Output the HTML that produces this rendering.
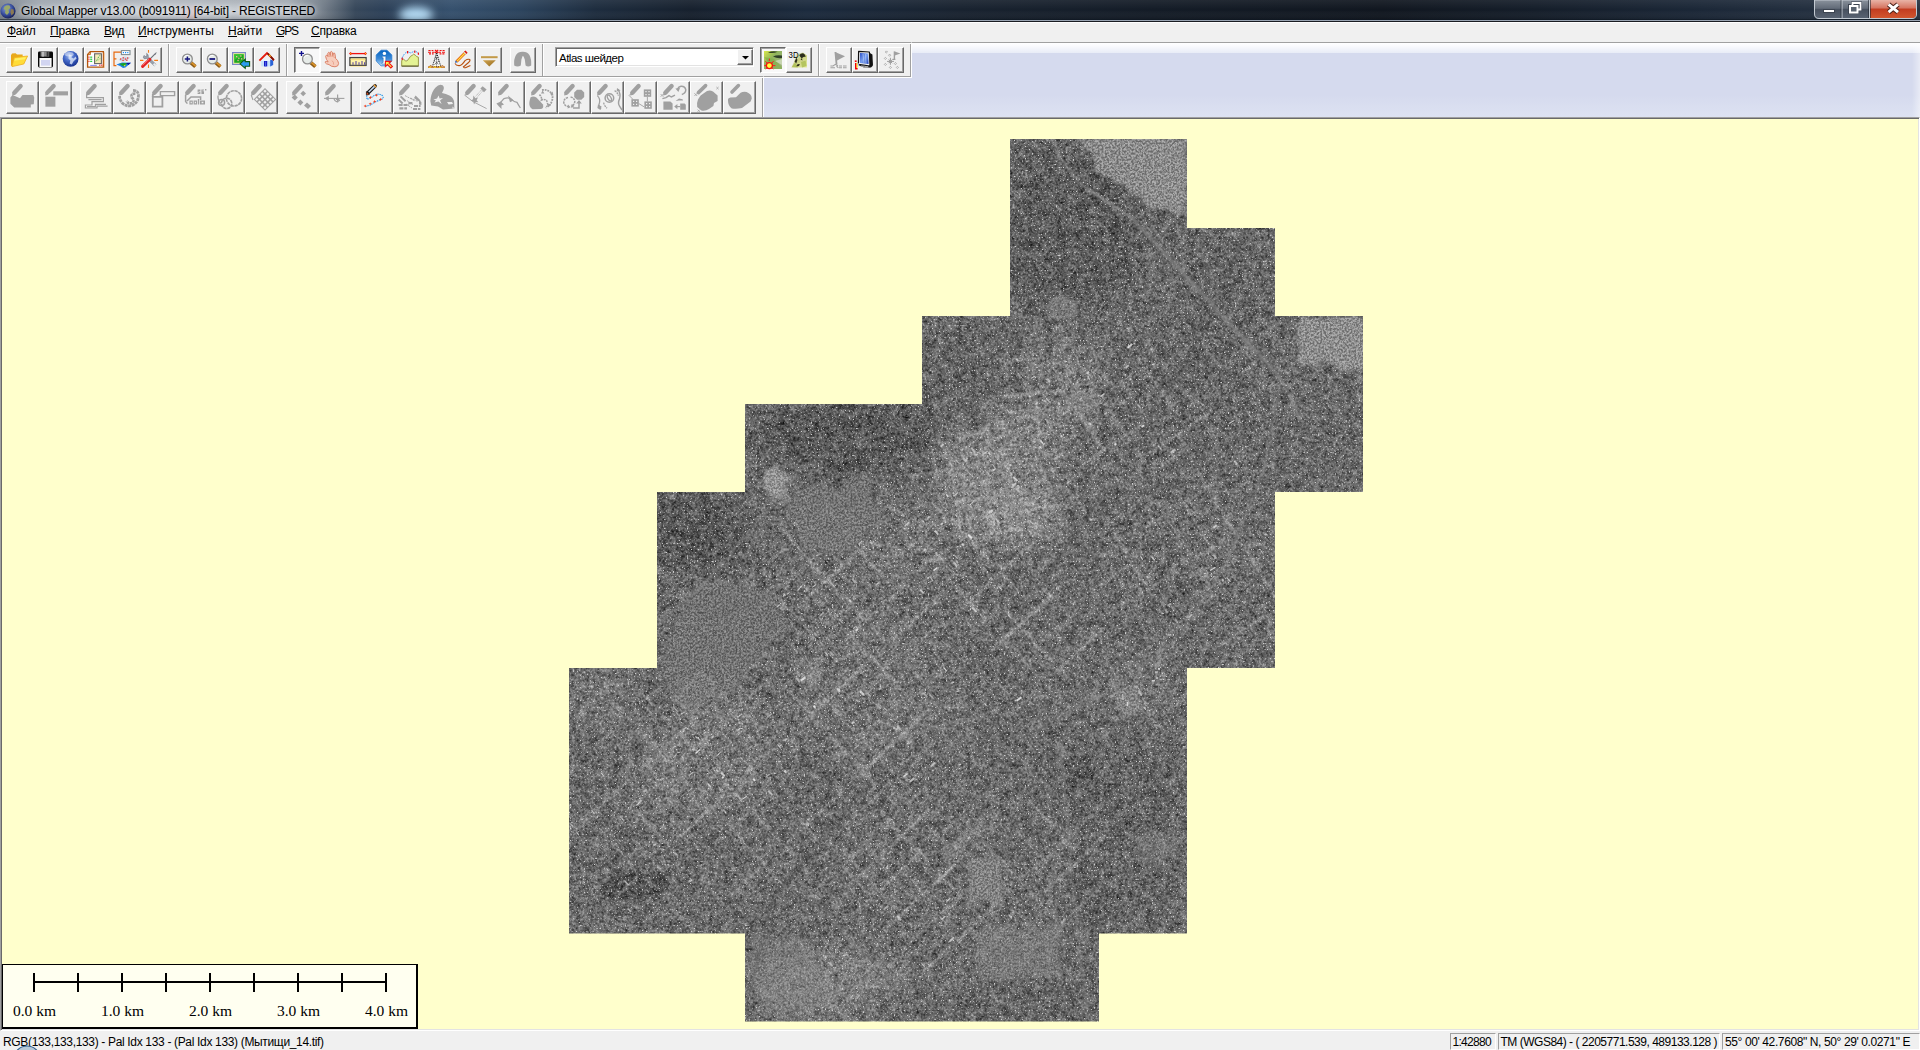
<!DOCTYPE html>
<html lang="ru">
<head>
<meta charset="utf-8">
<title>Global Mapper v13.00 (b091911) [64-bit] - REGISTERED</title>
<style>
html,body{margin:0;padding:0;}
body{width:1920px;height:1050px;overflow:hidden;position:relative;background:#ffffcc;font-family:"Liberation Sans",sans-serif;font-size:12px;color:#000;}
.abs{position:absolute;}
/* ---------- title bar ---------- */
#title{left:0;top:0;width:1920px;height:22px;background:#141c28;overflow:hidden;}
#title .txt{left:21px;top:4px;font-size:12px;line-height:14px;color:#000;white-space:nowrap;letter-spacing:-.19px;text-shadow:0 0 4px rgba(255,255,255,.7);}
/* ---------- menu ---------- */
#menu{left:0;top:22px;width:1920px;height:20px;background:#f0f0f0;border-top:1px solid #fff;box-sizing:border-box;}
#menu span{position:absolute;top:1px;font-size:12px;line-height:14px;white-space:nowrap;}
#menu i{position:absolute;left:0;top:12px;height:1px;background:#000;}
/* ---------- toolbars ---------- */
#tbzone{left:0;top:42px;width:1920px;height:75px;box-sizing:border-box;border-top:1px solid #a0a0a0;background:linear-gradient(#ffffff 0,#fcfcfe 2px,#e8ecf7 10px,#d5daee 10px,#d5daee 52px,#dde2f2 74px);}
#tb1{left:0;top:42px;width:912px;height:36px;background:#f0f0f0;box-sizing:border-box;border-top:1px solid #a0a0a0;border-right:1px solid #fff;border-bottom:1px solid #fff;box-shadow:inset 0 1px 0 #fff,inset -1px -1px 0 #a0a0a0;}
#tb2{left:0;top:76px;width:764px;height:41px;background:#f0f0f0;box-sizing:border-box;border-top:1px solid #a0a0a0;border-right:1px solid #fff;box-shadow:inset 0 1px 0 #fff,inset -1px 0 0 #a0a0a0;}
.b1{position:absolute;top:47px;width:26px;height:26px;box-sizing:border-box;background:#f0f0f0;border:1px solid;border-color:#fff #696969 #696969 #fff;box-shadow:inset -1px -1px 0 #a0a0a0;}
.b1.down{border-color:#696969 #fff #fff #696969;box-shadow:inset 1px 1px 0 #a0a0a0;background:#f8f8f8;}
.b2{position:absolute;top:81px;width:33px;height:33px;box-sizing:border-box;background:#f0f0f0;border:1px solid;border-color:#fff #696969 #696969 #fff;box-shadow:inset -1px -1px 0 #a0a0a0;}
.b1 svg,.b2 svg{position:absolute;left:0;top:0;}
.sep{position:absolute;top:44px;width:1px;height:32px;background:#a0a0a0;border-right:1px solid #fff;}
#combo{left:555px;top:47px;width:199px;height:20px;box-sizing:border-box;background:#fff;border:1px solid;border-color:#a0a0a0 #fff #fff #a0a0a0;box-shadow:inset 1px 1px 0 #696969,inset -1px -1px 0 #e3e3e3;}
#combo .ctext{left:3px;top:4px;font-size:11.5px;line-height:13px;white-space:nowrap;letter-spacing:-.5px;}
#combo .cbtn{left:181px;top:1px;width:16px;height:16px;box-sizing:border-box;background:#f0f0f0;border:1px solid;border-color:#fff #696969 #696969 #fff;box-shadow:inset -1px -1px 0 #a0a0a0;}
#combo .cbtn svg{position:absolute;left:-1px;top:-1px;}
/* ---------- map ---------- */
#map{left:0;top:117px;width:1920px;height:914px;background:#ffffcc;box-sizing:border-box;border:1px solid;border-color:#a0a0a0 #fff #fff #a0a0a0;box-shadow:inset 1px 1px 0 #696969,inset -1px -1px 0 #e3e3e3;}
/* ---------- status ---------- */
#status{left:0;top:1031px;width:1920px;height:19px;background:#f0f0f0;}
#status span{position:absolute;top:4px;font-size:12px;line-height:14px;white-space:nowrap;}
.pane{position:absolute;top:1033px;height:17px;box-sizing:border-box;border:1px solid;border-color:#a0a0a0 #fff #fff #a0a0a0;}
</style>
</head>
<body>
<!-- TITLE -->
<div id="title" class="abs">
  <svg class="abs" style="left:0;top:0" width="1920" height="22" viewBox="0 0 1920 22">
    <defs>
      <linearGradient id="tbg" x1="0" y1="0" x2="1920" y2="0" gradientUnits="userSpaceOnUse">
        <stop offset="0" stop-color="#7d858f"/><stop offset=".02" stop-color="#9aa2ab"/><stop offset=".09" stop-color="#a9afb6"/>
        <stop offset=".15" stop-color="#9fa6ae"/><stop offset=".17" stop-color="#6d7884"/><stop offset=".185" stop-color="#36475a"/>
        <stop offset=".2" stop-color="#2c4058"/><stop offset=".235" stop-color="#35506d"/><stop offset=".27" stop-color="#2c445e"/>
        <stop offset=".31" stop-color="#1d2c3e"/><stop offset=".36" stop-color="#16202d"/><stop offset=".42" stop-color="#1b2a3d"/>
        <stop offset=".5" stop-color="#18222f"/><stop offset=".6" stop-color="#131b26"/><stop offset=".72" stop-color="#10161f"/>
        <stop offset=".8" stop-color="#141d29"/><stop offset=".88" stop-color="#1a2636"/><stop offset=".94" stop-color="#222e3e"/><stop offset="1" stop-color="#2a3442"/>
      </linearGradient>
      <linearGradient id="tsh" x1="0" y1="0" x2="0" y2="1"><stop offset="0" stop-color="#fff" stop-opacity=".07"/><stop offset=".5" stop-color="#fff" stop-opacity="0"/><stop offset="1" stop-color="#000" stop-opacity=".12"/></linearGradient>
      <linearGradient id="cbg" x1="0" y1="0" x2="0" y2="1"><stop offset="0" stop-color="#8a929c"/><stop offset=".45" stop-color="#626b78"/><stop offset=".5" stop-color="#47505e"/><stop offset="1" stop-color="#5a6473"/></linearGradient>
      <linearGradient id="crd" x1="0" y1="0" x2="0" y2="1"><stop offset="0" stop-color="#e9b3a6"/><stop offset=".45" stop-color="#d5735f"/><stop offset=".5" stop-color="#c23c20"/><stop offset="1" stop-color="#d2562f"/></linearGradient>
      <radialGradient id="earth" cx=".4" cy=".35" r=".7"><stop offset="0" stop-color="#8aa0d8"/><stop offset=".6" stop-color="#344a9a"/><stop offset="1" stop-color="#141a4a"/></radialGradient>
      <filter id="tglow" x="-10%" y="-100%" width="120%" height="300%"><feGaussianBlur stdDeviation="5"/></filter>
      <filter id="tglow2" x="-50%" y="-50%" width="200%" height="200%"><feGaussianBlur stdDeviation="4"/></filter>
    </defs>
    <rect x="0" y="0" width="1920" height="20" fill="url(#tbg)"/>
    <ellipse cx="416" cy="15" rx="17" ry="8" fill="#b4dcf6" filter="url(#tglow2)"/>
    <ellipse cx="170" cy="11" rx="150" ry="6" fill="#e4e8ec" opacity=".75" filter="url(#tglow)"/>
    <ellipse cx="190" cy="14" rx="8" ry="5" fill="#e9a0a8" opacity=".45" filter="url(#tglow2)"/>
    <rect x="0" y="0" width="1920" height="20" fill="url(#tsh)"/>
    <rect x="0" y="19" width="1920" height="1" fill="#0e1722" opacity=".55"/>
    <rect x="0" y="20" width="1920" height="1" fill="#9aa4b2"/>
    <rect x="0" y="21" width="1920" height="1" fill="#1a1c22"/>
    <!-- app icon -->
    <circle cx="8" cy="11" r="7.6" fill="url(#earth)"/>
    <path d="M4.6 6.4 Q7 4.6 9.6 5.4 L10.4 8 L8.4 9.6 L9 12.4 L7 15 L5 13 L5.6 10 L3.6 9Z" fill="#9aa86a"/>
    <path d="M11 9 L13.6 9.6 L14 13 L11.6 15.4 L10.4 12.4Z" fill="#8c7a52"/>
    <!-- caption buttons -->
    <path d="M1814.5 0 V14 Q1814.5 18.5 1819 18.5 H1912 Q1916.5 18.5 1916.5 14 V0Z" fill="url(#cbg)" stroke="#c3cad2" stroke-width="1"/>
    <path d="M1869.5 0 H1916 V14 Q1916 18 1912 18 H1869.5Z" fill="url(#crd)"/>
    <path d="M1842 0 V18 M1869.5 0 V18" stroke="#c3cad2" stroke-width="1"/>
    <path d="M1841 0 V18 M1868.5 0 V18 M1870.5 0 V18" stroke="#1c222c" stroke-width="1" opacity=".55"/>
    <rect x="1823.5" y="9.5" width="11" height="3" fill="#fff" stroke="#3c4450" stroke-width="1"/>
    <path d="M1852.5 3 H1860.5 V9.5 H1852.5Z M1849.5 5.5 H1857.5 V12.5 H1849.5Z" fill="none" stroke="#3c4450" stroke-width="3"/>
    <path d="M1852.5 3 H1860.5 V9.5 H1852.5Z" fill="none" stroke="#fff" stroke-width="1.8"/>
    <path d="M1850 6 H1857.5 V12.5 H1850Z" fill="#59636f" stroke="#fff" stroke-width="2"/>
    <path d="M1888.6 4.4 L1898 12.2 M1898 4.4 L1888.6 12.2" stroke="#4a2018" stroke-width="5"/>
    <path d="M1888.6 4.4 L1898 12.2 M1898 4.4 L1888.6 12.2" stroke="#fff" stroke-width="3"/>
  </svg>
  <div class="abs txt">Global Mapper v13.00 (b091911) [64-bit] - REGISTERED</div>
</div>
<!-- MENU -->
<div id="menu" class="abs">
  <span style="left:7px;letter-spacing:-0.25px">Файл<i style="width:9px"></i></span>
  <span style="left:50px;letter-spacing:-0.17px">Правка<i style="width:8.5px"></i></span>
  <span style="left:104px;letter-spacing:-0.57px">Вид<i style="width:7.5px"></i></span>
  <span style="left:138px;letter-spacing:0.1px">Инструменты<i style="width:8.7px"></i></span>
  <span style="left:228px;letter-spacing:0px">Найти<i style="width:8.7px"></i></span>
  <span style="left:276px;letter-spacing:-1.2px">GPS<i style="width:8.2px"></i></span>
  <span style="left:311px;letter-spacing:-0.22px">Справка<i style="width:8.5px"></i></span>
</div>
<!-- TOOLBARS -->
<div id="tbzone" class="abs"></div>
<div id="tb1" class="abs"></div>
<div id="tb2" class="abs"></div>
<div class="b1" style="left:6px"><svg width="26" height="26" viewBox="0 0 26 26" style="left:-1px;top:-1px"><path d="M5 8.2 L6 6.6 L9.6 6.2 L11 7.6 L16.6 7.6 L16.8 10.2 L8.4 11 L6.2 19.4 L5 18.6Z" fill="#e9a91a"/>
<path d="M8.2 10.6 L21.6 9 L17.8 17 L6 19.6Z" fill="#ffdc38" stroke="#efaf1a" stroke-width=".8"/>
<path d="M9 11.6 L20 10.2 L19 12.2 L8.4 13.8Z" fill="#fff36a" opacity=".9"/></svg></div>
<div class="b1" style="left:32px"><svg width="26" height="26" viewBox="0 0 26 26" style="left:-1px;top:-1px"><path d="M6 6 Q6 4.6 7.4 4.6 L19.6 4.6 Q21 4.6 21 6 L21 19 Q21 20.4 19.6 20.4 L7.4 20.4 Q6 20.4 6 19Z" fill="#0a0a0a"/>
<rect x="8.6" y="4.8" width="8.6" height="4.8" fill="#8c8c8c"/>
<rect x="10.2" y="4.8" width="1.6" height="4.8" fill="#c8c8c8"/>
<rect x="14.6" y="4.8" width="2" height="4.8" fill="#3a3a3a"/>
<rect x="7.4" y="11" width="12.2" height="9.2" fill="#fafafa"/>
<rect x="9" y="13" width="9" height="5.6" fill="#d2d5f1"/></svg></div>
<div class="b1" style="left:58px"><svg width="26" height="26" viewBox="0 0 26 26" style="left:-1px;top:-1px"><defs><radialGradient id="gl" cx=".42" cy=".32" r=".75"><stop offset="0" stop-color="#9fb9ee"/><stop offset=".45" stop-color="#4469c8"/><stop offset="1" stop-color="#112a86"/></radialGradient></defs>
<circle cx="12.6" cy="11.8" r="7.9" fill="url(#gl)"/>
<path d="M11 7.5 L14 8.6 L13.4 10.6 L15.6 11.6 L17.6 9.4 L18.6 11.6 L15.4 14.4 L13.8 17.4 L11.6 16.6 L12.4 13.4 L10.4 11.4Z" fill="#dfe7f7" opacity=".8"/>
<ellipse cx="11.2" cy="7.2" rx="4.4" ry="2.2" fill="#fff" opacity=".45"/></svg></div>
<div class="b1" style="left:84px"><svg width="26" height="26" viewBox="0 0 26 26" style="left:-1px;top:-1px"><path d="M6.2 4.6 L19.4 4.6 L19.4 20.2 L3.6 20.2 L3.6 7.4Z" fill="#fefefe" stroke="#b4560c" stroke-width="1.3"/>
<path d="M6.4 4.8 L6.4 7.6 L3.8 7.6Z" fill="#f7c58d" stroke="#b4560c" stroke-width=".8"/>
<rect x="19.8" y="5.4" width="1" height="15.6" fill="#f6b476" opacity=".7"/>
<rect x="10.6" y="6.8" width="6.8" height="9.8" fill="#f6ebb8" stroke="#666" stroke-width="1.1"/>
<path d="M12 14.4 L13.4 12.2 L14.6 10 L15.8 8.4 M14 13.4 L15.8 11.6" stroke="#2fae3b" stroke-width=".9" stroke-dasharray="1.2 .8" fill="none"/>
<g fill="#13c82c"><rect x="6.2" y="9.6" width="2" height="1.1"/><rect x="6.2" y="11.7" width="2" height="1.1"/><rect x="6.2" y="13.8" width="2" height="1.1"/></g>
<g fill="#f01414"><rect x="4.4" y="9.6" width="1.1" height="1.1"/><rect x="4.4" y="11.7" width="1.1" height="1.1"/><rect x="4.4" y="13.8" width="1.1" height="1.1"/><rect x="15.2" y="17.6" width="1.2" height="1.2"/><rect x="17.2" y="17.6" width="1.2" height="1.2"/></g>
<rect x="6.2" y="17.9" width="6.6" height=".9" fill="#7b7bf0"/></svg></div>
<div class="b1" style="left:110px"><svg width="26" height="26" viewBox="0 0 26 26" style="left:-1px;top:-1px"><path d="M11 5.2 H4 V18.6 H6.4 M4 11.8 H6.4" stroke="#e8690f" stroke-width="1.2" fill="none"/>
<rect x="11.4" y="3.6" width="8.6" height="4" fill="#fff" stroke="#7f8a8f" stroke-width="1.1"/>
<g fill="#1890ff"><rect x="12.8" y="5" width="1.2" height="1.2"/><rect x="15" y="5" width="1.2" height="1.2"/><rect x="17.2" y="5" width="1.2" height="1.2"/></g>
<path d="M8.6 12.6 L14 9.4 L20.4 10.4 L16 14.2 L10.6 14.2Z" fill="#bfd5e6" opacity=".85"/>
<g fill="#f03030"><rect x="10" y="11.4" width="1.3" height="1.3"/><rect x="12.6" y="10.2" width="1.3" height="1.3"/><rect x="14.8" y="11.4" width="1.3" height="1.3"/><rect x="17" y="10.4" width="1.3" height="1.3"/><rect x="12.4" y="12.8" width="1.3" height="1.3"/><rect x="16.2" y="12.6" width="1.3" height="1.3"/></g>
<path d="M6.4 17.4 L12 15.6 L21 15.8 L15.4 20.6 L13 21 L10 19Z" fill="#1d7ee8"/>
<path d="M9.4 16.8 L13.4 16 L17.6 16.2 L14.2 19.4 L11.6 18.6Z" fill="#18a22a"/>
<path d="M16 16 L21 15.8 L18.4 18Z" fill="#0b1a9a"/>
<path d="M13.6 18.4 L15.6 17.6 L15 19.8Z" fill="#f3e82c"/></svg></div>
<div class="b1" style="left:136px"><svg width="26" height="26" viewBox="0 0 26 26" style="left:-1px;top:-1px"><path d="M4 13.4 H7.4 M18.2 13.4 H22 M12.5 3 V5.8 M12.5 17.6 V21" stroke="#f57d14" stroke-width="1.1"/>
<path d="M8.2 8.4 Q6.4 10.4 8.4 11.8 L10.6 11.4 L18.4 19 L20 17.4 L12.2 9.8 Q12.8 7.4 10.6 6.4 L11 8.6 L9.4 9.6Z" fill="#9da3ad" stroke="#6c7380" stroke-width=".6"/>
<path d="M17 17.6 L19 19.4 L20.4 18 L18.4 16Z" fill="#e9edf0"/>
<path d="M13.6 12.4 L19.6 6.4" stroke="#6a6f78" stroke-width="1.2"/>
<path d="M19.2 7.6 L20.2 5.4" stroke="#6a6f78" stroke-width=".9"/>
<path d="M6.6 19.4 L13.8 12.4" stroke="#e32424" stroke-width="3" stroke-linecap="round"/>
<path d="M7 18 L12.8 12.4" stroke="#f88" stroke-width=".8" stroke-linecap="round"/></svg></div>
<div class="b1" style="left:176px"><svg width="26" height="26" viewBox="0 0 26 26" style="left:-1px;top:-1px"><path d="M14.8 15.6 L19.4 19.6" stroke="#8a5a17" stroke-width="3.6" stroke-linecap="butt"/>
<path d="M15.0 15.2 L19.8 19.4" stroke="#dc942b" stroke-width="1.6"/>
<circle cx="11.4" cy="12" r="4.9" fill="#e6ebe8" stroke="#8e8e8e" stroke-width="1.3"/>
<path d="M8.0 10.8 A3.8 3.8 0 0 1 12.4 8.4" stroke="#fff" stroke-width="1" fill="none"/><path d="M8.8 12 H14.0 M11.4 9.4 V14.6" stroke="#16167e" stroke-width="1.5"/></svg></div>
<div class="b1" style="left:202px"><svg width="26" height="26" viewBox="0 0 26 26" style="left:-1px;top:-1px"><path d="M13.700000000000001 15.6 L18.3 19.6" stroke="#8a5a17" stroke-width="3.6" stroke-linecap="butt"/>
<path d="M13.9 15.2 L18.700000000000003 19.4" stroke="#dc942b" stroke-width="1.6"/>
<circle cx="10.3" cy="12" r="4.9" fill="#e6ebe8" stroke="#8e8e8e" stroke-width="1.3"/>
<path d="M6.9 10.8 A3.8 3.8 0 0 1 11.3 8.4" stroke="#fff" stroke-width="1" fill="none"/><path d="M7.500000000000001 12 H13.100000000000001" stroke="#16167e" stroke-width="1.8"/></svg></div>
<div class="b1" style="left:228px"><svg width="26" height="26" viewBox="0 0 26 26" style="left:-1px;top:-1px"><rect x="4.6" y="5.6" width="12.8" height="11.8" fill="#f2f29a" stroke="#7a88c8" stroke-width="1.2"/>
<rect x="6.2" y="7.2" width="9.6" height="8.6" fill="#1ea820"/>
<path d="M6.2 7.2 H15.8 L6.2 13Z" fill="#3fd238" opacity=".7"/>
<g fill="#f9b0a0"><rect x="8" y="9" width="1.3" height="1.3"/><rect x="10.2" y="10.6" width="1.3" height="1.3"/><rect x="12.2" y="8.4" width="1.3" height="1.3"/><rect x="9.4" y="12.8" width="1.3" height="1.3"/><rect x="13" y="11.2" width="1.3" height="1.3"/></g>
<path d="M12 16.8 L17.2 12.2 L17.2 14.6 L21.6 14.6 L21.6 19.2 L17.2 19.2 L17.2 21.4Z" fill="#2a9cf0" stroke="#0d5a12" stroke-width="1.1" stroke-linejoin="miter"/></svg></div>
<div class="b1" style="left:254px"><svg width="26" height="26" viewBox="0 0 26 26" style="left:-1px;top:-1px"><path d="M7.2 12.6 H17.4 V19.4 H7.2Z" fill="#e9f4ff"/>
<path d="M7.2 14 H17.4 V19.4 H7.2Z" fill="#b7d9f7" opacity=".7"/>
<path d="M16.2 12.4 L19.2 13.4 V18 L16.2 19.4Z" fill="#2a63d8"/>
<rect x="10" y="14" width="3.2" height="5.4" fill="#1818c4"/>
<rect x="11.3" y="14.6" width=".8" height="4.8" fill="#5a7df0"/>
<path d="M5.4 13.6 L13 6 L20 13.2" stroke="#e51a0c" stroke-width="1.9" fill="none" stroke-linejoin="miter"/>
<path d="M12.6 6.2 L14.8 6.2 L20.2 12.2 L19.4 14Z" fill="#7a1408"/>
<path d="M15 7.8 L16.6 9.6" stroke="#f5b018" stroke-width="1.4"/></svg></div>
<div class="b1 down" style="left:294px"><svg width="26" height="26" viewBox="0 0 26 26" style="left:-1px;top:-1px"><path d="M5 6.4 H10 M7.5 3.9 V8.9" stroke="#10108c" stroke-width="1.4"/>
<path d="M16.8 15.6 L21.4 19.6" stroke="#8a5a17" stroke-width="3.6" stroke-linecap="butt"/>
<path d="M17.0 15.2 L21.8 19.4" stroke="#dc942b" stroke-width="1.6"/>
<circle cx="13.4" cy="12" r="4.9" fill="#e6ebe8" stroke="#8e8e8e" stroke-width="1.3"/>
<path d="M10.0 10.8 A3.8 3.8 0 0 1 14.4 8.4" stroke="#fff" stroke-width="1" fill="none"/></svg></div>
<div class="b1" style="left:320px"><svg width="26" height="26" viewBox="0 0 26 26" style="left:-1px;top:-1px"><path d="M5.6 9.4 Q6.4 7.4 7.4 8.2 L8 9.6 L7.8 6.2 Q8.6 4.4 9.8 6 L10.2 8.6 L10.4 5 Q11.6 3.6 12.4 5.4 L12.8 8.8 L13.4 6.2 Q14.8 5.4 15 7.2 L15.6 11.4 Q18.4 13.6 18.6 16.4 Q18.6 19.6 15 19.8 Q11 19.8 9 17.6 L6.4 16.8 Q4.6 15.8 5.4 14.6 Q6.6 14.2 8.2 15 Q6 12.4 5.6 9.4Z" fill="#f7cdbd" stroke="#d8795f" stroke-width=".9" stroke-linejoin="round"/>
<path d="M9 9.4 Q12 8 15 10.6 M12 13.6 Q14 15 13.6 17.6" stroke="#e59a84" stroke-width=".8" fill="none"/></svg></div>
<div class="b1" style="left:346px"><svg width="26" height="26" viewBox="0 0 26 26" style="left:-1px;top:-1px"><path d="M4 6.6 H20" stroke="#f01010" stroke-width="1.3"/>
<path d="M3 6.6 L4.6 5 L6.2 6.6 L4.6 8.2Z M17.8 6.6 L19.4 5 L21 6.6 L19.4 8.2Z" fill="#f01010"/>
<rect x="19" y="6" width="1" height="1.2" fill="#fc0"/><rect x="4.2" y="6" width="1" height="1.2" fill="#fc0"/>
<rect x="3.9" y="10.6" width="16.2" height="7.8" fill="#fff3a8" stroke="#414141" stroke-width="1.3"/>
<rect x="4.4" y="18.9" width="15.4" height=".9" fill="#ffe9a0"/>
<path d="M7 15.2 V17.8 M10 14 V17.8 M13 15.2 V17.8 M16 14 V17.8 M18.6 15.2 V17.8" stroke="#5c4aa0" stroke-width="1.1"/>
<path d="M4.6 12.4 H19.4" stroke="#f7dd80" stroke-width="1"/></svg></div>
<div class="b1" style="left:372px"><svg width="26" height="26" viewBox="0 0 26 26" style="left:-1px;top:-1px"><defs><linearGradient id="ig" x1="0" y1="0" x2="0" y2="1"><stop offset="0" stop-color="#0462bf"/><stop offset=".55" stop-color="#3b8ad8"/><stop offset="1" stop-color="#b9dcf6"/></linearGradient></defs>
<path d="M9 3.2 H15 L19.8 8 V14 L15 18.8 H9 L4.2 14 V8Z" fill="url(#ig)" stroke="#2a7bd0" stroke-width=".8"/>
<circle cx="12.4" cy="6.4" r="1.7" fill="#fff"/>
<path d="M10.2 9.2 H13.8 V15.4 H15 V17 H10 V15.4 H11.2 V10.8 H10.2Z" fill="#fff" stroke="#1363b4" stroke-width=".5"/>
<path d="M13.4 14.4 H18.8 L17 16 L20.4 19.4 L18.8 21 L15.4 17.6 L13.4 19.4Z" fill="#ffee4a" stroke="#f01414" stroke-width="1.1" stroke-linejoin="miter"/></svg></div>
<div class="b1" style="left:398px"><svg width="26" height="26" viewBox="0 0 26 26" style="left:-1px;top:-1px"><path d="M3.7 19 V13.4 L5.6 12.2 L7.4 13.8 L8.8 14 L10.6 12 L12.6 9.2 L14.2 8.4 L15.6 7.2 L17.4 8.2 L18.6 9.6 L20.4 10.2 V19Z" fill="#e4f394" stroke="#9a9a48" stroke-width="1"/>
<path d="M3.6 19.2 H20.6" stroke="#6a6a40" stroke-width="1.2"/>
<path d="M4 11.6 Q6 6 9.6 4.6 Q11.6 5.6 13 6 Q15 4.6 17 4.2 Q19.6 4.8 20.4 7" stroke="#1e90ff" stroke-width="1" stroke-dasharray="1.2 .8" fill="none"/>
<g fill="#f01010"><rect x="3.6" y="10.6" width="1.2" height="2.4"/><rect x="9" y="4" width="1.2" height="2.4"/><rect x="16.2" y="3.6" width="1.2" height="2.2"/><rect x="19.8" y="5.6" width="1.2" height="2.2"/></g></svg></div>
<div class="b1" style="left:424px"><svg width="26" height="26" viewBox="0 0 26 26" style="left:-1px;top:-1px"><path d="M12.6 5.6 L8.4 19.6 H16.8Z" fill="#fcfcfc" stroke="#222" stroke-width="1" stroke-dasharray="1.2 .8"/>
<path d="M12.6 6 V19.6 M11 10 L14.4 13 M14.2 10 L10.6 13.4 M10.4 14 L15 17.6 M15 14 L9.8 18" stroke="#222" stroke-width=".8" stroke-dasharray="1 .9"/>
<path d="M4.4 3.5 H6.6 M7.6 3.5 H9.4 M4 5.2 H7 M8 5.2 H10.6 M5 6.9 H7 M8 6.9 H9.6 M15.6 3.5 H17.6 M18.6 3.5 H20.6 M14.6 5.2 H17 M18 5.2 H21 M15.6 6.9 H17.4 M18.4 6.9 H20.4 M11 3 L14.2 6 M14.2 3 L11 6" stroke="#f01010" stroke-width="1.1"/>
<path d="M4 20.2 H21" stroke="#c7781a" stroke-width="1.3"/>
<path d="M5 20.2 H7 M10 20.2 H12 M15 20.2 H17" stroke="#f7d321" stroke-width="1.3"/>
<path d="M4.6 20 L6 18.6 L9 19.6 M20.4 20 L19 18.6 L16.2 19.6" stroke="#b5651d" stroke-width=".9" fill="none"/></svg></div>
<div class="b1" style="left:450px"><svg width="26" height="26" viewBox="0 0 26 26" style="left:-1px;top:-1px"><path d="M6.6 14.6 L16.2 4.8" stroke="#e8650a" stroke-width="2.8"/>
<path d="M6.9 14.3 L16 5" stroke="#ffe24a" stroke-width="1.1"/>
<path d="M15.4 3.6 L17.6 5.8 L16.6 7 L14.2 4.8Z" fill="#d81414"/>
<path d="M14.2 4.8 L16.6 7 L16 7.6 L13.6 5.4Z" fill="#cfd6e4"/>
<path d="M5 15.8 L5.6 13.4 L7.6 15.2Z" fill="#1f4fa8"/>
<path d="M5 16.4 Q6 18.8 9.4 18.6 Q12 18.4 15 13.6 Q18 11.6 19.8 12.6 Q20.6 14 18 16 Q14 19.4 13.4 19.8 Q14 21.4 16 20.4 L20.4 18.4" stroke="#b8500f" stroke-width="1.1" fill="none"/></svg></div>
<div class="b1" style="left:476px"><svg width="26" height="26" viewBox="0 0 26 26" style="left:-1px;top:-1px"><defs><linearGradient id="tg" x1="0" y1="0" x2="1" y2="1"><stop offset="0" stop-color="#d3a650"/><stop offset="1" stop-color="#946a1f"/></linearGradient></defs>
<rect x="5" y="9.2" width="16.6" height="2" fill="#c39a48"/>
<path d="M6.8 13.2 H19.8 L13.3 19.4Z" fill="url(#tg)"/></svg></div>
<div class="b1" style="left:510px"><svg width="26" height="26" viewBox="0 0 26 26" style="left:-1px;top:-1px"><path d="M4.2 18.6 Q3.6 12 6 8 Q8.4 4.6 12.6 4.8 Q17 4.6 19.4 8 Q21.6 12 21.2 18.6 Q18 20.4 15.6 18.6 L14.8 12.6 L13.6 9.4 L12.6 9 L11.4 12.6 L10.8 18.6 Q7.6 20.4 4.2 18.6Z" fill="#a0a0a0"/></svg></div>
<div class="b1 down" style="left:760px"><svg width="26" height="26" viewBox="0 0 26 26" style="left:-1px;top:-1px"><defs><linearGradient id="sg" x1="0" y1="0" x2="1" y2="1"><stop offset="0" stop-color="#dbe84a"/><stop offset=".4" stop-color="#8fb45c"/><stop offset="1" stop-color="#a9b78f"/></linearGradient></defs>
<rect x="4" y="4" width="18" height="18" fill="url(#sg)"/>
<path d="M8 5.4 Q13 3.6 17.6 4.8 Q13 6.8 8 5.4Z M13 9.6 Q17 7.6 22 8.6 V11 Q17 11.6 13 9.6Z" fill="#1c2a1c" opacity=".85"/>
<path d="M4 10 L14 12 L22 20 V22 H14Z" fill="#7fae45" opacity=".6"/>
<path d="M15 14 L22 12 V18Z" fill="#d9e3c8" opacity=".7"/>
<path d="M9.4 11.6 V14 M4.2 18.6 H6 M12.8 18.6 H15.4 M5.4 14.2 L7 16 M13.6 14 L12 16 M5.6 22 L7 20.8 M12 20.8 L13.4 22" stroke="#f62020" stroke-width="1"/>
<circle cx="9.4" cy="18.6" r="3" fill="#ffff3a" stroke="#f41010" stroke-width="1.3"/></svg></div>
<div class="b1" style="left:786px"><svg width="26" height="26" viewBox="0 0 26 26" style="left:-1px;top:-1px"><defs><linearGradient id="dg" x1="0" y1="0" x2="1" y2="1"><stop offset="0" stop-color="#e9f3ee"/><stop offset=".5" stop-color="#c9cf82"/><stop offset="1" stop-color="#e6ec9c"/></linearGradient></defs>
<path d="M10 7.2 L17 5.4 L21 8.6 V20.6 H5.4 L8 15Z" fill="url(#dg)"/>
<path d="M13.2 8 Q15 6 17.6 6.4 Q19.6 7.6 19.6 10 Q17 9 16 11.4 Q14.4 10.6 13.2 8Z M8.6 14.4 L10.6 10.4 L11.4 13 L10.2 16.6Z M9.6 19.4 Q12 16 14 17.4 Q13 20 9.6 19.4Z M14.6 12.4 L16 11 L16.4 13.6Z" fill="#1a1a10" opacity=".9"/>
<path d="M6 20 L9 15.6 L12 20.6Z M15 15 L19.6 13.6 L20.6 19 L16 20.6Z" fill="#a8bb4d" opacity=".75"/>
<text x="2.6" y="10.6" font-family="Liberation Sans, sans-serif" font-size="9.5" fill="#000" textLength="10" lengthAdjust="spacingAndGlyphs">3D</text></svg></div>
<div class="b1" style="left:826px"><svg width="26" height="26" viewBox="0 0 26 26" style="left:-1px;top:-1px"><path d="M9.4 5 L10.6 17.6" stroke="#a0a0a0" stroke-width="1.8"/>
<path d="M9 5 L19 9.2 L10.2 14Z" fill="#a0a0a0"/>
<path d="M4.4 19 H7 L9.4 17.4 L12 19 M4.4 20.8 H9 M10.4 19.4 L12.4 20.8 M13 19 H16 M13 20.8 H16 M17 19 H20.6 M17 20.8 H20.6" stroke="#a0a0a0" stroke-width="1.1" fill="none"/></svg></div>
<div class="b1" style="left:852px"><svg width="26" height="26" viewBox="0 0 26 26" style="left:-1px;top:-1px"><defs><linearGradient id="mg" x1="0" y1="0" x2="1" y2="1"><stop offset="0" stop-color="#2a4fc6"/><stop offset=".5" stop-color="#7aa1ef"/><stop offset="1" stop-color="#1b3fb6"/></linearGradient></defs>
<path d="M17 5.4 L20.4 7.4 L21 18.4 L17.4 20.4Z" fill="#111"/>
<path d="M6.6 4.4 L17.4 5 L18 19 L6.4 17.4Z" fill="#f4f4f4" stroke="#111" stroke-width="1.2" stroke-linejoin="round"/>
<path d="M8 6 L16.2 6.6 L16.6 17 L7.8 16Z" fill="url(#mg)"/>
<path d="M11 7 L12 16.4 M13.4 7 L14 16.6" stroke="#a8c2f6" stroke-width="1" opacity=".8"/>
<path d="M7 18.4 L12 20.6 L19 20.4 L20.6 19 L13 19.4 L8 17.6Z" fill="#111"/>
<path d="M8.8 18.8 L12.4 20 L16 19.8" stroke="#d9d9d9" stroke-width=".8" fill="none"/>
<rect x="2.8" y="13.4" width="1.8" height="1.6" fill="#f60000"/>
<path d="M3 16 H4.6 V21 H5.6 V22.4 H3Z" fill="#f60000"/>
<rect x="4.6" y="15.6" width="1.2" height="5" fill="#ffef2a"/>
<path d="M5.6 15.4 L7.4 17 L6 19.4Z" fill="#a8a6f2"/></svg></div>
<div class="b1" style="left:878px"><svg width="26" height="26" viewBox="0 0 26 26" style="left:-1px;top:-1px"><path d="M16.4 4.4 V12" stroke="#a0a0a0" stroke-width="1.4"/>
<path d="M16.8 4.4 L22.4 6.6 L16.8 8.6Z" fill="#a0a0a0"/>
<path d="M14.4 12.4 H17.4" stroke="#a0a0a0" stroke-width="1.2"/>
<path d="M12.4 10.8 V17.8 M9 14.4 H16 M10.6 12.6 L14.2 16.2 M14.2 12.6 L10.6 16.2" stroke="#a0a0a0" stroke-width="1"/>
<path d="M12.4 12 L14.4 14.4 L12.4 16.8 L10.4 14.4Z" fill="#a0a0a0"/>
<path d="M8.4 3.9 L9.5 5 L8.4 6.1 L7.300000000000001 5Z M11.6 7.1 L12.7 8.2 L11.6 9.299999999999999 L10.5 8.2Z M7.4 10.3 L8.5 11.4 L7.4 12.5 L6.300000000000001 11.4Z M7.4 16.299999999999997 L8.5 17.4 L7.4 18.5 L6.300000000000001 17.4Z M12.4 19.299999999999997 L13.5 20.4 L12.4 21.5 L11.3 20.4Z M17.4 15.500000000000002 L18.5 16.6 L17.4 17.700000000000003 L16.299999999999997 16.6Z M19.4 19.299999999999997 L20.5 20.4 L19.4 21.5 L18.299999999999997 20.4Z" fill="#f0f0f0" stroke="#a0a0a0" stroke-width=".8"/></svg></div>
<div class="sep" style="left:168px"></div>
<div class="sep" style="left:286px"></div>
<div class="sep" style="left:542px"></div>
<div class="sep" style="left:818px"></div>
<div id="combo" class="abs"><div class="abs ctext">Atlas шейдер</div><div class="abs cbtn"><svg width="16" height="16" viewBox="0 0 16 16"><path d="M5 7 H12 L8.5 10.6Z" fill="#000"/></svg></div></div>
<div class="b2" style="left:6px"><svg width="33" height="33" viewBox="0 0 33 33" style="left:-1px;top:-1px"><path d="M14.6 5 L8.6 11.4" stroke="#a0a0a0" stroke-width="4.4" stroke-linecap="round"/><path d="M6.4 10.6 L9.6 13.8 L6.2 14.6Z" fill="#a0a0a0"/><path d="M4.4 16.5 L6.5 14 L14 17.3 L16.5 14 L27.3 14 L28.2 16.5 L27.8 23.2 L24.8 23.6 L24.8 26.5 L8.2 26.5 L4.4 22.8Z" fill="#a0a0a0"/></svg></div>
<div class="b2" style="left:39px"><svg width="33" height="33" viewBox="0 0 33 33" style="left:-1px;top:-1px"><path d="M14.6 5 L8.6 11.4" stroke="#a0a0a0" stroke-width="4.4" stroke-linecap="round"/><path d="M6.4 10.6 L9.6 13.8 L6.2 14.6Z" fill="#a0a0a0"/><path d="M14.3 10.3 H29 V14.4 H14.3Z" fill="#a0a0a0"/><path d="M6.4 15.7 H16.4 V25.7 H6.4Z" fill="#a0a0a0"/><path d="M9 13.6 L13 10.4 L13 14.6Z" fill="#f0f0f0"/></svg></div>
<div class="b2" style="left:80px"><svg width="33" height="33" viewBox="0 0 33 33" style="left:-1px;top:-1px"><path d="M14.6 5 L8.6 11.4" stroke="#a0a0a0" stroke-width="4.4" stroke-linecap="round"/><path d="M6.4 10.6 L9.6 13.8 L6.2 14.6Z" fill="#a0a0a0"/><path d="M6.6 12.4 V16.6 H23.4 V20.6 H12 V24 H5.4 V27 H17 V25.2 H27.6" fill="none" stroke="#a0a0a0" stroke-width="1.2"/><path d="M8.4 18.6 H21.6 M7 25.6 H15.4 V23.4 H26" fill="none" stroke="#a0a0a0" stroke-width="1.1"/></svg></div>
<div class="b2" style="left:113px"><svg width="33" height="33" viewBox="0 0 33 33" style="left:-1px;top:-1px"><path d="M14.6 5 L8.6 11.4" stroke="#a0a0a0" stroke-width="4.4" stroke-linecap="round"/><path d="M6.4 10.6 L9.6 13.8 L6.2 14.6Z" fill="#a0a0a0"/><path d="M20 9.4 Q26 9.6 25.4 15.6 Q25 21 20 24 Q15 26.4 10 22.6 Q6.4 19.4 6.6 15" fill="none" stroke="#a0a0a0" stroke-width="2.8" stroke-dasharray="3 .6"/><path d="M22.4 12.6 Q17.4 12.4 18.6 16.4 Q22 19 19.4 22 Q15.6 23.4 13.6 20" fill="none" stroke="#a0a0a0" stroke-width="2.6" stroke-dasharray="2.6 .6"/></svg></div>
<div class="b2" style="left:146px"><svg width="33" height="33" viewBox="0 0 33 33" style="left:-1px;top:-1px"><path d="M14.6 5 L8.6 11.4" stroke="#a0a0a0" stroke-width="4.4" stroke-linecap="round"/><path d="M6.4 10.6 L9.6 13.8 L6.2 14.6Z" fill="#a0a0a0"/><path d="M14.4 10.6 H28.6 V14.6 H14.4Z" fill="none" stroke="#a0a0a0" stroke-width="1.4"/><path d="M6.8 15.8 H16.4 V25.6 H6.8Z" fill="none" stroke="#a0a0a0" stroke-width="1.8"/><path d="M6.8 13 V16" fill="none" stroke="#a0a0a0" stroke-width="1.8"/></svg></div>
<div class="b2" style="left:179px"><svg width="33" height="33" viewBox="0 0 33 33" style="left:-1px;top:-1px"><path d="M14.6 5 L8.6 11.4" stroke="#a0a0a0" stroke-width="4.4" stroke-linecap="round"/><path d="M6.4 10.6 L9.6 13.8 L6.2 14.6Z" fill="#a0a0a0"/><path d="M6.6 14 V20.4 L8.4 22.6 M8 20 L12 16 H21.6 V19" fill="none" stroke="#a0a0a0" stroke-width="1.5"/><path d="M18.6 8.4 H21.4 V10.2 H19.6 V10.8 H21.4 V13 H18.6 V11.8 H20.2 V11.2 H18.6Z M22.4 8.4 H25 V9.4 H23.6 V10.2 H25 V13 H22.4Z M26 8 H27.4 V9.4 H26Z" fill="#a0a0a0"/><path d="M10.4 19.6 H13.8 V23.4 H10.4Z M14.6 19.6 H18 V23.4 H14.6Z M18.8 18 H20.2 V23.4 H18.8Z M21 19.6 H26 V23.4 H21Z" fill="#a0a0a0"/><path d="M11.6 20.8 H12.8 V22.2 H11.6Z M15.8 20.8 H17 V22.2 H15.8Z M22.6 20.8 H24.4 V22.2 H22.6Z" fill="#f0f0f0"/></svg></div>
<div class="b2" style="left:212px"><svg width="33" height="33" viewBox="0 0 33 33" style="left:-1px;top:-1px"><path d="M14.6 5 L8.6 11.4" stroke="#a0a0a0" stroke-width="4.4" stroke-linecap="round"/><path d="M6.4 10.6 L9.6 13.8 L6.2 14.6Z" fill="#a0a0a0"/><path d="M6 14.6 Q5.6 19.6 9 22.6" fill="none" stroke="#a0a0a0" stroke-width="1.3"/><circle cx="22" cy="17.4" r="7.6" fill="none" stroke="#a0a0a0" stroke-width="1.6" stroke-dasharray="3.4 .6"/><circle cx="14.6" cy="22.4" r="5.2" fill="none" stroke="#a0a0a0" stroke-width="1.6" stroke-dasharray="3.4 .6"/><circle cx="9.6" cy="21.6" r="3" fill="none" stroke="#a0a0a0" stroke-width="1.5"/></svg></div>
<div class="b2" style="left:245px"><svg width="33" height="33" viewBox="0 0 33 33" style="left:-1px;top:-1px"><g transform="translate(20 18.4) rotate(45)"><rect x="-8" y="-8" width="16" height="16" fill="#a0a0a0"/><rect x="-7.0" y="-7.0" width="2.3" height="2.3" fill="#f0f0f0"/><rect x="-7.0" y="-3.1" width="2.3" height="2.3" fill="#f0f0f0"/><rect x="-7.0" y="0.8" width="2.3" height="2.3" fill="#f0f0f0"/><rect x="-7.0" y="4.7" width="2.3" height="2.3" fill="#f0f0f0"/><rect x="-3.1" y="-7.0" width="2.3" height="2.3" fill="#f0f0f0"/><rect x="-3.1" y="-3.1" width="2.3" height="2.3" fill="#f0f0f0"/><rect x="-3.1" y="0.8" width="2.3" height="2.3" fill="#f0f0f0"/><rect x="-3.1" y="4.7" width="2.3" height="2.3" fill="#f0f0f0"/><rect x="0.8" y="-7.0" width="2.3" height="2.3" fill="#f0f0f0"/><rect x="0.8" y="-3.1" width="2.3" height="2.3" fill="#f0f0f0"/><rect x="0.8" y="0.8" width="2.3" height="2.3" fill="#f0f0f0"/><rect x="0.8" y="4.7" width="2.3" height="2.3" fill="#f0f0f0"/><rect x="4.7" y="-7.0" width="2.3" height="2.3" fill="#f0f0f0"/><rect x="4.7" y="-3.1" width="2.3" height="2.3" fill="#f0f0f0"/><rect x="4.7" y="0.8" width="2.3" height="2.3" fill="#f0f0f0"/><rect x="4.7" y="4.7" width="2.3" height="2.3" fill="#f0f0f0"/></g><path d="M14.6 5 L8.6 11.4" stroke="#a0a0a0" stroke-width="4.4" stroke-linecap="round"/><path d="M6.4 10.6 L9.6 13.8 L6.2 14.6Z" fill="#a0a0a0"/><path d="M6.2 14 L8 19" fill="none" stroke="#a0a0a0" stroke-width="1.1"/></svg></div>
<div class="b2" style="left:286px"><svg width="33" height="33" viewBox="0 0 33 33" style="left:-1px;top:-1px"><path d="M14.6 5 L8.6 11.4" stroke="#a0a0a0" stroke-width="4.4" stroke-linecap="round"/><path d="M6.4 10.6 L9.6 13.8 L6.2 14.6Z" fill="#a0a0a0"/><path d="M5.6 16.6 L8.8 13.6 L11.8 16.6 L8.8 19.6Z" fill="#a0a0a0"/><path d="M14.4 12.4 L17.2 9.8 L20 12.6 L17.2 15.2Z" fill="#a0a0a0"/><path d="M11.4 21.4 L14.4 18.6 L17.4 21.4 L14.4 24.4Z" fill="#a0a0a0"/><path d="M18 24.4 L21 21.4 L25 25 L22 28Z" fill="#a0a0a0"/></svg></div>
<div class="b2" style="left:319px"><svg width="33" height="33" viewBox="0 0 33 33" style="left:-1px;top:-1px"><path d="M14.6 5 L8.6 11.4" stroke="#a0a0a0" stroke-width="4.4" stroke-linecap="round"/><path d="M6.4 10.6 L9.6 13.8 L6.2 14.6Z" fill="#a0a0a0"/><path d="M5 17.4 H25.4" fill="none" stroke="#a0a0a0" stroke-width="1.1"/><path d="M5.6 17.4 L9.8 14.8 V20Z" fill="#a0a0a0"/><path d="M18.6 13.4 V21.6 M15 18 Q17 22.6 21 19" fill="none" stroke="#a0a0a0" stroke-width="1.2"/><path d="M16.6 19 L18.6 16 L20.6 19Z" fill="#a0a0a0"/></svg></div>
<div class="b2" style="left:360px"><svg width="33" height="33" viewBox="0 0 33 33" style="left:-1px;top:-1px"><path d="M15 5 L8.2 11.6" stroke="#1a1a1a" stroke-width="3.8" stroke-linecap="round"/><path d="M14.6 5.4 L8.8 11" stroke="#c7dcf6" stroke-width="1.5"/><path d="M13.8 3.8 L16.2 6.2" stroke="#f0a23a" stroke-width="1.4"/><path d="M6.4 10.6 L9.4 13.4 L6.4 14.2Z" fill="#e8501e" stroke="#1a1a1a" stroke-width=".7"/><path d="M6.6 14.4 L7 18.4 Q11 17 14 14.6 Q19 11.8 22.4 14.6 Q24.6 17.4 20.6 18.6 Q14 21.4 10.4 24 L5 25.6" fill="none" stroke="#2f9ae8" stroke-width="1.2" stroke-dasharray="1.4 .8"/><path d="M10.4 14.799999999999999 L10.9 15.899999999999999 L12.0 16.4 L10.9 16.9 L10.4 18.0 L9.9 16.9 L8.8 16.4 L9.9 15.899999999999999Z" fill="#ff3c14"/><path d="M16.4 12.6 L16.9 13.7 L18.0 14.2 L16.9 14.7 L16.4 15.799999999999999 L15.899999999999999 14.7 L14.799999999999999 14.2 L15.899999999999999 13.7Z" fill="#ff3c14"/><path d="M20.6 16.799999999999997 L21.1 17.9 L22.200000000000003 18.4 L21.1 18.9 L20.6 20.0 L20.1 18.9 L19.0 18.4 L20.1 17.9Z" fill="#ff3c14"/><path d="M14.6 19.0 L15.1 20.1 L16.2 20.6 L15.1 21.1 L14.6 22.200000000000003 L14.1 21.1 L13.0 20.6 L14.1 20.1Z" fill="#ff3c14"/><path d="M10.2 21.2 L10.7 22.3 L11.799999999999999 22.8 L10.7 23.3 L10.2 24.400000000000002 L9.7 23.3 L8.6 22.8 L9.7 22.3Z" fill="#ff3c14"/><path d="M5.2 23.4 L5.7 24.5 L6.800000000000001 25 L5.7 25.5 L5.2 26.6 L4.7 25.5 L3.6 25 L4.7 24.5Z" fill="#ff3c14"/></svg></div>
<div class="b2" style="left:393px"><svg width="33" height="33" viewBox="0 0 33 33" style="left:-1px;top:-1px"><path d="M14.6 5 L8.6 11.4" stroke="#a0a0a0" stroke-width="4.4" stroke-linecap="round"/><path d="M6.4 10.6 L9.6 13.8 L6.2 14.6Z" fill="#a0a0a0"/><path d="M7.6 15.4 L12.6 20.2 M5.6 18.6 L9.6 22.4" fill="none" stroke="#a0a0a0" stroke-width="2"/><path d="M5.6 24 H16 M6.4 27.4 H14 M21 25 H27.6 M20 28 H27.4 M15.4 22.2 H20" fill="none" stroke="#a0a0a0" stroke-width="2.2" stroke-dasharray="4 .9"/><path d="M12 14.6 L22 20 M14 19.6 L20 23.6 M17.6 17 L25 20.6 M13 23 L19 27" fill="none" stroke="#a0a0a0" stroke-width="0.9" stroke-dasharray="2 .8"/><path d="M22.6 14.6 L27.6 19.4 L25.2 20.2 L21 17Z" fill="#a0a0a0"/><path d="M26 19 L28.4 21 V24 L26 23.4Z" fill="#a0a0a0"/></svg></div>
<div class="b2" style="left:426px"><svg width="33" height="33" viewBox="0 0 33 33" style="left:-1px;top:-1px"><path d="M9.6 6.4 Q13 2.6 16.6 4.2 Q18.6 6 17.4 9 L16 12 Q20 12.6 23.4 14.6 Q28 17 28.2 22 L28.4 27.6 L17 28.4 L12 25.6 L5.2 24.4 Q3.6 20.6 4.8 16.6 Q6 10 9.6 6.4Z" fill="#a0a0a0"/><path d="M7.4 18.6 L11 17.6 L12.6 14.6 L13.6 17.4 L17 17 L14 19.6 L15.6 23 L12.4 20.6 L8.4 21.6 L10 19.4Z M21 21 H26 L27 23 L22.6 23.4Z M26.6 25.4 L28.4 27.6 H26.4Z" fill="#f0f0f0"/></svg></div>
<div class="b2" style="left:459px"><svg width="33" height="33" viewBox="0 0 33 33" style="left:-1px;top:-1px"><path d="M14.6 5 L8.6 11.4" stroke="#a0a0a0" stroke-width="4.4" stroke-linecap="round"/><path d="M6.4 10.6 L9.6 13.8 L6.2 14.6Z" fill="#a0a0a0"/><path d="M5.4 14 L14 20.6 L27.6 27.6" fill="none" stroke="#a0a0a0" stroke-width="0.9"/><path d="M23.6 5.2 L27.6 8.6 L25 11.2 L21.4 7.6Z" fill="#a0a0a0"/><path d="M22.2 9.2 L16.4 15.6 M23.4 10.4 L17.6 16.8" fill="none" stroke="#a0a0a0" stroke-width="0.8" stroke-dasharray="1 .8"/><path d="M14.4 14.6 L16.4 17.2 L19 16.6 L17.6 19.2 L19.4 21.2 L16.6 21 L15 23.4 L14.4 20.6 L11.6 19.8 L14 18.2Z" fill="#a0a0a0"/></svg></div>
<div class="b2" style="left:492px"><svg width="33" height="33" viewBox="0 0 33 33" style="left:-1px;top:-1px"><path d="M14.6 5 L8.6 11.4" stroke="#a0a0a0" stroke-width="4.4" stroke-linecap="round"/><path d="M6.4 10.6 L9.6 13.8 L6.2 14.6Z" fill="#a0a0a0"/><path d="M8.6 21.4 L12 17.6 Q17 16 19.6 18.4 Q22 21 25 21.4 Q27 25 28.4 27" fill="none" stroke="#a0a0a0" stroke-width="1.2"/><path d="M16 14.4 L21.6 19.6 L18 21.2Z" fill="#a0a0a0"/><path d="M4.4 22.4 L8.8 20.6 L12 23.4 L9.4 24.6 L9.6 28 L7 25.4Z" fill="#a0a0a0"/></svg></div>
<div class="b2" style="left:525px"><svg width="33" height="33" viewBox="0 0 33 33" style="left:-1px;top:-1px"><path d="M14.6 5 L8.6 11.4" stroke="#a0a0a0" stroke-width="4.4" stroke-linecap="round"/><path d="M6.4 10.6 L9.6 13.8 L6.2 14.6Z" fill="#a0a0a0"/><path d="M5.4 16.4 Q8 14.6 11.4 16.4 L18 23.6 Q19 27.4 16 28 L7.6 28.2 Q3.6 26 4.4 21Z" fill="#a0a0a0"/><path d="M17 9 Q22 8 25.6 11.4 Q28.6 15 27 19.6 Q26 23 24 24.8" fill="none" stroke="#a0a0a0" stroke-width="1.8" stroke-dasharray="1.8 .9"/><path d="M14.4 13.6 Q17 16 16.4 19 Q19 17.6 21.6 19.4 L23 24 L20.6 27" fill="none" stroke="#a0a0a0" stroke-width="1.5" stroke-dasharray="2 .8"/><path d="M27.6 10.4 L28.4 14.4 L25 13Z M16 12.6 L17.6 9.6 L19.4 12.6Z M22 22.4 L26 23.4 L23.4 26.4Z" fill="#a0a0a0"/></svg></div>
<div class="b2" style="left:558px"><svg width="33" height="33" viewBox="0 0 33 33" style="left:-1px;top:-1px"><path d="M14.6 5 L8.6 11.4" stroke="#a0a0a0" stroke-width="4.4" stroke-linecap="round"/><path d="M6.4 10.6 L9.6 13.8 L6.2 14.6Z" fill="#a0a0a0"/><path d="M19 8.75 H23.4 L26.2 11.6 V15.9 L23.4 18.75 H19 L16.2 15.9 V11.6Z" fill="#a0a0a0"/><path d="M10 16.6 Q5.6 17.6 5.8 21.6 Q6.4 25 10.6 25.6 M12.6 16 Q16.6 17 16.8 20.6 Q16.4 24 13 25.4" fill="none" stroke="#a0a0a0" stroke-width="1.5" stroke-dasharray="2.2 .8"/><path d="M21 20.6 V27 H15" fill="none" stroke="#a0a0a0" stroke-width="1.5"/><path d="M18.2 22.4 L21 19 L23.8 22.4Z M10 23.6 L12.6 26.2 L9.6 27.6Z M13.6 23 L16.4 25 L13.4 27.2Z" fill="#a0a0a0"/></svg></div>
<div class="b2" style="left:591px"><svg width="33" height="33" viewBox="0 0 33 33" style="left:-1px;top:-1px"><path d="M14.6 5 L8.6 11.4" stroke="#a0a0a0" stroke-width="4.4" stroke-linecap="round"/><path d="M6.4 10.6 L9.6 13.8 L6.2 14.6Z" fill="#a0a0a0"/><circle cx="18.4" cy="17" r="4.3" fill="none" stroke="#a0a0a0" stroke-width="1.5"/><ellipse cx="18.4" cy="17" rx="1.6" ry="3.2" fill="none" stroke="#a0a0a0" stroke-width="1.3" transform="rotate(-30 18.4 17)"/><path d="M6.4 14.6 Q9.6 18 8.4 22 Q7 25 10 28" fill="none" stroke="#a0a0a0" stroke-width="1.3"/><path d="M27 8.4 Q30 13 28.6 17.6 Q26.6 22 28.4 25 L31 29" fill="none" stroke="#a0a0a0" stroke-width="1.4"/><path d="M23.6 9.6 Q26.6 11.6 27.4 14.6 M12.6 21.6 Q13.4 25 16 27.2" fill="none" stroke="#a0a0a0" stroke-width="1.3" stroke-dasharray="2 .8"/><path d="M26 7 L29.6 9.6 L25.6 10.6Z M7 23.6 L10.6 25.6 L9.4 29 L6.4 27Z" fill="#a0a0a0"/></svg></div>
<div class="b2" style="left:624px"><svg width="33" height="33" viewBox="0 0 33 33" style="left:-1px;top:-1px"><path d="M14.6 5 L8.6 11.4" stroke="#a0a0a0" stroke-width="4.4" stroke-linecap="round"/><path d="M6.4 10.6 L9.6 13.8 L6.2 14.6Z" fill="#a0a0a0"/><path d="M5.2 14.4 L7.2 12.4 M5 14.4 L9 18.4 M23.4 15.8 V20.4 M14.8 22.6 L20.4 26" fill="none" stroke="#a0a0a0" stroke-width="0.9"/><rect x="19.8" y="8.4" width="7.4" height="7.4" fill="#a0a0a0"/><rect x="21.4" y="10.0" width="1.2" height="1.2" fill="#f0f0f0"/><rect x="21.4" y="13.0" width="1.2" height="1.2" fill="#f0f0f0"/><rect x="24.4" y="10.0" width="1.2" height="1.2" fill="#f0f0f0"/><rect x="24.4" y="13.0" width="1.2" height="1.2" fill="#f0f0f0"/><rect x="7.4" y="18.2" width="7.4" height="7.4" fill="#a0a0a0"/><rect x="9.0" y="19.8" width="1.2" height="1.2" fill="#f0f0f0"/><rect x="9.0" y="22.8" width="1.2" height="1.2" fill="#f0f0f0"/><rect x="12.0" y="19.8" width="1.2" height="1.2" fill="#f0f0f0"/><rect x="12.0" y="22.8" width="1.2" height="1.2" fill="#f0f0f0"/><rect x="20.4" y="20.4" width="7.4" height="7.4" fill="#a0a0a0"/><rect x="22.0" y="22.0" width="1.2" height="1.2" fill="#f0f0f0"/><rect x="22.0" y="25.0" width="1.2" height="1.2" fill="#f0f0f0"/><rect x="25.0" y="22.0" width="1.2" height="1.2" fill="#f0f0f0"/><rect x="25.0" y="25.0" width="1.2" height="1.2" fill="#f0f0f0"/></svg></div>
<div class="b2" style="left:657px"><svg width="33" height="33" viewBox="0 0 33 33" style="left:-1px;top:-1px"><path d="M14.6 5 L8.6 11.4" stroke="#a0a0a0" stroke-width="4.4" stroke-linecap="round"/><path d="M6.4 10.6 L9.6 13.8 L6.2 14.6Z" fill="#a0a0a0"/><path d="M3.6 13 L6.4 15.8 M6.4 13 L3.6 15.8" fill="none" stroke="#a0a0a0" stroke-width="0.8"/><path d="M5.4 17.6 L9 16.6 L12 14.6 L14.4 16 L18 14.2" fill="none" stroke="#a0a0a0" stroke-width="1.4"/><path d="M6.4 20.4 H13.4 L15.6 22.4 V28.8 H6.4Z" fill="#a0a0a0"/><path d="M24.8 13.4 Q28.6 12.6 28.8 8.8 Q28 5 24 5.2 Q21.6 5.6 20.6 8" fill="none" stroke="#a0a0a0" stroke-width="1.5"/><path d="M18.4 7.6 L23 7 L21.4 11Z M17.2 25.6 L20.4 23 V28.2Z M18.6 20 L22 17.6 L25.6 18.2 L26 19.4 L22 19.4Z" fill="#a0a0a0"/><path d="M20 25.6 H23" fill="none" stroke="#a0a0a0" stroke-width="1.2"/><path d="M23.2 22.6 H27.6 L28.8 23.8 V28.8 H23.2Z" fill="#a0a0a0"/></svg></div>
<div class="b2" style="left:690px"><svg width="33" height="33" viewBox="0 0 33 33" style="left:-1px;top:-1px"><path d="M10.6 14.6 L17 10 Q20 8.6 23 10.6 L27.6 14.6 V20 L24 22 L23.4 25 L19 28 Q15.6 30.4 11.4 29.6 L7.2 26 Q6.8 21 8 18.6Z" fill="#a0a0a0"/><path d="M15.6 4.6 L8.4 11.6" stroke="#a0a0a0" stroke-width="3.6" stroke-linecap="round"/><path d="M4.4 12.2 L7.2 15 M7.2 12.2 L4.4 15 M26.4 6 L28.6 8.2 M28.6 6 L26.4 8.2 M7.6 28.6 L9.8 30.8 M9.8 28.6 L7.6 30.8" fill="none" stroke="#a0a0a0" stroke-width="0.8"/></svg></div>
<div class="b2" style="left:723px"><svg width="33" height="33" viewBox="0 0 33 33" style="left:-1px;top:-1px"><path d="M15.4 4.6 L9 11" stroke="#a0a0a0" stroke-width="3.6" stroke-linecap="round"/><path d="M5 19.6 Q4.6 17 7.4 16.4 L13 16.2 L17.6 11.8 Q20 10.4 23.6 11 Q28.6 13 28.8 17.4 L27.6 20.6 L19 27 Q13 28.4 8.8 27.4 Q5 25 5 19.6Z" fill="#a0a0a0"/></svg></div>
<!-- MAP -->
<div id="map" class="abs"></div>
<svg class="abs" style="left:0;top:0" width="1920" height="1050" viewBox="0 0 1920 1050">
<defs>
<clipPath id="mc"><path d="M1010 139 L1187 139 L1187 228 L1275 228 L1275 316 L1363 316 L1363 492 L1275 492 L1275 668 L1187 668 L1187 933.5 L1099 933.5 L1099 1021.5 L745 1021.5 L745 933.5 L569 933.5 L569 668 L657 668 L657 492 L745 492 L745 404 L922 404 L922 316 L1010 316Z"/></clipPath>
<filter id="bl" x="-30%" y="-30%" width="160%" height="160%"><feGaussianBlur stdDeviation="12"/></filter>
<filter id="bl2" x="-10%" y="-10%" width="120%" height="120%"><feGaussianBlur stdDeviation="0.9"/></filter>
<filter id="bl3" x="-10%" y="-10%" width="120%" height="120%"><feGaussianBlur stdDeviation="2"/></filter>
<filter id="grain" x="560" y="130" width="812" height="900" filterUnits="userSpaceOnUse" color-interpolation-filters="sRGB"><feTurbulence type="fractalNoise" baseFrequency="0.09 0.1" numOctaves="3" seed="4" result="lf"/><feColorMatrix in="lf" type="matrix" values="1 0 0 0 0  1 0 0 0 0  1 0 0 0 0  0 0 0 0 1" result="lg"/><feComposite in="SourceGraphic" in2="lg" operator="arithmetic" k1="0" k2="1" k3="0.24" k4="-0.12" result="a0"/><feTurbulence type="fractalNoise" baseFrequency="0.21 0.19" numOctaves="2" seed="17" result="mf"/><feColorMatrix in="mf" type="matrix" values="1 0 0 0 0  1 0 0 0 0  1 0 0 0 0  0 0 0 0 1" result="mg"/><feComposite in="a0" in2="mg" operator="arithmetic" k1="0" k2="1" k3="0.32" k4="-0.16" result="a1"/><feTurbulence type="fractalNoise" baseFrequency="0.47 0.43" numOctaves="2" seed="7" result="t"/><feColorMatrix in="t" type="matrix" values="1 0 0 0 0  1 0 0 0 0  1 0 0 0 0  0 0 0 0 1" result="g"/><feComposite in="a1" in2="g" operator="arithmetic" k1="0" k2="1" k3="0.5" k4="-0.20" result="a"/><feTurbulence type="fractalNoise" baseFrequency="0.71 0.67" numOctaves="1" seed="23" result="t2"/><feColorMatrix in="t2" type="matrix" values="0 0 0 0 .82  0 0 0 0 .82  0 0 0 0 .82  0 8 0 0 -5.15" result="sp"/><feComposite in="sp" in2="a" operator="over"/></filter>
<filter id="grain2" x="560" y="130" width="812" height="900" filterUnits="userSpaceOnUse" color-interpolation-filters="sRGB"><feTurbulence type="fractalNoise" baseFrequency="0.06 0.07" numOctaves="3" seed="9" result="d"/><feDisplacementMap in="SourceGraphic" in2="d" scale="16" xChannelSelector="R" yChannelSelector="G" result="ds"/><feGaussianBlur in="ds" stdDeviation="1.2" result="b"/><feTurbulence type="fractalNoise" baseFrequency="0.53 0.49" numOctaves="2" seed="11" result="t"/><feColorMatrix in="t" type="matrix" values="3 0 0 0 -1  3 0 0 0 -1  3 0 0 0 -1  0 0 0 0 .28" result="g"/><feComposite in="g" in2="b" operator="atop"/></filter>
</defs>
<g clip-path="url(#mc)">
<g filter="url(#grain)">
<rect x="560" y="130" width="812" height="900" fill="#5c5c5c"/>
<g filter="url(#bl)">
<ellipse cx="1075" cy="235" rx="70" ry="85" transform="rotate(25 1075 235)" fill="rgb(74,74,74)" opacity="0.8"/>
<ellipse cx="1030" cy="175" rx="25" ry="45" transform="rotate(0 1030 175)" fill="rgb(78,78,78)" opacity="0.6"/>
<ellipse cx="1225" cy="290" rx="45" ry="60" transform="rotate(20 1225 290)" fill="rgb(84,84,84)" opacity="0.55"/>
<ellipse cx="1180" cy="400" rx="70" ry="60" transform="rotate(-30 1180 400)" fill="rgb(84,84,84)" opacity="0.5"/>
<ellipse cx="1300" cy="440" rx="60" ry="40" transform="rotate(0 1300 440)" fill="rgb(86,86,86)" opacity="0.45"/>
<ellipse cx="850" cy="435" rx="100" ry="36" transform="rotate(0 850 435)" fill="rgb(70,70,70)" opacity="0.85"/>
<ellipse cx="960" cy="370" rx="40" ry="40" transform="rotate(0 960 370)" fill="rgb(80,80,80)" opacity="0.5"/>
<ellipse cx="700" cy="530" rx="48" ry="42" transform="rotate(0 700 530)" fill="rgb(72,72,72)" opacity="0.85"/>
<ellipse cx="1000" cy="470" rx="62" ry="62" transform="rotate(0 1000 470)" fill="rgb(128,128,128)" opacity="0.6"/>
<ellipse cx="1010" cy="520" rx="50" ry="28" transform="rotate(0 1010 520)" fill="rgb(140,140,140)" opacity="0.45"/>
<ellipse cx="1060" cy="380" rx="40" ry="50" transform="rotate(0 1060 380)" fill="rgb(118,118,118)" opacity="0.45"/>
<ellipse cx="905" cy="540" rx="50" ry="40" transform="rotate(0 905 540)" fill="rgb(112,112,112)" opacity="0.4"/>
<ellipse cx="1135" cy="830" rx="52" ry="90" transform="rotate(0 1135 830)" fill="rgb(82,82,82)" opacity="0.6"/>
<ellipse cx="1050" cy="990" rx="50" ry="30" transform="rotate(0 1050 990)" fill="rgb(86,86,86)" opacity="0.5"/>
<ellipse cx="960" cy="800" rx="60" ry="50" transform="rotate(0 960 800)" fill="rgb(94,94,94)" opacity="0.35"/>
<ellipse cx="700" cy="760" rx="75" ry="55" transform="rotate(-30 700 760)" fill="rgb(118,118,118)" opacity="0.45"/>
<ellipse cx="640" cy="890" rx="70" ry="40" transform="rotate(0 640 890)" fill="rgb(90,90,90)" opacity="0.45"/>
<ellipse cx="600" cy="700" rx="30" ry="30" transform="rotate(0 600 700)" fill="rgb(120,120,120)" opacity="0.4"/>
<ellipse cx="1230" cy="570" rx="45" ry="90" transform="rotate(0 1230 570)" fill="rgb(100,100,100)" opacity="0.35"/>
<ellipse cx="880" cy="690" rx="90" ry="70" transform="rotate(0 880 690)" fill="rgb(112,112,112)" opacity="0.3"/>
<ellipse cx="830" cy="985" rx="80" ry="36" transform="rotate(0 830 985)" fill="rgb(132,132,132)" opacity="0.55"/>
<ellipse cx="1140" cy="690" rx="36" ry="36" transform="rotate(0 1140 690)" fill="rgb(116,116,116)" opacity="0.4"/>
</g>
<g filter="url(#bl3)">
<path d="M828 462 L863 458 L868 478 L836 488Z" fill="rgb(72,72,72)" opacity="0.8"/>
<path d="M602 884 L630 872 L668 874 L664 890 L625 900 L604 898Z" fill="rgb(62,62,62)" opacity="0.85"/>
<path d="M965 412 L978 410 L980 428 L967 430Z" fill="rgb(66,66,66)" opacity="0.7"/>
<path d="M1064 760 L1090 755 L1096 800 L1075 815 L1060 790Z" fill="rgb(78,78,78)" opacity="0.6"/>
<path d="M1120 720 L1138 718 L1138 745 L1122 748Z" fill="rgb(84,84,84)" opacity="0.6"/>
<path d="M1071 759 L1093 757 L1095 783 L1073 786Z" fill="rgb(70,70,70)" opacity="0.75"/>
<path d="M1066 858 L1082 852 L1096 880 L1110 920 L1092 930 L1076 900Z" fill="rgb(76,76,76)" opacity="0.7"/>
<path d="M860 990 L1099 985 L1099 1022 L860 1022Z" fill="rgb(86,86,86)" opacity="0.5"/>
<path d="M1100 770 L1150 750 L1180 790 L1170 840 L1120 850Z" fill="rgb(84,84,84)" opacity="0.45"/>
<path d="M640 520 L700 500 L740 540 L700 570 L660 565Z" fill="rgb(70,70,70)" opacity="0.5"/>
<path d="M1015 150 L1060 150 L1120 260 L1080 310 L1015 300Z" fill="rgb(78,78,78)" opacity="0.45"/>
</g>
<g filter="url(#bl2)"><path d="M971 455L1057 443" stroke="rgb(160,160,160)" stroke-width="1.4" opacity="0.38"/><path d="M911 475L1013 461" stroke="rgb(160,160,160)" stroke-width="1.8" opacity="0.41"/><path d="M913 492L957 486" stroke="rgb(58,58,58)" stroke-width="1.4" opacity="0.29"/><path d="M959 486L1006 479" stroke="rgb(160,160,160)" stroke-width="1.8" opacity="0.45"/><path d="M1015 478L1084 468" stroke="rgb(58,58,58)" stroke-width="1.8" opacity="0.33"/><path d="M915 508L1004 495" stroke="rgb(184,184,184)" stroke-width="2.4" opacity="0.37"/><path d="M918 525L976 517" stroke="rgb(184,184,184)" stroke-width="2.4" opacity="0.29"/><path d="M984 516L1082 502" stroke="rgb(184,184,184)" stroke-width="1.4" opacity="0.37"/><path d="M958 538L1069 523" stroke="rgb(196,196,196)" stroke-width="2.4" opacity="0.37"/><path d="M923 561L1022 547" stroke="rgb(160,160,160)" stroke-width="1.4" opacity="0.35"/><path d="M1053 474L1068 580" stroke="rgb(160,160,160)" stroke-width="1.4" opacity="0.29"/><path d="M1042 490L1050 549" stroke="rgb(160,160,160)" stroke-width="1.4" opacity="0.30"/><path d="M1015 416L1023 479" stroke="rgb(58,58,58)" stroke-width="2.4" opacity="0.39"/><path d="M1025 494L1031 536" stroke="rgb(172,172,172)" stroke-width="1.4" opacity="0.35"/><path d="M1002 418L1015 514" stroke="rgb(172,172,172)" stroke-width="1.8" opacity="0.43"/><path d="M987 420L992 459" stroke="rgb(184,184,184)" stroke-width="2.4" opacity="0.33"/><path d="M993 462L1002 527" stroke="rgb(58,58,58)" stroke-width="2.4" opacity="0.39"/><path d="M975 422L982 472" stroke="rgb(58,58,58)" stroke-width="1.8" opacity="0.42"/><path d="M985 490L991 538" stroke="rgb(160,160,160)" stroke-width="1.8" opacity="0.30"/><path d="M962 424L971 486" stroke="rgb(172,172,172)" stroke-width="1.4" opacity="0.30"/><path d="M974 504L989 613" stroke="rgb(58,58,58)" stroke-width="1.4" opacity="0.41"/><path d="M946 426L962 538" stroke="rgb(184,184,184)" stroke-width="1.4" opacity="0.43"/><path d="M930 428L944 523" stroke="rgb(160,160,160)" stroke-width="2.4" opacity="0.30"/><path d="M614 767L672 713" stroke="rgb(58,58,58)" stroke-width="2.4" opacity="0.29"/><path d="M684 702L712 676" stroke="rgb(160,160,160)" stroke-width="2.4" opacity="0.39"/><path d="M565 840L627 782" stroke="rgb(184,184,184)" stroke-width="1.8" opacity="0.43"/><path d="M639 771L694 720" stroke="rgb(196,196,196)" stroke-width="1.4" opacity="0.43"/><path d="M701 714L764 655" stroke="rgb(172,172,172)" stroke-width="1.8" opacity="0.47"/><path d="M619 819L700 743" stroke="rgb(160,160,160)" stroke-width="1.8" opacity="0.49"/><path d="M702 741L778 670" stroke="rgb(196,196,196)" stroke-width="1.4" opacity="0.34"/><path d="M597 874L663 813" stroke="rgb(58,58,58)" stroke-width="1.4" opacity="0.38"/><path d="M679 797L756 726" stroke="rgb(58,58,58)" stroke-width="2.4" opacity="0.29"/><path d="M763 719L803 682" stroke="rgb(58,58,58)" stroke-width="1.4" opacity="0.28"/><path d="M617 896L656 859" stroke="rgb(160,160,160)" stroke-width="1.4" opacity="0.50"/><path d="M674 842L725 795" stroke="rgb(184,184,184)" stroke-width="2.4" opacity="0.49"/><path d="M739 781L774 749" stroke="rgb(184,184,184)" stroke-width="1.4" opacity="0.32"/><path d="M793 731L864 665" stroke="rgb(160,160,160)" stroke-width="1.8" opacity="0.32"/><path d="M637 917L694 863" stroke="rgb(58,58,58)" stroke-width="1.4" opacity="0.42"/><path d="M715 844L763 799" stroke="rgb(172,172,172)" stroke-width="2.4" opacity="0.30"/><path d="M780 783L828 738" stroke="rgb(172,172,172)" stroke-width="1.4" opacity="0.42"/><path d="M839 729L885 685" stroke="rgb(58,58,58)" stroke-width="1.8" opacity="0.46"/><path d="M653 935L718 874" stroke="rgb(160,160,160)" stroke-width="1.8" opacity="0.33"/><path d="M724 869L810 789" stroke="rgb(58,58,58)" stroke-width="1.8" opacity="0.49"/><path d="M832 769L871 732" stroke="rgb(160,160,160)" stroke-width="1.4" opacity="0.36"/><path d="M730 896L766 862" stroke="rgb(196,196,196)" stroke-width="1.4" opacity="0.46"/><path d="M786 844L843 791" stroke="rgb(172,172,172)" stroke-width="2.4" opacity="0.38"/><path d="M858 777L939 701" stroke="rgb(196,196,196)" stroke-width="1.8" opacity="0.49"/><path d="M772 893L823 846" stroke="rgb(58,58,58)" stroke-width="2.4" opacity="0.42"/><path d="M836 834L892 782" stroke="rgb(184,184,184)" stroke-width="1.8" opacity="0.35"/><path d="M817 888L872 837" stroke="rgb(160,160,160)" stroke-width="2.4" opacity="0.39"/><path d="M882 827L929 784" stroke="rgb(160,160,160)" stroke-width="1.8" opacity="0.39"/><path d="M847 887L929 810" stroke="rgb(196,196,196)" stroke-width="1.8" opacity="0.34"/><path d="M800 673L854 730" stroke="rgb(172,172,172)" stroke-width="2.4" opacity="0.47"/><path d="M859 736L916 797" stroke="rgb(184,184,184)" stroke-width="1.8" opacity="0.48"/><path d="M787 689L814 718" stroke="rgb(172,172,172)" stroke-width="1.8" opacity="0.44"/><path d="M832 737L876 785" stroke="rgb(196,196,196)" stroke-width="2.4" opacity="0.40"/><path d="M886 795L914 825" stroke="rgb(160,160,160)" stroke-width="2.4" opacity="0.30"/><path d="M729 674L796 746" stroke="rgb(172,172,172)" stroke-width="1.8" opacity="0.46"/><path d="M807 757L834 786" stroke="rgb(58,58,58)" stroke-width="2.4" opacity="0.41"/><path d="M836 789L886 842" stroke="rgb(160,160,160)" stroke-width="1.4" opacity="0.32"/><path d="M720 693L769 745" stroke="rgb(184,184,184)" stroke-width="1.8" opacity="0.37"/><path d="M785 762L837 818" stroke="rgb(58,58,58)" stroke-width="2.4" opacity="0.36"/><path d="M847 828L910 896" stroke="rgb(172,172,172)" stroke-width="1.8" opacity="0.37"/><path d="M706 719L736 752" stroke="rgb(160,160,160)" stroke-width="1.4" opacity="0.35"/><path d="M747 764L817 839" stroke="rgb(196,196,196)" stroke-width="1.4" opacity="0.41"/><path d="M832 855L883 910" stroke="rgb(184,184,184)" stroke-width="1.4" opacity="0.34"/><path d="M634 685L703 758" stroke="rgb(196,196,196)" stroke-width="1.8" opacity="0.31"/><path d="M719 776L794 856" stroke="rgb(196,196,196)" stroke-width="1.8" opacity="0.45"/><path d="M809 872L842 907" stroke="rgb(184,184,184)" stroke-width="1.4" opacity="0.35"/><path d="M614 703L673 766" stroke="rgb(184,184,184)" stroke-width="2.4" opacity="0.35"/><path d="M679 773L724 821" stroke="rgb(160,160,160)" stroke-width="1.8" opacity="0.37"/><path d="M729 826L789 891" stroke="rgb(196,196,196)" stroke-width="1.4" opacity="0.50"/><path d="M596 721L663 793" stroke="rgb(160,160,160)" stroke-width="1.8" opacity="0.30"/><path d="M677 807L714 847" stroke="rgb(58,58,58)" stroke-width="2.4" opacity="0.39"/><path d="M722 856L777 915" stroke="rgb(196,196,196)" stroke-width="1.4" opacity="0.46"/><path d="M636 810L680 858" stroke="rgb(196,196,196)" stroke-width="2.4" opacity="0.40"/><path d="M700 879L724 905" stroke="rgb(196,196,196)" stroke-width="1.8" opacity="0.34"/><path d="M629 835L667 876" stroke="rgb(184,184,184)" stroke-width="1.4" opacity="0.29"/><path d="M592 822L648 883" stroke="rgb(184,184,184)" stroke-width="1.4" opacity="0.30"/><path d="M804 601L861 548" stroke="rgb(184,184,184)" stroke-width="1.4" opacity="0.44"/><path d="M814 637L883 572" stroke="rgb(172,172,172)" stroke-width="1.4" opacity="0.42"/><path d="M899 557L934 525" stroke="rgb(172,172,172)" stroke-width="1.4" opacity="0.47"/><path d="M802 680L838 646" stroke="rgb(160,160,160)" stroke-width="1.4" opacity="0.48"/><path d="M846 640L904 585" stroke="rgb(184,184,184)" stroke-width="1.8" opacity="0.39"/><path d="M918 572L954 539" stroke="rgb(172,172,172)" stroke-width="1.4" opacity="0.46"/><path d="M798 728L875 656" stroke="rgb(196,196,196)" stroke-width="1.8" opacity="0.37"/><path d="M892 640L940 596" stroke="rgb(172,172,172)" stroke-width="2.4" opacity="0.42"/><path d="M944 592L988 551" stroke="rgb(172,172,172)" stroke-width="1.8" opacity="0.37"/><path d="M815 746L872 692" stroke="rgb(58,58,58)" stroke-width="2.4" opacity="0.39"/><path d="M883 683L935 634" stroke="rgb(160,160,160)" stroke-width="1.4" opacity="0.30"/><path d="M953 617L1035 540" stroke="rgb(184,184,184)" stroke-width="2.4" opacity="0.39"/><path d="M831 764L911 690" stroke="rgb(184,184,184)" stroke-width="1.4" opacity="0.36"/><path d="M917 684L961 644" stroke="rgb(58,58,58)" stroke-width="2.4" opacity="0.48"/><path d="M971 634L1053 558" stroke="rgb(184,184,184)" stroke-width="1.4" opacity="0.38"/><path d="M849 783L932 705" stroke="rgb(172,172,172)" stroke-width="1.8" opacity="0.30"/><path d="M952 687L976 665" stroke="rgb(58,58,58)" stroke-width="1.4" opacity="0.37"/><path d="M991 651L1062 585" stroke="rgb(196,196,196)" stroke-width="2.4" opacity="0.40"/><path d="M919 757L999 682" stroke="rgb(160,160,160)" stroke-width="1.4" opacity="0.33"/><path d="M1006 675L1064 621" stroke="rgb(160,160,160)" stroke-width="1.8" opacity="0.42"/><path d="M1011 714L1038 689" stroke="rgb(172,172,172)" stroke-width="2.4" opacity="0.30"/><path d="M1053 675L1103 629" stroke="rgb(196,196,196)" stroke-width="2.4" opacity="0.45"/><path d="M1040 584L1075 623" stroke="rgb(196,196,196)" stroke-width="1.8" opacity="0.43"/><path d="M947 515L1007 580" stroke="rgb(172,172,172)" stroke-width="1.8" opacity="0.48"/><path d="M1023 597L1045 620" stroke="rgb(160,160,160)" stroke-width="1.4" opacity="0.35"/><path d="M1056 631L1087 666" stroke="rgb(172,172,172)" stroke-width="1.8" opacity="0.41"/><path d="M930 530L997 602" stroke="rgb(58,58,58)" stroke-width="2.4" opacity="0.49"/><path d="M1004 609L1054 663" stroke="rgb(196,196,196)" stroke-width="1.8" opacity="0.48"/><path d="M955 587L989 623" stroke="rgb(196,196,196)" stroke-width="2.4" opacity="0.49"/><path d="M993 627L1060 700" stroke="rgb(160,160,160)" stroke-width="1.4" opacity="0.42"/><path d="M902 580L948 629" stroke="rgb(196,196,196)" stroke-width="1.8" opacity="0.31"/><path d="M966 649L996 680" stroke="rgb(58,58,58)" stroke-width="2.4" opacity="0.31"/><path d="M873 590L894 612" stroke="rgb(172,172,172)" stroke-width="1.4" opacity="0.46"/><path d="M911 630L953 675" stroke="rgb(58,58,58)" stroke-width="1.8" opacity="0.30"/><path d="M966 689L1029 757" stroke="rgb(58,58,58)" stroke-width="2.4" opacity="0.40"/><path d="M808 558L885 641" stroke="rgb(196,196,196)" stroke-width="2.4" opacity="0.33"/><path d="M888 644L934 693" stroke="rgb(184,184,184)" stroke-width="1.8" opacity="0.35"/><path d="M945 705L970 732" stroke="rgb(196,196,196)" stroke-width="1.4" opacity="0.43"/><path d="M793 573L838 621" stroke="rgb(160,160,160)" stroke-width="1.4" opacity="0.42"/><path d="M848 632L921 710" stroke="rgb(196,196,196)" stroke-width="2.4" opacity="0.33"/><path d="M936 726L964 756" stroke="rgb(172,172,172)" stroke-width="1.4" opacity="0.48"/><path d="M773 592L811 633" stroke="rgb(196,196,196)" stroke-width="1.4" opacity="0.40"/><path d="M819 642L855 681" stroke="rgb(160,160,160)" stroke-width="1.8" opacity="0.35"/><path d="M860 686L915 745" stroke="rgb(184,184,184)" stroke-width="1.8" opacity="0.38"/><path d="M791 656L863 733" stroke="rgb(160,160,160)" stroke-width="1.4" opacity="0.30"/><path d="M1142 529L1217 482" stroke="rgb(196,196,196)" stroke-width="1.8" opacity="0.33"/><path d="M1095 588L1132 565" stroke="rgb(184,184,184)" stroke-width="1.8" opacity="0.40"/><path d="M1152 552L1224 507" stroke="rgb(58,58,58)" stroke-width="2.4" opacity="0.44"/><path d="M1110 612L1179 570" stroke="rgb(172,172,172)" stroke-width="1.4" opacity="0.45"/><path d="M1181 568L1225 540" stroke="rgb(184,184,184)" stroke-width="1.8" opacity="0.35"/><path d="M1122 632L1203 581" stroke="rgb(58,58,58)" stroke-width="2.4" opacity="0.40"/><path d="M1210 576L1241 557" stroke="rgb(172,172,172)" stroke-width="1.8" opacity="0.48"/><path d="M1136 655L1184 625" stroke="rgb(172,172,172)" stroke-width="1.8" opacity="0.45"/><path d="M1207 611L1296 555" stroke="rgb(58,58,58)" stroke-width="1.8" opacity="0.46"/><path d="M1145 669L1185 645" stroke="rgb(172,172,172)" stroke-width="2.4" opacity="0.35"/><path d="M1210 629L1300 573" stroke="rgb(58,58,58)" stroke-width="1.4" opacity="0.41"/><path d="M1215 648L1280 607" stroke="rgb(196,196,196)" stroke-width="2.4" opacity="0.32"/><path d="M1199 474L1238 538" stroke="rgb(184,184,184)" stroke-width="2.4" opacity="0.37"/><path d="M1241 542L1300 637" stroke="rgb(196,196,196)" stroke-width="1.8" opacity="0.45"/><path d="M1175 489L1213 550" stroke="rgb(196,196,196)" stroke-width="1.4" opacity="0.46"/><path d="M1227 573L1270 642" stroke="rgb(58,58,58)" stroke-width="2.4" opacity="0.35"/><path d="M1156 501L1215 596" stroke="rgb(160,160,160)" stroke-width="2.4" opacity="0.35"/><path d="M1135 514L1187 597" stroke="rgb(58,58,58)" stroke-width="1.4" opacity="0.47"/><path d="M1192 606L1214 641" stroke="rgb(58,58,58)" stroke-width="1.4" opacity="0.47"/><path d="M1111 529L1153 596" stroke="rgb(172,172,172)" stroke-width="2.4" opacity="0.47"/><path d="M1164 614L1226 713" stroke="rgb(58,58,58)" stroke-width="1.4" opacity="0.37"/><path d="M1094 539L1146 622" stroke="rgb(160,160,160)" stroke-width="1.4" opacity="0.30"/><path d="M1155 637L1177 672" stroke="rgb(196,196,196)" stroke-width="1.4" opacity="0.28"/><path d="M1000 362L1042 358" stroke="rgb(196,196,196)" stroke-width="1.4" opacity="0.47"/><path d="M1066 356L1122 351" stroke="rgb(160,160,160)" stroke-width="1.8" opacity="0.32"/><path d="M1001 380L1033 377" stroke="rgb(58,58,58)" stroke-width="2.4" opacity="0.32"/><path d="M1052 375L1103 371" stroke="rgb(160,160,160)" stroke-width="1.8" opacity="0.42"/><path d="M1003 396L1061 391" stroke="rgb(196,196,196)" stroke-width="1.4" opacity="0.44"/><path d="M1004 413L1071 407" stroke="rgb(184,184,184)" stroke-width="2.4" opacity="0.31"/><path d="M1078 407L1126 403" stroke="rgb(172,172,172)" stroke-width="1.8" opacity="0.39"/><path d="M1006 430L1069 425" stroke="rgb(160,160,160)" stroke-width="1.4" opacity="0.41"/><path d="M1099 373L1106 451" stroke="rgb(58,58,58)" stroke-width="1.8" opacity="0.30"/><path d="M1076 325L1080 372" stroke="rgb(58,58,58)" stroke-width="1.4" opacity="0.29"/><path d="M1062 327L1070 424" stroke="rgb(196,196,196)" stroke-width="1.4" opacity="0.29"/><path d="M1048 328L1056 417" stroke="rgb(58,58,58)" stroke-width="2.4" opacity="0.34"/><path d="M1030 329L1034 375" stroke="rgb(172,172,172)" stroke-width="1.8" opacity="0.30"/><path d="M1036 399L1040 450" stroke="rgb(184,184,184)" stroke-width="2.4" opacity="0.45"/><path d="M1017 331L1024 404" stroke="rgb(58,58,58)" stroke-width="1.8" opacity="0.41"/><path d="M893 844L952 789" stroke="rgb(172,172,172)" stroke-width="1.4" opacity="0.42"/><path d="M863 906L926 847" stroke="rgb(184,184,184)" stroke-width="1.8" opacity="0.45"/><path d="M938 836L966 810" stroke="rgb(172,172,172)" stroke-width="1.4" opacity="0.36"/><path d="M885 930L959 861" stroke="rgb(196,196,196)" stroke-width="2.4" opacity="0.38"/><path d="M962 858L998 825" stroke="rgb(160,160,160)" stroke-width="2.4" opacity="0.31"/><path d="M903 949L974 883" stroke="rgb(172,172,172)" stroke-width="2.4" opacity="0.37"/><path d="M976 881L1008 852" stroke="rgb(184,184,184)" stroke-width="1.4" opacity="0.38"/><path d="M924 971L1010 891" stroke="rgb(184,184,184)" stroke-width="2.4" opacity="0.34"/><path d="M1024 878L1103 805" stroke="rgb(160,160,160)" stroke-width="1.8" opacity="0.49"/><path d="M941 989L1025 911" stroke="rgb(172,172,172)" stroke-width="1.8" opacity="0.29"/><path d="M1045 892L1106 835" stroke="rgb(184,184,184)" stroke-width="2.4" opacity="0.40"/><path d="M1017 965L1100 887" stroke="rgb(196,196,196)" stroke-width="1.4" opacity="0.45"/><path d="M1029 801L1080 855" stroke="rgb(196,196,196)" stroke-width="2.4" opacity="0.30"/><path d="M1012 826L1064 881" stroke="rgb(172,172,172)" stroke-width="1.8" opacity="0.34"/><path d="M956 812L1028 889" stroke="rgb(184,184,184)" stroke-width="1.8" opacity="0.46"/><path d="M1032 893L1057 920" stroke="rgb(184,184,184)" stroke-width="2.4" opacity="0.34"/><path d="M899 795L938 837" stroke="rgb(196,196,196)" stroke-width="1.4" opacity="0.29"/><path d="M951 851L1003 906" stroke="rgb(172,172,172)" stroke-width="1.8" opacity="0.35"/><path d="M1007 911L1057 964" stroke="rgb(58,58,58)" stroke-width="1.8" opacity="0.44"/><path d="M881 812L930 863" stroke="rgb(172,172,172)" stroke-width="2.4" opacity="0.46"/><path d="M938 872L1002 941" stroke="rgb(196,196,196)" stroke-width="1.8" opacity="0.39"/><path d="M863 829L897 865" stroke="rgb(160,160,160)" stroke-width="1.8" opacity="0.44"/><path d="M899 867L954 926" stroke="rgb(184,184,184)" stroke-width="1.4" opacity="0.43"/><path d="M841 849L902 915" stroke="rgb(184,184,184)" stroke-width="2.4" opacity="0.33"/><path d="M1062 445L1101 417" stroke="rgb(184,184,184)" stroke-width="1.4" opacity="0.43"/><path d="M1078 468L1162 410" stroke="rgb(184,184,184)" stroke-width="2.4" opacity="0.43"/><path d="M1095 492L1128 468" stroke="rgb(196,196,196)" stroke-width="1.8" opacity="0.34"/><path d="M1151 453L1212 410" stroke="rgb(196,196,196)" stroke-width="1.8" opacity="0.44"/><path d="M1141 481L1193 444" stroke="rgb(172,172,172)" stroke-width="1.8" opacity="0.42"/><path d="M1151 348L1219 444" stroke="rgb(172,172,172)" stroke-width="1.8" opacity="0.34"/><path d="M1137 357L1183 422" stroke="rgb(172,172,172)" stroke-width="2.4" opacity="0.40"/><path d="M1115 373L1178 463" stroke="rgb(184,184,184)" stroke-width="1.4" opacity="0.34"/><path d="M1094 388L1147 464" stroke="rgb(172,172,172)" stroke-width="1.4" opacity="0.46"/><path d="M1072 403L1104 450" stroke="rgb(184,184,184)" stroke-width="2.4" opacity="0.44"/><path d="M1112 461L1155 522" stroke="rgb(184,184,184)" stroke-width="1.4" opacity="0.35"/><path d="M768 563L834 508" stroke="rgb(196,196,196)" stroke-width="1.8" opacity="0.29"/><path d="M785 583L825 549" stroke="rgb(184,184,184)" stroke-width="1.8" opacity="0.44"/><path d="M840 536L876 506" stroke="rgb(172,172,172)" stroke-width="1.4" opacity="0.47"/><path d="M801 603L867 547" stroke="rgb(172,172,172)" stroke-width="1.8" opacity="0.31"/><path d="M817 622L908 546" stroke="rgb(172,172,172)" stroke-width="1.8" opacity="0.34"/><path d="M831 639L919 565" stroke="rgb(160,160,160)" stroke-width="1.4" opacity="0.31"/><path d="M924 589L975 546" stroke="rgb(58,58,58)" stroke-width="1.4" opacity="0.47"/><path d="M927 543L955 576" stroke="rgb(160,160,160)" stroke-width="1.8" opacity="0.40"/><path d="M846 476L916 560" stroke="rgb(58,58,58)" stroke-width="2.4" opacity="0.31"/><path d="M833 487L863 524" stroke="rgb(58,58,58)" stroke-width="1.4" opacity="0.29"/><path d="M875 537L894 561" stroke="rgb(160,160,160)" stroke-width="1.8" opacity="0.28"/><path d="M818 499L887 582" stroke="rgb(196,196,196)" stroke-width="2.4" opacity="0.36"/><path d="M800 515L857 583" stroke="rgb(184,184,184)" stroke-width="1.8" opacity="0.32"/><path d="M783 529L850 609" stroke="rgb(172,172,172)" stroke-width="1.4" opacity="0.47"/><path d="M799 580L822 607" stroke="rgb(172,172,172)" stroke-width="1.8" opacity="0.29"/></g>
</g>
<g filter="url(#grain2)">
<path d="M1080 139 L1187 139 L1187 214 L1150 206 L1143 199 L1096 172 L1086 151Z" fill="rgb(150,150,150)" opacity="0.9"/>
<path d="M1300 316 L1363 316 L1363 374 L1296 360Z" fill="rgb(152,152,152)" opacity="0.9"/>
<path d="M793 490 L830 488 L867 474 L881 518 L846 554 L810 547 L782 511Z" fill="rgb(116,116,116)" opacity="0.75"/>
<path d="M701 578 L773 593 L789 624 L728 692 L674 704 L659 666 L690 593Z" fill="rgb(114,114,114)" opacity="0.75"/>
<path d="M765 470 L778 464 L789 478 L786 498 L772 502 L764 488Z" fill="rgb(168,168,168)" opacity="0.8"/>
<path d="M1116 690 L1134 684 L1140 712 L1122 718Z" fill="rgb(142,142,142)" opacity="0.7"/>
<path d="M968 860 L1000 858 L1002 900 L970 902Z" fill="rgb(138,138,138)" opacity="0.8"/>
<path d="M975 930 L1058 926 L1060 975 L978 980Z" fill="rgb(134,134,134)" opacity="0.6"/>
<path d="M1070 395 L1090 392 L1094 412 L1074 416Z" fill="rgb(146,146,146)" opacity="0.6"/>
<path d="M1046 300 L1075 296 L1078 318 L1050 322Z" fill="rgb(150,150,150)" opacity="0.55"/>
<path d="M676 700 L700 672 L716 686 L692 714Z" fill="rgb(122,122,122)" opacity="0.5"/>
<path d="M800 672 L812 664 L822 676 L810 686Z" fill="rgb(150,150,150)" opacity="0.6"/>
<path d="M941 850 L985 816 L993 824 L950 860Z" fill="rgb(138,138,138)" opacity="0.6"/>
<path d="M1135 836 L1177 832 L1178 858 L1138 860Z" fill="rgb(136,136,136)" opacity="0.5"/>
<path d="M748 940 L800 936 L840 1000 L760 1018Z" fill="rgb(130,130,130)" opacity="0.5"/>
</g>
<g filter="url(#bl2)" fill="none" stroke-linejoin="round">
<path d="M1051 139 L1062 160 L1080 184 L1131 217 L1215 308 L1281 378 L1300 420" stroke="rgb(168,168,168)" stroke-width="1.6" opacity="0.75"/>
<path d="M1131 217 L1215 308 L1281 378" stroke="rgb(120,120,120)" stroke-width="5" opacity="0.5"/>
<path d="M1281 378 L1264 470 L1228 560 L1180 636 L1112 690 L1010 742" stroke="rgb(140,140,140)" stroke-width="2.4" opacity="0.5"/>
<path d="M1245 230 L1205 330 L1120 470 L1030 600 L900 745 L772 900 L748 1000" stroke="rgb(78,78,78)" stroke-width="2.6" opacity="0.4"/>
<path d="M1281 378 L1332 480" stroke="rgb(128,128,128)" stroke-width="1.6" opacity="0.5"/>
<path d="M657 625 L700 588 L760 520 L800 470 L840 445 L921 425" stroke="rgb(140,140,140)" stroke-width="2" opacity="0.55"/>
<path d="M905 470 L960 560 L1040 660 L1100 700" stroke="rgb(128,128,128)" stroke-width="2" opacity="0.4"/>
<path d="M760 520 L830 600 L960 700 L1060 800" stroke="rgb(132,132,132)" stroke-width="1.6" opacity="0.35"/>
<path d="M1060 740 L1072 880 L1088 1020" stroke="rgb(140,140,140)" stroke-width="2.4" opacity="0.5"/>
<path d="M590 690 L690 790 L800 880 L850 940 L870 1020" stroke="rgb(136,136,136)" stroke-width="2" opacity="0.45"/>
<path d="M850 940 L900 985 L960 1020" stroke="rgb(140,140,140)" stroke-width="2" opacity="0.4"/>
<path d="M1063 552 L1275 552" stroke="rgb(136,136,136)" stroke-width="1.4" opacity="0.35"/>
<path d="M860 748 L960 720 L1040 712 L1107 695" stroke="rgb(146,146,146)" stroke-width="2" opacity="0.45"/>
<path d="M1052 741 L1054 843" stroke="rgb(70,70,70)" stroke-width="1.2" opacity="0.5"/>
<path d="M1054 843 L1061 1020" stroke="rgb(146,146,146)" stroke-width="1.8" opacity="0.4"/>
<path d="M676 700 L700 672 L716 686 L692 714 L676 700" stroke="rgb(200,200,200)" stroke-width="1" opacity="0.8"/>
</g>
<g><rect x="955" y="445" width="6" height="1" transform="rotate(-34 955 445)" fill="rgb(170,170,170)" opacity="0.74"/><rect x="1033" y="502" width="3" height="2" transform="rotate(53 1033 502)" fill="rgb(235,235,235)" opacity="0.56"/><rect x="1006" y="504" width="4" height="2" transform="rotate(-35 1006 504)" fill="rgb(150,150,150)" opacity="0.51"/><rect x="981" y="485" width="2" height="1.4" transform="rotate(-35 981 485)" fill="rgb(170,170,170)" opacity="0.84"/><rect x="990" y="499" width="6" height="1.4" transform="rotate(-42 990 499)" fill="rgb(170,170,170)" opacity="0.88"/><rect x="989" y="507" width="3" height="2" transform="rotate(-41 989 507)" fill="rgb(190,190,190)" opacity="0.59"/><rect x="956" y="459" width="6" height="1.4" transform="rotate(47 956 459)" fill="rgb(190,190,190)" opacity="0.82"/><rect x="992" y="462" width="4" height="1.4" transform="rotate(-43 992 462)" fill="rgb(150,150,150)" opacity="0.88"/><rect x="1004" y="475" width="4" height="2" transform="rotate(51 1004 475)" fill="rgb(150,150,150)" opacity="0.65"/><rect x="1040" y="548" width="3" height="1.4" transform="rotate(-35 1040 548)" fill="rgb(215,215,215)" opacity="0.60"/><rect x="1023" y="466" width="4" height="1" transform="rotate(-37 1023 466)" fill="rgb(190,190,190)" opacity="0.84"/><rect x="903" y="514" width="3" height="1.4" transform="rotate(52 903 514)" fill="rgb(190,190,190)" opacity="0.86"/><rect x="990" y="526" width="2" height="1" transform="rotate(54 990 526)" fill="rgb(190,190,190)" opacity="0.53"/><rect x="957" y="445" width="3" height="2" transform="rotate(48 957 445)" fill="rgb(150,150,150)" opacity="0.49"/><rect x="962" y="474" width="3" height="1" transform="rotate(56 962 474)" fill="rgb(215,215,215)" opacity="0.74"/><rect x="1081" y="503" width="2" height="2" transform="rotate(50 1081 503)" fill="rgb(170,170,170)" opacity="0.51"/><rect x="981" y="474" width="4" height="1.4" transform="rotate(-42 981 474)" fill="rgb(190,190,190)" opacity="0.52"/><rect x="988" y="512" width="5" height="2" transform="rotate(-32 988 512)" fill="rgb(215,215,215)" opacity="0.88"/><rect x="994" y="446" width="3" height="2" transform="rotate(51 994 446)" fill="rgb(170,170,170)" opacity="0.50"/><rect x="1052" y="469" width="4" height="2" transform="rotate(48 1052 469)" fill="rgb(215,215,215)" opacity="0.57"/><rect x="1025" y="459" width="3" height="2" transform="rotate(-35 1025 459)" fill="rgb(190,190,190)" opacity="0.70"/><rect x="991" y="514" width="6" height="2" transform="rotate(57 991 514)" fill="rgb(190,190,190)" opacity="0.74"/><rect x="1026" y="452" width="3" height="2" transform="rotate(54 1026 452)" fill="rgb(215,215,215)" opacity="0.58"/><rect x="959" y="437" width="3" height="1" transform="rotate(54 959 437)" fill="rgb(215,215,215)" opacity="0.61"/><rect x="1040" y="446" width="3" height="1" transform="rotate(52 1040 446)" fill="rgb(235,235,235)" opacity="0.89"/><rect x="1047" y="419" width="4" height="2" transform="rotate(54 1047 419)" fill="rgb(215,215,215)" opacity="0.53"/><rect x="910" y="473" width="3" height="2" transform="rotate(55 910 473)" fill="rgb(150,150,150)" opacity="0.54"/><rect x="948" y="496" width="3" height="1" transform="rotate(-36 948 496)" fill="rgb(150,150,150)" opacity="0.89"/><rect x="1041" y="535" width="2" height="1" transform="rotate(58 1041 535)" fill="rgb(215,215,215)" opacity="0.54"/><rect x="969" y="494" width="6" height="1.4" transform="rotate(-37 969 494)" fill="rgb(170,170,170)" opacity="0.77"/><rect x="1039" y="480" width="3" height="1" transform="rotate(56 1039 480)" fill="rgb(235,235,235)" opacity="0.62"/><rect x="969" y="472" width="3" height="1" transform="rotate(57 969 472)" fill="rgb(190,190,190)" opacity="0.88"/><rect x="938" y="507" width="6" height="2" transform="rotate(52 938 507)" fill="rgb(170,170,170)" opacity="0.72"/><rect x="975" y="483" width="3" height="1.4" transform="rotate(-40 975 483)" fill="rgb(150,150,150)" opacity="0.62"/><rect x="951" y="463" width="3" height="1.4" transform="rotate(54 951 463)" fill="rgb(235,235,235)" opacity="0.62"/><rect x="1044" y="475" width="4" height="1.4" transform="rotate(51 1044 475)" fill="rgb(170,170,170)" opacity="0.72"/><rect x="998" y="454" width="3" height="1.4" transform="rotate(46 998 454)" fill="rgb(190,190,190)" opacity="0.67"/><rect x="1005" y="485" width="6" height="1.4" transform="rotate(49 1005 485)" fill="rgb(150,150,150)" opacity="0.80"/><rect x="1047" y="483" width="3" height="1.4" transform="rotate(-33 1047 483)" fill="rgb(150,150,150)" opacity="0.56"/><rect x="1034" y="440" width="3" height="2" transform="rotate(52 1034 440)" fill="rgb(215,215,215)" opacity="0.68"/><rect x="1060" y="436" width="2" height="2" transform="rotate(-40 1060 436)" fill="rgb(235,235,235)" opacity="0.77"/><rect x="986" y="516" width="4" height="1" transform="rotate(50 986 516)" fill="rgb(235,235,235)" opacity="0.51"/><rect x="999" y="513" width="2" height="2" transform="rotate(-44 999 513)" fill="rgb(215,215,215)" opacity="0.72"/><rect x="986" y="439" width="4" height="1.4" transform="rotate(52 986 439)" fill="rgb(170,170,170)" opacity="0.85"/><rect x="1007" y="470" width="2" height="1" transform="rotate(53 1007 470)" fill="rgb(215,215,215)" opacity="0.86"/><rect x="1030" y="520" width="4" height="1" transform="rotate(52 1030 520)" fill="rgb(215,215,215)" opacity="0.71"/><rect x="1025" y="489" width="2" height="1.4" transform="rotate(-36 1025 489)" fill="rgb(150,150,150)" opacity="0.60"/><rect x="1136" y="466" width="6" height="2" transform="rotate(47 1136 466)" fill="rgb(150,150,150)" opacity="0.55"/><rect x="1008" y="467" width="3" height="2" transform="rotate(54 1008 467)" fill="rgb(215,215,215)" opacity="0.52"/><rect x="1027" y="530" width="2" height="2" transform="rotate(-43 1027 530)" fill="rgb(150,150,150)" opacity="0.75"/><rect x="1012" y="485" width="5" height="1.4" transform="rotate(-35 1012 485)" fill="rgb(235,235,235)" opacity="0.51"/><rect x="1049" y="505" width="4" height="1" transform="rotate(50 1049 505)" fill="rgb(190,190,190)" opacity="0.86"/><rect x="993" y="464" width="6" height="1" transform="rotate(57 993 464)" fill="rgb(235,235,235)" opacity="0.70"/><rect x="996" y="518" width="3" height="1.4" transform="rotate(52 996 518)" fill="rgb(170,170,170)" opacity="0.81"/><rect x="963" y="489" width="3" height="1" transform="rotate(-36 963 489)" fill="rgb(150,150,150)" opacity="0.71"/><rect x="1017" y="488" width="5" height="1.4" transform="rotate(49 1017 488)" fill="rgb(215,215,215)" opacity="0.67"/><rect x="1037" y="503" width="5" height="1.4" transform="rotate(47 1037 503)" fill="rgb(170,170,170)" opacity="0.88"/><rect x="989" y="460" width="2" height="1" transform="rotate(-32 989 460)" fill="rgb(215,215,215)" opacity="0.82"/><rect x="989" y="452" width="3" height="1.4" transform="rotate(50 989 452)" fill="rgb(235,235,235)" opacity="0.77"/><rect x="956" y="514" width="3" height="1.4" transform="rotate(56 956 514)" fill="rgb(215,215,215)" opacity="0.88"/><rect x="949" y="476" width="5" height="1" transform="rotate(-35 949 476)" fill="rgb(215,215,215)" opacity="0.48"/><rect x="1025" y="484" width="2" height="1.4" transform="rotate(57 1025 484)" fill="rgb(215,215,215)" opacity="0.75"/><rect x="1043" y="480" width="5" height="1" transform="rotate(50 1043 480)" fill="rgb(215,215,215)" opacity="0.49"/><rect x="992" y="470" width="4" height="1" transform="rotate(48 992 470)" fill="rgb(190,190,190)" opacity="0.50"/><rect x="1000" y="435" width="2" height="1.4" transform="rotate(57 1000 435)" fill="rgb(190,190,190)" opacity="0.87"/><rect x="995" y="490" width="2" height="2" transform="rotate(52 995 490)" fill="rgb(170,170,170)" opacity="0.50"/><rect x="981" y="510" width="3" height="2" transform="rotate(-44 981 510)" fill="rgb(150,150,150)" opacity="0.71"/><rect x="1034" y="494" width="6" height="1.4" transform="rotate(54 1034 494)" fill="rgb(170,170,170)" opacity="0.66"/><rect x="1112" y="519" width="4" height="1" transform="rotate(-35 1112 519)" fill="rgb(170,170,170)" opacity="0.75"/><rect x="975" y="455" width="3" height="1.4" transform="rotate(-38 975 455)" fill="rgb(215,215,215)" opacity="0.80"/><rect x="1005" y="487" width="5" height="1.4" transform="rotate(57 1005 487)" fill="rgb(150,150,150)" opacity="0.56"/><rect x="1036" y="499" width="6" height="1" transform="rotate(-36 1036 499)" fill="rgb(215,215,215)" opacity="0.63"/><rect x="1070" y="497" width="4" height="1" transform="rotate(54 1070 497)" fill="rgb(150,150,150)" opacity="0.88"/><rect x="1020" y="513" width="4" height="1" transform="rotate(-38 1020 513)" fill="rgb(150,150,150)" opacity="0.87"/><rect x="1096" y="526" width="3" height="1.4" transform="rotate(-34 1096 526)" fill="rgb(170,170,170)" opacity="0.73"/><rect x="957" y="471" width="5" height="1.4" transform="rotate(52 957 471)" fill="rgb(170,170,170)" opacity="0.78"/><rect x="969" y="421" width="3" height="1.4" transform="rotate(-42 969 421)" fill="rgb(215,215,215)" opacity="0.49"/><rect x="1014" y="456" width="3" height="2" transform="rotate(-38 1014 456)" fill="rgb(150,150,150)" opacity="0.81"/><rect x="984" y="459" width="4" height="1.4" transform="rotate(-43 984 459)" fill="rgb(170,170,170)" opacity="0.81"/><rect x="1011" y="472" width="3" height="1.4" transform="rotate(55 1011 472)" fill="rgb(235,235,235)" opacity="0.45"/><rect x="963" y="438" width="5" height="2" transform="rotate(-39 963 438)" fill="rgb(150,150,150)" opacity="0.78"/><rect x="984" y="486" width="4" height="1.4" transform="rotate(-40 984 486)" fill="rgb(190,190,190)" opacity="0.53"/><rect x="966" y="480" width="2" height="1" transform="rotate(-37 966 480)" fill="rgb(235,235,235)" opacity="0.46"/><rect x="1019" y="485" width="3" height="2" transform="rotate(56 1019 485)" fill="rgb(235,235,235)" opacity="0.46"/><rect x="967" y="492" width="3" height="1" transform="rotate(46 967 492)" fill="rgb(235,235,235)" opacity="0.73"/><rect x="998" y="467" width="5" height="1.4" transform="rotate(-36 998 467)" fill="rgb(170,170,170)" opacity="0.65"/><rect x="1005" y="465" width="3" height="1" transform="rotate(57 1005 465)" fill="rgb(215,215,215)" opacity="0.72"/><rect x="939" y="499" width="3" height="1" transform="rotate(58 939 499)" fill="rgb(235,235,235)" opacity="0.45"/><rect x="1016" y="451" width="2" height="1" transform="rotate(-32 1016 451)" fill="rgb(150,150,150)" opacity="0.86"/><rect x="921" y="487" width="4" height="1.4" transform="rotate(49 921 487)" fill="rgb(190,190,190)" opacity="0.82"/><rect x="967" y="469" width="3" height="2" transform="rotate(50 967 469)" fill="rgb(170,170,170)" opacity="0.82"/><rect x="1040" y="430" width="5" height="1" transform="rotate(51 1040 430)" fill="rgb(170,170,170)" opacity="0.51"/><rect x="989" y="481" width="3" height="1" transform="rotate(47 989 481)" fill="rgb(190,190,190)" opacity="0.86"/><rect x="1019" y="431" width="4" height="1" transform="rotate(56 1019 431)" fill="rgb(235,235,235)" opacity="0.49"/><rect x="996" y="483" width="5" height="1" transform="rotate(-34 996 483)" fill="rgb(150,150,150)" opacity="0.59"/><rect x="964" y="457" width="5" height="2" transform="rotate(53 964 457)" fill="rgb(215,215,215)" opacity="0.65"/><rect x="1053" y="459" width="6" height="2" transform="rotate(-38 1053 459)" fill="rgb(215,215,215)" opacity="0.61"/><rect x="1065" y="487" width="3" height="1.4" transform="rotate(49 1065 487)" fill="rgb(150,150,150)" opacity="0.49"/><rect x="941" y="441" width="6" height="2" transform="rotate(50 941 441)" fill="rgb(150,150,150)" opacity="0.57"/><rect x="1001" y="488" width="2" height="1" transform="rotate(57 1001 488)" fill="rgb(235,235,235)" opacity="0.72"/><rect x="983" y="481" width="2" height="1" transform="rotate(-40 983 481)" fill="rgb(235,235,235)" opacity="0.64"/><rect x="982" y="454" width="6" height="1.4" transform="rotate(-33 982 454)" fill="rgb(235,235,235)" opacity="0.59"/><rect x="1046" y="509" width="5" height="1.4" transform="rotate(49 1046 509)" fill="rgb(150,150,150)" opacity="0.55"/><rect x="1020" y="428" width="2" height="1" transform="rotate(-43 1020 428)" fill="rgb(215,215,215)" opacity="0.79"/><rect x="972" y="447" width="6" height="2" transform="rotate(51 972 447)" fill="rgb(215,215,215)" opacity="0.67"/><rect x="1027" y="466" width="3" height="1" transform="rotate(-37 1027 466)" fill="rgb(190,190,190)" opacity="0.53"/><rect x="1019" y="500" width="5" height="2" transform="rotate(-39 1019 500)" fill="rgb(190,190,190)" opacity="0.72"/><rect x="1008" y="454" width="2" height="1" transform="rotate(-33 1008 454)" fill="rgb(170,170,170)" opacity="0.83"/><rect x="969" y="534" width="6" height="2" transform="rotate(57 969 534)" fill="rgb(170,170,170)" opacity="0.85"/><rect x="1024" y="451" width="2" height="1.4" transform="rotate(-42 1024 451)" fill="rgb(170,170,170)" opacity="0.50"/><rect x="1031" y="514" width="2" height="2" transform="rotate(55 1031 514)" fill="rgb(170,170,170)" opacity="0.77"/><rect x="1052" y="469" width="2" height="1.4" transform="rotate(47 1052 469)" fill="rgb(150,150,150)" opacity="0.54"/><rect x="970" y="504" width="6" height="1" transform="rotate(-41 970 504)" fill="rgb(235,235,235)" opacity="0.66"/><rect x="1038" y="507" width="3" height="1.4" transform="rotate(-36 1038 507)" fill="rgb(215,215,215)" opacity="0.62"/><rect x="1014" y="476" width="6" height="2" transform="rotate(46 1014 476)" fill="rgb(215,215,215)" opacity="0.90"/><rect x="1012" y="506" width="3" height="1.4" transform="rotate(57 1012 506)" fill="rgb(150,150,150)" opacity="0.71"/><rect x="923" y="520" width="2" height="1.4" transform="rotate(47 923 520)" fill="rgb(215,215,215)" opacity="0.89"/><rect x="992" y="470" width="3" height="2" transform="rotate(-37 992 470)" fill="rgb(215,215,215)" opacity="0.89"/><rect x="1042" y="431" width="3" height="1" transform="rotate(-39 1042 431)" fill="rgb(170,170,170)" opacity="0.81"/><rect x="1009" y="465" width="2" height="2" transform="rotate(-41 1009 465)" fill="rgb(215,215,215)" opacity="0.88"/><rect x="1090" y="518" width="3" height="1.4" transform="rotate(46 1090 518)" fill="rgb(235,235,235)" opacity="0.49"/><rect x="940" y="446" width="4" height="2" transform="rotate(-43 940 446)" fill="rgb(215,215,215)" opacity="0.80"/><rect x="953" y="496" width="6" height="1.4" transform="rotate(-41 953 496)" fill="rgb(215,215,215)" opacity="0.80"/><rect x="1027" y="428" width="4" height="1" transform="rotate(46 1027 428)" fill="rgb(170,170,170)" opacity="0.85"/><rect x="992" y="499" width="2" height="1" transform="rotate(49 992 499)" fill="rgb(215,215,215)" opacity="0.54"/><rect x="969" y="485" width="6" height="2" transform="rotate(-35 969 485)" fill="rgb(215,215,215)" opacity="0.48"/><rect x="940" y="524" width="3" height="2" transform="rotate(-36 940 524)" fill="rgb(215,215,215)" opacity="0.88"/><rect x="958" y="489" width="2" height="1.4" transform="rotate(57 958 489)" fill="rgb(150,150,150)" opacity="0.46"/><rect x="1018" y="488" width="6" height="2" transform="rotate(50 1018 488)" fill="rgb(170,170,170)" opacity="0.52"/><rect x="1065" y="441" width="5" height="1.4" transform="rotate(-41 1065 441)" fill="rgb(150,150,150)" opacity="0.74"/><rect x="972" y="542" width="5" height="1" transform="rotate(58 972 542)" fill="rgb(170,170,170)" opacity="0.88"/><rect x="996" y="518" width="6" height="1" transform="rotate(48 996 518)" fill="rgb(215,215,215)" opacity="0.75"/><rect x="1066" y="483" width="4" height="1.4" transform="rotate(-38 1066 483)" fill="rgb(235,235,235)" opacity="0.56"/><rect x="1043" y="492" width="2" height="1.4" transform="rotate(57 1043 492)" fill="rgb(150,150,150)" opacity="0.70"/><rect x="947" y="494" width="3" height="1.4" transform="rotate(55 947 494)" fill="rgb(235,235,235)" opacity="0.88"/><rect x="993" y="497" width="6" height="2" transform="rotate(-36 993 497)" fill="rgb(150,150,150)" opacity="0.78"/><rect x="987" y="471" width="5" height="1" transform="rotate(56 987 471)" fill="rgb(190,190,190)" opacity="0.82"/><rect x="987" y="483" width="2" height="1" transform="rotate(-37 987 483)" fill="rgb(150,150,150)" opacity="0.48"/><rect x="1059" y="522" width="3" height="1" transform="rotate(49 1059 522)" fill="rgb(190,190,190)" opacity="0.67"/><rect x="998" y="456" width="2" height="2" transform="rotate(51 998 456)" fill="rgb(170,170,170)" opacity="0.77"/><rect x="1030" y="457" width="3" height="1" transform="rotate(-37 1030 457)" fill="rgb(190,190,190)" opacity="0.70"/><rect x="943" y="493" width="5" height="1.4" transform="rotate(54 943 493)" fill="rgb(150,150,150)" opacity="0.46"/><rect x="1046" y="513" width="5" height="2" transform="rotate(53 1046 513)" fill="rgb(170,170,170)" opacity="0.69"/><rect x="1011" y="487" width="6" height="2" transform="rotate(-43 1011 487)" fill="rgb(215,215,215)" opacity="0.59"/><rect x="1048" y="450" width="2" height="1.4" transform="rotate(47 1048 450)" fill="rgb(190,190,190)" opacity="0.57"/><rect x="976" y="539" width="3" height="1.4" transform="rotate(52 976 539)" fill="rgb(170,170,170)" opacity="0.75"/><rect x="979" y="518" width="4" height="1.4" transform="rotate(-42 979 518)" fill="rgb(150,150,150)" opacity="0.74"/><rect x="960" y="450" width="3" height="2" transform="rotate(-42 960 450)" fill="rgb(215,215,215)" opacity="0.53"/><rect x="952" y="493" width="2" height="2" transform="rotate(-39 952 493)" fill="rgb(235,235,235)" opacity="0.67"/><rect x="1026" y="474" width="3" height="1.4" transform="rotate(-39 1026 474)" fill="rgb(190,190,190)" opacity="0.83"/><rect x="1048" y="378" width="4" height="2" transform="rotate(56 1048 378)" fill="rgb(235,235,235)" opacity="0.57"/><rect x="1057" y="379" width="2" height="1.4" transform="rotate(-40 1057 379)" fill="rgb(150,150,150)" opacity="0.84"/><rect x="1078" y="360" width="2" height="1.4" transform="rotate(48 1078 360)" fill="rgb(190,190,190)" opacity="0.78"/><rect x="1100" y="422" width="2" height="1.4" transform="rotate(47 1100 422)" fill="rgb(190,190,190)" opacity="0.63"/><rect x="1079" y="399" width="3" height="1.4" transform="rotate(-33 1079 399)" fill="rgb(235,235,235)" opacity="0.63"/><rect x="1045" y="400" width="2" height="1.4" transform="rotate(54 1045 400)" fill="rgb(235,235,235)" opacity="0.60"/><rect x="1086" y="380" width="2" height="1" transform="rotate(-35 1086 380)" fill="rgb(150,150,150)" opacity="0.73"/><rect x="1123" y="431" width="5" height="1.4" transform="rotate(51 1123 431)" fill="rgb(190,190,190)" opacity="0.59"/><rect x="1086" y="385" width="3" height="1.4" transform="rotate(-39 1086 385)" fill="rgb(170,170,170)" opacity="0.86"/><rect x="1089" y="361" width="2" height="2" transform="rotate(-40 1089 361)" fill="rgb(215,215,215)" opacity="0.59"/><rect x="1088" y="372" width="5" height="1.4" transform="rotate(49 1088 372)" fill="rgb(190,190,190)" opacity="0.66"/><rect x="1062" y="353" width="3" height="1" transform="rotate(-39 1062 353)" fill="rgb(150,150,150)" opacity="0.65"/><rect x="1070" y="402" width="2" height="1" transform="rotate(49 1070 402)" fill="rgb(215,215,215)" opacity="0.84"/><rect x="1069" y="360" width="3" height="2" transform="rotate(54 1069 360)" fill="rgb(150,150,150)" opacity="0.69"/><rect x="1090" y="422" width="3" height="2" transform="rotate(54 1090 422)" fill="rgb(215,215,215)" opacity="0.84"/><rect x="1078" y="379" width="3" height="1.4" transform="rotate(-33 1078 379)" fill="rgb(170,170,170)" opacity="0.69"/><rect x="1002" y="428" width="3" height="1" transform="rotate(54 1002 428)" fill="rgb(150,150,150)" opacity="0.45"/><rect x="1041" y="440" width="6" height="1.4" transform="rotate(51 1041 440)" fill="rgb(235,235,235)" opacity="0.75"/><rect x="1086" y="373" width="3" height="2" transform="rotate(-42 1086 373)" fill="rgb(215,215,215)" opacity="0.74"/><rect x="1071" y="344" width="3" height="1" transform="rotate(-41 1071 344)" fill="rgb(150,150,150)" opacity="0.67"/><rect x="1059" y="373" width="3" height="1.4" transform="rotate(-36 1059 373)" fill="rgb(215,215,215)" opacity="0.74"/><rect x="1017" y="417" width="6" height="2" transform="rotate(57 1017 417)" fill="rgb(170,170,170)" opacity="0.75"/><rect x="1112" y="416" width="3" height="1.4" transform="rotate(53 1112 416)" fill="rgb(170,170,170)" opacity="0.78"/><rect x="1031" y="378" width="4" height="1" transform="rotate(-33 1031 378)" fill="rgb(235,235,235)" opacity="0.83"/><rect x="1035" y="404" width="3" height="1.4" transform="rotate(-43 1035 404)" fill="rgb(215,215,215)" opacity="0.85"/><rect x="1030" y="395" width="2" height="2" transform="rotate(56 1030 395)" fill="rgb(235,235,235)" opacity="0.72"/><rect x="1070" y="428" width="4" height="2" transform="rotate(-32 1070 428)" fill="rgb(190,190,190)" opacity="0.54"/><rect x="1053" y="399" width="3" height="1" transform="rotate(46 1053 399)" fill="rgb(215,215,215)" opacity="0.48"/><rect x="1057" y="363" width="3" height="1.4" transform="rotate(-33 1057 363)" fill="rgb(170,170,170)" opacity="0.55"/><rect x="1071" y="381" width="2" height="2" transform="rotate(51 1071 381)" fill="rgb(170,170,170)" opacity="0.76"/><rect x="1059" y="402" width="3" height="2" transform="rotate(56 1059 402)" fill="rgb(215,215,215)" opacity="0.82"/><rect x="1017" y="371" width="6" height="1.4" transform="rotate(55 1017 371)" fill="rgb(170,170,170)" opacity="0.60"/><rect x="1049" y="336" width="2" height="1" transform="rotate(-34 1049 336)" fill="rgb(170,170,170)" opacity="0.61"/><rect x="1053" y="362" width="3" height="1.4" transform="rotate(48 1053 362)" fill="rgb(235,235,235)" opacity="0.52"/><rect x="1099" y="375" width="6" height="1" transform="rotate(57 1099 375)" fill="rgb(190,190,190)" opacity="0.78"/><rect x="1036" y="392" width="2" height="2" transform="rotate(55 1036 392)" fill="rgb(215,215,215)" opacity="0.57"/><rect x="1007" y="409" width="5" height="1" transform="rotate(48 1007 409)" fill="rgb(215,215,215)" opacity="0.70"/><rect x="1063" y="413" width="5" height="2" transform="rotate(-35 1063 413)" fill="rgb(215,215,215)" opacity="0.55"/><rect x="1048" y="370" width="2" height="1" transform="rotate(51 1048 370)" fill="rgb(190,190,190)" opacity="0.61"/><rect x="1046" y="429" width="2" height="2" transform="rotate(-35 1046 429)" fill="rgb(150,150,150)" opacity="0.47"/><rect x="1073" y="377" width="3" height="1" transform="rotate(-39 1073 377)" fill="rgb(235,235,235)" opacity="0.65"/><rect x="1089" y="384" width="3" height="1.4" transform="rotate(-37 1089 384)" fill="rgb(150,150,150)" opacity="0.87"/><rect x="1047" y="398" width="6" height="1.4" transform="rotate(47 1047 398)" fill="rgb(190,190,190)" opacity="0.84"/><rect x="1049" y="362" width="2" height="1" transform="rotate(50 1049 362)" fill="rgb(215,215,215)" opacity="0.77"/><rect x="1017" y="358" width="3" height="2" transform="rotate(52 1017 358)" fill="rgb(235,235,235)" opacity="0.69"/><rect x="1012" y="388" width="5" height="1.4" transform="rotate(51 1012 388)" fill="rgb(170,170,170)" opacity="0.73"/><rect x="1072" y="384" width="2" height="1.4" transform="rotate(50 1072 384)" fill="rgb(150,150,150)" opacity="0.59"/><rect x="1008" y="421" width="2" height="1" transform="rotate(-44 1008 421)" fill="rgb(170,170,170)" opacity="0.78"/><rect x="1030" y="375" width="6" height="1.4" transform="rotate(-43 1030 375)" fill="rgb(150,150,150)" opacity="0.58"/><rect x="1052" y="429" width="2" height="2" transform="rotate(51 1052 429)" fill="rgb(170,170,170)" opacity="0.76"/><rect x="699" y="723" width="4" height="1.4" transform="rotate(51 699 723)" fill="rgb(150,150,150)" opacity="0.53"/><rect x="816" y="759" width="2" height="1.4" transform="rotate(-41 816 759)" fill="rgb(190,190,190)" opacity="0.62"/><rect x="830" y="732" width="4" height="2" transform="rotate(54 830 732)" fill="rgb(190,190,190)" opacity="0.51"/><rect x="739" y="721" width="3" height="2" transform="rotate(46 739 721)" fill="rgb(215,215,215)" opacity="0.45"/><rect x="689" y="775" width="5" height="1" transform="rotate(-41 689 775)" fill="rgb(235,235,235)" opacity="0.68"/><rect x="717" y="769" width="3" height="2" transform="rotate(47 717 769)" fill="rgb(215,215,215)" opacity="0.84"/><rect x="614" y="758" width="5" height="1" transform="rotate(45 614 758)" fill="rgb(190,190,190)" opacity="0.73"/><rect x="725" y="756" width="3" height="1" transform="rotate(44 725 756)" fill="rgb(215,215,215)" opacity="0.69"/><rect x="856" y="711" width="3" height="2" transform="rotate(47 856 711)" fill="rgb(215,215,215)" opacity="0.46"/><rect x="743" y="775" width="6" height="2" transform="rotate(45 743 775)" fill="rgb(150,150,150)" opacity="0.74"/><rect x="624" y="722" width="3" height="1.4" transform="rotate(47 624 722)" fill="rgb(170,170,170)" opacity="0.80"/><rect x="748" y="768" width="6" height="1" transform="rotate(54 748 768)" fill="rgb(190,190,190)" opacity="0.66"/><rect x="767" y="717" width="6" height="1.4" transform="rotate(-41 767 717)" fill="rgb(235,235,235)" opacity="0.49"/><rect x="757" y="766" width="4" height="1.4" transform="rotate(-45 757 766)" fill="rgb(150,150,150)" opacity="0.87"/><rect x="636" y="821" width="4" height="1.4" transform="rotate(-36 636 821)" fill="rgb(150,150,150)" opacity="0.72"/><rect x="674" y="756" width="3" height="1" transform="rotate(-36 674 756)" fill="rgb(235,235,235)" opacity="0.58"/><rect x="694" y="719" width="3" height="1" transform="rotate(-35 694 719)" fill="rgb(235,235,235)" opacity="0.59"/><rect x="724" y="792" width="6" height="1" transform="rotate(-43 724 792)" fill="rgb(170,170,170)" opacity="0.54"/><rect x="769" y="790" width="6" height="2" transform="rotate(47 769 790)" fill="rgb(215,215,215)" opacity="0.73"/><rect x="718" y="804" width="5" height="2" transform="rotate(54 718 804)" fill="rgb(150,150,150)" opacity="0.75"/><rect x="688" y="791" width="5" height="1" transform="rotate(-42 688 791)" fill="rgb(235,235,235)" opacity="0.52"/><rect x="696" y="736" width="3" height="1" transform="rotate(54 696 736)" fill="rgb(235,235,235)" opacity="0.74"/><rect x="742" y="799" width="6" height="1" transform="rotate(-37 742 799)" fill="rgb(235,235,235)" opacity="0.87"/><rect x="747" y="749" width="5" height="1.4" transform="rotate(-44 747 749)" fill="rgb(170,170,170)" opacity="0.57"/><rect x="760" y="775" width="6" height="1.4" transform="rotate(-39 760 775)" fill="rgb(150,150,150)" opacity="0.72"/><rect x="737" y="730" width="3" height="1.4" transform="rotate(-40 737 730)" fill="rgb(215,215,215)" opacity="0.89"/><rect x="681" y="714" width="4" height="1" transform="rotate(-37 681 714)" fill="rgb(215,215,215)" opacity="0.73"/><rect x="746" y="814" width="3" height="2" transform="rotate(50 746 814)" fill="rgb(170,170,170)" opacity="0.62"/><rect x="747" y="714" width="3" height="2" transform="rotate(52 747 714)" fill="rgb(170,170,170)" opacity="0.70"/><rect x="698" y="737" width="3" height="1" transform="rotate(50 698 737)" fill="rgb(235,235,235)" opacity="0.83"/><rect x="725" y="723" width="4" height="1.4" transform="rotate(52 725 723)" fill="rgb(170,170,170)" opacity="0.90"/><rect x="711" y="737" width="3" height="2" transform="rotate(-45 711 737)" fill="rgb(215,215,215)" opacity="0.74"/><rect x="716" y="756" width="6" height="1" transform="rotate(-46 716 756)" fill="rgb(235,235,235)" opacity="0.76"/><rect x="806" y="745" width="2" height="1" transform="rotate(49 806 745)" fill="rgb(170,170,170)" opacity="0.88"/><rect x="677" y="809" width="5" height="1.4" transform="rotate(53 677 809)" fill="rgb(170,170,170)" opacity="0.67"/><rect x="780" y="703" width="3" height="1.4" transform="rotate(-37 780 703)" fill="rgb(235,235,235)" opacity="0.59"/><rect x="753" y="758" width="5" height="2" transform="rotate(47 753 758)" fill="rgb(190,190,190)" opacity="0.55"/><rect x="724" y="809" width="5" height="1.4" transform="rotate(55 724 809)" fill="rgb(215,215,215)" opacity="0.56"/><rect x="717" y="791" width="2" height="1.4" transform="rotate(45 717 791)" fill="rgb(170,170,170)" opacity="0.56"/><rect x="734" y="682" width="3" height="1.4" transform="rotate(-34 734 682)" fill="rgb(150,150,150)" opacity="0.73"/><rect x="719" y="801" width="6" height="1.4" transform="rotate(45 719 801)" fill="rgb(150,150,150)" opacity="0.50"/><rect x="726" y="719" width="3" height="2" transform="rotate(48 726 719)" fill="rgb(170,170,170)" opacity="0.47"/><rect x="717" y="761" width="3" height="1.4" transform="rotate(53 717 761)" fill="rgb(150,150,150)" opacity="0.45"/><rect x="695" y="753" width="6" height="1.4" transform="rotate(-42 695 753)" fill="rgb(235,235,235)" opacity="0.84"/><rect x="765" y="777" width="5" height="1.4" transform="rotate(-41 765 777)" fill="rgb(190,190,190)" opacity="0.78"/><rect x="769" y="783" width="2" height="1" transform="rotate(-34 769 783)" fill="rgb(150,150,150)" opacity="0.50"/><rect x="683" y="729" width="4" height="1.4" transform="rotate(-38 683 729)" fill="rgb(215,215,215)" opacity="0.68"/><rect x="743" y="810" width="2" height="2" transform="rotate(-39 743 810)" fill="rgb(215,215,215)" opacity="0.45"/><rect x="658" y="768" width="3" height="1.4" transform="rotate(47 658 768)" fill="rgb(170,170,170)" opacity="0.83"/><rect x="719" y="786" width="5" height="1.4" transform="rotate(56 719 786)" fill="rgb(215,215,215)" opacity="0.47"/><rect x="787" y="741" width="2" height="1.4" transform="rotate(-41 787 741)" fill="rgb(235,235,235)" opacity="0.52"/><rect x="722" y="772" width="5" height="2" transform="rotate(46 722 772)" fill="rgb(215,215,215)" opacity="0.88"/><rect x="633" y="763" width="3" height="1.4" transform="rotate(55 633 763)" fill="rgb(190,190,190)" opacity="0.67"/><rect x="679" y="849" width="3" height="1.4" transform="rotate(54 679 849)" fill="rgb(170,170,170)" opacity="0.48"/><rect x="694" y="733" width="3" height="1" transform="rotate(-37 694 733)" fill="rgb(190,190,190)" opacity="0.61"/><rect x="748" y="734" width="4" height="1" transform="rotate(51 748 734)" fill="rgb(215,215,215)" opacity="0.64"/><rect x="652" y="729" width="2" height="2" transform="rotate(55 652 729)" fill="rgb(150,150,150)" opacity="0.80"/><rect x="666" y="778" width="4" height="1.4" transform="rotate(-41 666 778)" fill="rgb(170,170,170)" opacity="0.62"/><rect x="730" y="766" width="3" height="1.4" transform="rotate(-42 730 766)" fill="rgb(215,215,215)" opacity="0.60"/><rect x="690" y="761" width="2" height="1.4" transform="rotate(48 690 761)" fill="rgb(150,150,150)" opacity="0.74"/><rect x="741" y="757" width="3" height="1" transform="rotate(50 741 757)" fill="rgb(215,215,215)" opacity="0.79"/><rect x="602" y="773" width="4" height="1" transform="rotate(55 602 773)" fill="rgb(235,235,235)" opacity="0.86"/><rect x="739" y="710" width="3" height="2" transform="rotate(-41 739 710)" fill="rgb(170,170,170)" opacity="0.68"/><rect x="703" y="733" width="3" height="1.4" transform="rotate(-36 703 733)" fill="rgb(235,235,235)" opacity="0.61"/><rect x="680" y="696" width="2" height="2" transform="rotate(-38 680 696)" fill="rgb(170,170,170)" opacity="0.76"/><rect x="688" y="806" width="3" height="1.4" transform="rotate(53 688 806)" fill="rgb(170,170,170)" opacity="0.72"/><rect x="704" y="805" width="6" height="1" transform="rotate(48 704 805)" fill="rgb(190,190,190)" opacity="0.59"/><rect x="792" y="753" width="4" height="1" transform="rotate(-43 792 753)" fill="rgb(150,150,150)" opacity="0.81"/><rect x="662" y="738" width="6" height="1.4" transform="rotate(-36 662 738)" fill="rgb(170,170,170)" opacity="0.67"/><rect x="785" y="770" width="3" height="2" transform="rotate(45 785 770)" fill="rgb(235,235,235)" opacity="0.80"/><rect x="657" y="747" width="5" height="1" transform="rotate(-40 657 747)" fill="rgb(150,150,150)" opacity="0.61"/><rect x="673" y="729" width="3" height="1" transform="rotate(-41 673 729)" fill="rgb(170,170,170)" opacity="0.65"/><rect x="736" y="808" width="6" height="2" transform="rotate(-43 736 808)" fill="rgb(150,150,150)" opacity="0.49"/><rect x="737" y="717" width="6" height="1.4" transform="rotate(-39 737 717)" fill="rgb(215,215,215)" opacity="0.68"/><rect x="708" y="783" width="5" height="1" transform="rotate(51 708 783)" fill="rgb(235,235,235)" opacity="0.83"/><rect x="679" y="722" width="4" height="1" transform="rotate(46 679 722)" fill="rgb(150,150,150)" opacity="0.62"/><rect x="592" y="810" width="5" height="1" transform="rotate(52 592 810)" fill="rgb(215,215,215)" opacity="0.64"/><rect x="699" y="787" width="6" height="2" transform="rotate(45 699 787)" fill="rgb(150,150,150)" opacity="0.87"/><rect x="784" y="707" width="3" height="2" transform="rotate(55 784 707)" fill="rgb(190,190,190)" opacity="0.60"/><rect x="703" y="767" width="3" height="1" transform="rotate(45 703 767)" fill="rgb(150,150,150)" opacity="0.76"/><rect x="692" y="725" width="2" height="1.4" transform="rotate(-35 692 725)" fill="rgb(215,215,215)" opacity="0.65"/><rect x="671" y="790" width="3" height="2" transform="rotate(-45 671 790)" fill="rgb(190,190,190)" opacity="0.57"/><rect x="643" y="791" width="4" height="2" transform="rotate(-36 643 791)" fill="rgb(190,190,190)" opacity="0.88"/><rect x="714" y="757" width="4" height="1.4" transform="rotate(-45 714 757)" fill="rgb(150,150,150)" opacity="0.75"/><rect x="662" y="761" width="4" height="2" transform="rotate(-38 662 761)" fill="rgb(190,190,190)" opacity="0.53"/><rect x="819" y="778" width="2" height="1.4" transform="rotate(-39 819 778)" fill="rgb(150,150,150)" opacity="0.82"/><rect x="782" y="713" width="2" height="1.4" transform="rotate(-39 782 713)" fill="rgb(150,150,150)" opacity="0.77"/><rect x="712" y="768" width="2" height="2" transform="rotate(-40 712 768)" fill="rgb(190,190,190)" opacity="0.55"/><rect x="687" y="765" width="3" height="1.4" transform="rotate(-35 687 765)" fill="rgb(150,150,150)" opacity="0.78"/><rect x="714" y="756" width="3" height="2" transform="rotate(46 714 756)" fill="rgb(170,170,170)" opacity="0.46"/><rect x="626" y="791" width="3" height="2" transform="rotate(55 626 791)" fill="rgb(190,190,190)" opacity="0.53"/><rect x="754" y="778" width="3" height="2" transform="rotate(52 754 778)" fill="rgb(235,235,235)" opacity="0.89"/><rect x="662" y="800" width="6" height="2" transform="rotate(-40 662 800)" fill="rgb(190,190,190)" opacity="0.47"/><rect x="779" y="746" width="3" height="1" transform="rotate(-34 779 746)" fill="rgb(215,215,215)" opacity="0.89"/><rect x="682" y="756" width="3" height="1" transform="rotate(45 682 756)" fill="rgb(215,215,215)" opacity="0.88"/><rect x="666" y="704" width="3" height="2" transform="rotate(46 666 704)" fill="rgb(170,170,170)" opacity="0.57"/><rect x="651" y="811" width="6" height="1.4" transform="rotate(55 651 811)" fill="rgb(150,150,150)" opacity="0.57"/><rect x="723" y="776" width="2" height="2" transform="rotate(53 723 776)" fill="rgb(235,235,235)" opacity="0.88"/><rect x="621" y="756" width="2" height="1.4" transform="rotate(53 621 756)" fill="rgb(215,215,215)" opacity="0.77"/><rect x="778" y="744" width="5" height="1" transform="rotate(54 778 744)" fill="rgb(235,235,235)" opacity="0.67"/><rect x="885" y="760" width="2" height="2" transform="rotate(-42 885 760)" fill="rgb(215,215,215)" opacity="0.82"/><rect x="753" y="760" width="3" height="1" transform="rotate(-43 753 760)" fill="rgb(150,150,150)" opacity="0.54"/><rect x="707" y="769" width="5" height="1" transform="rotate(53 707 769)" fill="rgb(190,190,190)" opacity="0.73"/><rect x="684" y="783" width="4" height="2" transform="rotate(47 684 783)" fill="rgb(150,150,150)" opacity="0.51"/><rect x="656" y="806" width="5" height="1.4" transform="rotate(-43 656 806)" fill="rgb(170,170,170)" opacity="0.66"/><rect x="743" y="731" width="3" height="1" transform="rotate(52 743 731)" fill="rgb(150,150,150)" opacity="0.68"/><rect x="674" y="707" width="6" height="1" transform="rotate(45 674 707)" fill="rgb(235,235,235)" opacity="0.58"/><rect x="664" y="750" width="3" height="1.4" transform="rotate(-41 664 750)" fill="rgb(150,150,150)" opacity="0.74"/><rect x="782" y="822" width="4" height="2" transform="rotate(-42 782 822)" fill="rgb(215,215,215)" opacity="0.49"/><rect x="680" y="797" width="5" height="1" transform="rotate(-39 680 797)" fill="rgb(190,190,190)" opacity="0.56"/><rect x="930" y="766" width="6" height="2" transform="rotate(-45 930 766)" fill="rgb(215,215,215)" opacity="0.74"/><rect x="882" y="714" width="5" height="1.4" transform="rotate(-38 882 714)" fill="rgb(170,170,170)" opacity="0.78"/><rect x="878" y="689" width="3" height="2" transform="rotate(-38 878 689)" fill="rgb(215,215,215)" opacity="0.73"/><rect x="809" y="646" width="2" height="1" transform="rotate(-40 809 646)" fill="rgb(190,190,190)" opacity="0.77"/><rect x="951" y="654" width="4" height="1" transform="rotate(50 951 654)" fill="rgb(150,150,150)" opacity="0.69"/><rect x="898" y="630" width="4" height="1" transform="rotate(-40 898 630)" fill="rgb(190,190,190)" opacity="0.67"/><rect x="804" y="658" width="3" height="1" transform="rotate(-37 804 658)" fill="rgb(170,170,170)" opacity="0.49"/><rect x="856" y="653" width="4" height="1.4" transform="rotate(-45 856 653)" fill="rgb(215,215,215)" opacity="0.64"/><rect x="977" y="722" width="3" height="1" transform="rotate(45 977 722)" fill="rgb(150,150,150)" opacity="0.88"/><rect x="985" y="703" width="3" height="1" transform="rotate(53 985 703)" fill="rgb(235,235,235)" opacity="0.87"/><rect x="814" y="705" width="3" height="2" transform="rotate(43 814 705)" fill="rgb(235,235,235)" opacity="0.84"/><rect x="908" y="650" width="3" height="1.4" transform="rotate(47 908 650)" fill="rgb(170,170,170)" opacity="0.61"/><rect x="845" y="677" width="3" height="1.4" transform="rotate(48 845 677)" fill="rgb(150,150,150)" opacity="0.89"/><rect x="843" y="659" width="3" height="2" transform="rotate(-42 843 659)" fill="rgb(190,190,190)" opacity="0.57"/><rect x="951" y="683" width="3" height="1.4" transform="rotate(-43 951 683)" fill="rgb(215,215,215)" opacity="0.71"/><rect x="886" y="686" width="3" height="1" transform="rotate(-46 886 686)" fill="rgb(190,190,190)" opacity="0.64"/><rect x="851" y="723" width="3" height="2" transform="rotate(-41 851 723)" fill="rgb(215,215,215)" opacity="0.89"/><rect x="893" y="728" width="2" height="2" transform="rotate(-39 893 728)" fill="rgb(235,235,235)" opacity="0.59"/><rect x="960" y="676" width="3" height="1" transform="rotate(44 960 676)" fill="rgb(215,215,215)" opacity="0.54"/><rect x="853" y="628" width="3" height="1" transform="rotate(-42 853 628)" fill="rgb(215,215,215)" opacity="0.88"/><rect x="944" y="771" width="4" height="1" transform="rotate(-38 944 771)" fill="rgb(170,170,170)" opacity="0.71"/><rect x="930" y="694" width="6" height="1.4" transform="rotate(47 930 694)" fill="rgb(190,190,190)" opacity="0.68"/><rect x="784" y="740" width="3" height="2" transform="rotate(-46 784 740)" fill="rgb(215,215,215)" opacity="0.80"/><rect x="874" y="696" width="3" height="1" transform="rotate(-41 874 696)" fill="rgb(150,150,150)" opacity="0.54"/><rect x="893" y="625" width="5" height="1" transform="rotate(52 893 625)" fill="rgb(190,190,190)" opacity="0.48"/><rect x="970" y="757" width="3" height="1" transform="rotate(-41 970 757)" fill="rgb(215,215,215)" opacity="0.77"/><rect x="944" y="667" width="5" height="1" transform="rotate(51 944 667)" fill="rgb(235,235,235)" opacity="0.88"/><rect x="903" y="776" width="5" height="1.4" transform="rotate(-36 903 776)" fill="rgb(235,235,235)" opacity="0.82"/><rect x="842" y="685" width="3" height="1" transform="rotate(48 842 685)" fill="rgb(150,150,150)" opacity="0.85"/><rect x="957" y="688" width="4" height="1.4" transform="rotate(43 957 688)" fill="rgb(190,190,190)" opacity="0.73"/><rect x="853" y="742" width="2" height="1.4" transform="rotate(-39 853 742)" fill="rgb(170,170,170)" opacity="0.54"/><rect x="965" y="643" width="3" height="1.4" transform="rotate(-46 965 643)" fill="rgb(190,190,190)" opacity="0.83"/><rect x="830" y="698" width="2" height="1.4" transform="rotate(-39 830 698)" fill="rgb(190,190,190)" opacity="0.76"/><rect x="922" y="738" width="6" height="1" transform="rotate(-42 922 738)" fill="rgb(170,170,170)" opacity="0.63"/><rect x="882" y="669" width="5" height="1.4" transform="rotate(-40 882 669)" fill="rgb(170,170,170)" opacity="0.74"/><rect x="895" y="730" width="4" height="1.4" transform="rotate(-46 895 730)" fill="rgb(215,215,215)" opacity="0.74"/><rect x="924" y="692" width="6" height="2" transform="rotate(49 924 692)" fill="rgb(235,235,235)" opacity="0.49"/><rect x="993" y="635" width="3" height="2" transform="rotate(46 993 635)" fill="rgb(150,150,150)" opacity="0.50"/><rect x="1028" y="661" width="3" height="2" transform="rotate(-47 1028 661)" fill="rgb(215,215,215)" opacity="0.53"/><rect x="902" y="721" width="2" height="1.4" transform="rotate(-48 902 721)" fill="rgb(150,150,150)" opacity="0.61"/><rect x="856" y="699" width="4" height="1" transform="rotate(43 856 699)" fill="rgb(235,235,235)" opacity="0.74"/><rect x="854" y="748" width="6" height="1.4" transform="rotate(-37 854 748)" fill="rgb(190,190,190)" opacity="0.88"/><rect x="837" y="728" width="3" height="1" transform="rotate(-40 837 728)" fill="rgb(170,170,170)" opacity="0.73"/><rect x="838" y="688" width="4" height="2" transform="rotate(49 838 688)" fill="rgb(215,215,215)" opacity="0.89"/><rect x="877" y="721" width="3" height="1.4" transform="rotate(-39 877 721)" fill="rgb(190,190,190)" opacity="0.87"/><rect x="908" y="741" width="3" height="1.4" transform="rotate(53 908 741)" fill="rgb(235,235,235)" opacity="0.68"/><rect x="831" y="651" width="5" height="2" transform="rotate(51 831 651)" fill="rgb(190,190,190)" opacity="0.69"/><rect x="804" y="718" width="3" height="1" transform="rotate(-40 804 718)" fill="rgb(215,215,215)" opacity="0.62"/><rect x="923" y="720" width="4" height="1" transform="rotate(-38 923 720)" fill="rgb(190,190,190)" opacity="0.54"/><rect x="892" y="650" width="6" height="1.4" transform="rotate(-44 892 650)" fill="rgb(170,170,170)" opacity="0.66"/><rect x="890" y="717" width="5" height="2" transform="rotate(-41 890 717)" fill="rgb(150,150,150)" opacity="0.69"/><rect x="797" y="677" width="6" height="2" transform="rotate(52 797 677)" fill="rgb(190,190,190)" opacity="0.83"/><rect x="867" y="692" width="6" height="1.4" transform="rotate(43 867 692)" fill="rgb(190,190,190)" opacity="0.76"/><rect x="933" y="630" width="3" height="1" transform="rotate(-38 933 630)" fill="rgb(215,215,215)" opacity="0.52"/><rect x="800" y="680" width="6" height="2" transform="rotate(-38 800 680)" fill="rgb(235,235,235)" opacity="0.81"/><rect x="841" y="696" width="2" height="1" transform="rotate(-46 841 696)" fill="rgb(170,170,170)" opacity="0.66"/><rect x="857" y="701" width="5" height="1" transform="rotate(-40 857 701)" fill="rgb(170,170,170)" opacity="0.71"/><rect x="898" y="725" width="5" height="2" transform="rotate(54 898 725)" fill="rgb(215,215,215)" opacity="0.62"/><rect x="909" y="781" width="6" height="2" transform="rotate(-38 909 781)" fill="rgb(215,215,215)" opacity="0.76"/><rect x="924" y="637" width="4" height="1.4" transform="rotate(-46 924 637)" fill="rgb(235,235,235)" opacity="0.58"/><rect x="832" y="686" width="6" height="2" transform="rotate(51 832 686)" fill="rgb(150,150,150)" opacity="0.51"/><rect x="809" y="676" width="2" height="2" transform="rotate(-41 809 676)" fill="rgb(235,235,235)" opacity="0.46"/><rect x="962" y="723" width="2" height="1" transform="rotate(43 962 723)" fill="rgb(235,235,235)" opacity="0.57"/><rect x="967" y="621" width="6" height="1" transform="rotate(45 967 621)" fill="rgb(215,215,215)" opacity="0.50"/><rect x="838" y="680" width="5" height="2" transform="rotate(46 838 680)" fill="rgb(150,150,150)" opacity="0.87"/><rect x="754" y="706" width="3" height="1" transform="rotate(49 754 706)" fill="rgb(190,190,190)" opacity="0.80"/><rect x="766" y="668" width="3" height="1" transform="rotate(43 766 668)" fill="rgb(170,170,170)" opacity="0.89"/><rect x="833" y="709" width="2" height="1" transform="rotate(46 833 709)" fill="rgb(150,150,150)" opacity="0.78"/><rect x="848" y="719" width="5" height="2" transform="rotate(43 848 719)" fill="rgb(170,170,170)" opacity="0.58"/><rect x="884" y="707" width="5" height="1" transform="rotate(44 884 707)" fill="rgb(190,190,190)" opacity="0.88"/><rect x="901" y="696" width="2" height="1" transform="rotate(44 901 696)" fill="rgb(150,150,150)" opacity="0.51"/><rect x="875" y="648" width="3" height="1" transform="rotate(-48 875 648)" fill="rgb(215,215,215)" opacity="0.56"/><rect x="870" y="642" width="5" height="1" transform="rotate(-42 870 642)" fill="rgb(170,170,170)" opacity="0.88"/><rect x="859" y="672" width="3" height="1.4" transform="rotate(-42 859 672)" fill="rgb(170,170,170)" opacity="0.53"/><rect x="874" y="759" width="4" height="2" transform="rotate(50 874 759)" fill="rgb(190,190,190)" opacity="0.84"/><rect x="901" y="734" width="3" height="1.4" transform="rotate(-41 901 734)" fill="rgb(235,235,235)" opacity="0.48"/><rect x="911" y="737" width="5" height="1" transform="rotate(-43 911 737)" fill="rgb(150,150,150)" opacity="0.59"/><rect x="1016" y="700" width="6" height="2" transform="rotate(-37 1016 700)" fill="rgb(235,235,235)" opacity="0.88"/><rect x="861" y="690" width="6" height="2" transform="rotate(52 861 690)" fill="rgb(235,235,235)" opacity="0.74"/><rect x="862" y="738" width="3" height="1.4" transform="rotate(-45 862 738)" fill="rgb(235,235,235)" opacity="0.58"/><rect x="826" y="652" width="4" height="1.4" transform="rotate(51 826 652)" fill="rgb(235,235,235)" opacity="0.69"/><rect x="860" y="648" width="3" height="1.4" transform="rotate(43 860 648)" fill="rgb(170,170,170)" opacity="0.81"/><rect x="964" y="655" width="6" height="1" transform="rotate(52 964 655)" fill="rgb(190,190,190)" opacity="0.51"/><rect x="915" y="673" width="5" height="1" transform="rotate(-41 915 673)" fill="rgb(150,150,150)" opacity="0.58"/><rect x="777" y="730" width="2" height="2" transform="rotate(53 777 730)" fill="rgb(215,215,215)" opacity="0.65"/><rect x="921" y="725" width="3" height="1" transform="rotate(-37 921 725)" fill="rgb(170,170,170)" opacity="0.84"/><rect x="949" y="644" width="4" height="1.4" transform="rotate(52 949 644)" fill="rgb(150,150,150)" opacity="0.58"/><rect x="875" y="684" width="6" height="1.4" transform="rotate(-45 875 684)" fill="rgb(190,190,190)" opacity="0.46"/><rect x="851" y="645" width="6" height="1" transform="rotate(45 851 645)" fill="rgb(150,150,150)" opacity="0.55"/><rect x="866" y="824" width="3" height="2" transform="rotate(46 866 824)" fill="rgb(190,190,190)" opacity="0.47"/><rect x="1176" y="619" width="4" height="2" transform="rotate(50 1176 619)" fill="rgb(215,215,215)" opacity="0.53"/><rect x="1170" y="452" width="6" height="2" transform="rotate(-35 1170 452)" fill="rgb(215,215,215)" opacity="0.71"/><rect x="1146" y="529" width="4" height="1" transform="rotate(53 1146 529)" fill="rgb(170,170,170)" opacity="0.70"/><rect x="1201" y="594" width="4" height="1" transform="rotate(49 1201 594)" fill="rgb(235,235,235)" opacity="0.47"/><rect x="1147" y="576" width="2" height="1" transform="rotate(61 1147 576)" fill="rgb(215,215,215)" opacity="0.62"/><rect x="1227" y="577" width="6" height="1" transform="rotate(49 1227 577)" fill="rgb(215,215,215)" opacity="0.84"/><rect x="1152" y="586" width="5" height="2" transform="rotate(-39 1152 586)" fill="rgb(150,150,150)" opacity="0.80"/><rect x="1140" y="691" width="5" height="2" transform="rotate(59 1140 691)" fill="rgb(235,235,235)" opacity="0.49"/><rect x="1228" y="518" width="3" height="2" transform="rotate(-33 1228 518)" fill="rgb(150,150,150)" opacity="0.71"/><rect x="1202" y="403" width="3" height="1.4" transform="rotate(56 1202 403)" fill="rgb(190,190,190)" opacity="0.79"/><rect x="1141" y="556" width="4" height="1" transform="rotate(58 1141 556)" fill="rgb(235,235,235)" opacity="0.87"/><rect x="1158" y="608" width="2" height="1" transform="rotate(59 1158 608)" fill="rgb(150,150,150)" opacity="0.65"/><rect x="1224" y="595" width="6" height="1" transform="rotate(-35 1224 595)" fill="rgb(150,150,150)" opacity="0.78"/><rect x="1223" y="579" width="2" height="2" transform="rotate(57 1223 579)" fill="rgb(215,215,215)" opacity="0.71"/><rect x="1219" y="519" width="2" height="1" transform="rotate(58 1219 519)" fill="rgb(235,235,235)" opacity="0.50"/><rect x="1229" y="526" width="4" height="1.4" transform="rotate(-41 1229 526)" fill="rgb(170,170,170)" opacity="0.57"/><rect x="1206" y="567" width="2" height="1" transform="rotate(51 1206 567)" fill="rgb(170,170,170)" opacity="0.75"/><rect x="1172" y="564" width="2" height="1" transform="rotate(-29 1172 564)" fill="rgb(235,235,235)" opacity="0.74"/><rect x="1212" y="543" width="6" height="2" transform="rotate(57 1212 543)" fill="rgb(170,170,170)" opacity="0.53"/><rect x="1152" y="556" width="5" height="1.4" transform="rotate(49 1152 556)" fill="rgb(215,215,215)" opacity="0.89"/><rect x="1210" y="570" width="6" height="1" transform="rotate(-32 1210 570)" fill="rgb(235,235,235)" opacity="0.85"/><rect x="1180" y="546" width="5" height="1.4" transform="rotate(57 1180 546)" fill="rgb(150,150,150)" opacity="0.55"/><rect x="1213" y="527" width="4" height="2" transform="rotate(-41 1213 527)" fill="rgb(215,215,215)" opacity="0.89"/><rect x="1149" y="521" width="4" height="2" transform="rotate(55 1149 521)" fill="rgb(235,235,235)" opacity="0.45"/><rect x="1214" y="554" width="5" height="2" transform="rotate(51 1214 554)" fill="rgb(190,190,190)" opacity="0.85"/><rect x="1233" y="563" width="4" height="1" transform="rotate(49 1233 563)" fill="rgb(190,190,190)" opacity="0.76"/><rect x="1226" y="642" width="3" height="1" transform="rotate(55 1226 642)" fill="rgb(215,215,215)" opacity="0.70"/><rect x="1254" y="507" width="3" height="1" transform="rotate(54 1254 507)" fill="rgb(190,190,190)" opacity="0.50"/><rect x="1186" y="629" width="3" height="1.4" transform="rotate(-35 1186 629)" fill="rgb(150,150,150)" opacity="0.75"/><rect x="1216" y="524" width="2" height="1" transform="rotate(58 1216 524)" fill="rgb(190,190,190)" opacity="0.78"/><rect x="1219" y="487" width="3" height="1.4" transform="rotate(-29 1219 487)" fill="rgb(170,170,170)" opacity="0.47"/><rect x="1243" y="602" width="3" height="2" transform="rotate(-31 1243 602)" fill="rgb(190,190,190)" opacity="0.73"/><rect x="1172" y="550" width="3" height="1.4" transform="rotate(-30 1172 550)" fill="rgb(150,150,150)" opacity="0.76"/><rect x="1220" y="604" width="3" height="2" transform="rotate(49 1220 604)" fill="rgb(170,170,170)" opacity="0.86"/><rect x="1157" y="574" width="2" height="1" transform="rotate(51 1157 574)" fill="rgb(170,170,170)" opacity="0.48"/><rect x="1167" y="605" width="4" height="2" transform="rotate(-35 1167 605)" fill="rgb(190,190,190)" opacity="0.80"/><rect x="1266" y="533" width="2" height="2" transform="rotate(50 1266 533)" fill="rgb(235,235,235)" opacity="0.65"/><rect x="1204" y="576" width="4" height="2" transform="rotate(-40 1204 576)" fill="rgb(190,190,190)" opacity="0.58"/><rect x="1188" y="617" width="5" height="1.4" transform="rotate(-39 1188 617)" fill="rgb(235,235,235)" opacity="0.57"/><rect x="1187" y="505" width="2" height="2" transform="rotate(50 1187 505)" fill="rgb(235,235,235)" opacity="0.45"/><rect x="1210" y="579" width="6" height="1.4" transform="rotate(-37 1210 579)" fill="rgb(235,235,235)" opacity="0.46"/><rect x="1222" y="621" width="3" height="1.4" transform="rotate(-37 1222 621)" fill="rgb(150,150,150)" opacity="0.47"/><rect x="1288" y="592" width="3" height="1.4" transform="rotate(50 1288 592)" fill="rgb(170,170,170)" opacity="0.56"/><rect x="1220" y="682" width="4" height="2" transform="rotate(50 1220 682)" fill="rgb(235,235,235)" opacity="0.71"/><rect x="1123" y="601" width="2" height="1" transform="rotate(51 1123 601)" fill="rgb(235,235,235)" opacity="0.83"/><rect x="1133" y="530" width="2" height="1.4" transform="rotate(-36 1133 530)" fill="rgb(170,170,170)" opacity="0.76"/><rect x="1227" y="560" width="3" height="1.4" transform="rotate(53 1227 560)" fill="rgb(170,170,170)" opacity="0.79"/><rect x="1234" y="571" width="2" height="1" transform="rotate(-38 1234 571)" fill="rgb(190,190,190)" opacity="0.51"/><rect x="1213" y="626" width="4" height="1" transform="rotate(49 1213 626)" fill="rgb(190,190,190)" opacity="0.69"/><rect x="1235" y="460" width="5" height="2" transform="rotate(52 1235 460)" fill="rgb(235,235,235)" opacity="0.60"/><rect x="1185" y="759" width="3" height="1" transform="rotate(59 1185 759)" fill="rgb(235,235,235)" opacity="0.55"/><rect x="1166" y="609" width="4" height="2" transform="rotate(50 1166 609)" fill="rgb(215,215,215)" opacity="0.52"/><rect x="1261" y="550" width="5" height="1" transform="rotate(55 1261 550)" fill="rgb(235,235,235)" opacity="0.61"/><rect x="1226" y="515" width="6" height="2" transform="rotate(-33 1226 515)" fill="rgb(190,190,190)" opacity="0.49"/><rect x="1160" y="532" width="3" height="1.4" transform="rotate(49 1160 532)" fill="rgb(150,150,150)" opacity="0.69"/><rect x="1164" y="600" width="4" height="1" transform="rotate(-37 1164 600)" fill="rgb(150,150,150)" opacity="0.55"/><rect x="1198" y="610" width="2" height="2" transform="rotate(-32 1198 610)" fill="rgb(190,190,190)" opacity="0.54"/><rect x="1255" y="562" width="2" height="2" transform="rotate(-30 1255 562)" fill="rgb(150,150,150)" opacity="0.75"/><rect x="1178" y="528" width="5" height="2" transform="rotate(58 1178 528)" fill="rgb(150,150,150)" opacity="0.86"/><rect x="1207" y="556" width="6" height="1" transform="rotate(49 1207 556)" fill="rgb(150,150,150)" opacity="0.61"/><rect x="1205" y="530" width="3" height="2" transform="rotate(54 1205 530)" fill="rgb(150,150,150)" opacity="0.90"/><rect x="1169" y="527" width="6" height="1.4" transform="rotate(57 1169 527)" fill="rgb(150,150,150)" opacity="0.54"/><rect x="1207" y="590" width="3" height="1" transform="rotate(-40 1207 590)" fill="rgb(235,235,235)" opacity="0.49"/><rect x="1175" y="545" width="2" height="1" transform="rotate(53 1175 545)" fill="rgb(150,150,150)" opacity="0.45"/><rect x="1212" y="594" width="3" height="2" transform="rotate(51 1212 594)" fill="rgb(190,190,190)" opacity="0.65"/><rect x="1276" y="515" width="6" height="1" transform="rotate(-30 1276 515)" fill="rgb(170,170,170)" opacity="0.55"/><rect x="1205" y="587" width="4" height="1" transform="rotate(52 1205 587)" fill="rgb(150,150,150)" opacity="0.77"/><rect x="1134" y="587" width="2" height="2" transform="rotate(-38 1134 587)" fill="rgb(190,190,190)" opacity="0.58"/><rect x="1217" y="510" width="2" height="1" transform="rotate(57 1217 510)" fill="rgb(190,190,190)" opacity="0.56"/><rect x="1202" y="566" width="4" height="1.4" transform="rotate(57 1202 566)" fill="rgb(190,190,190)" opacity="0.47"/><rect x="673" y="786" width="3" height="1.4" transform="rotate(-38 673 786)" fill="rgb(235,235,235)" opacity="0.59"/><rect x="636" y="805" width="5" height="1" transform="rotate(-39 636 805)" fill="rgb(235,235,235)" opacity="0.77"/><rect x="633" y="802" width="3" height="1" transform="rotate(-38 633 802)" fill="rgb(235,235,235)" opacity="0.56"/><rect x="670" y="825" width="2" height="2" transform="rotate(-44 670 825)" fill="rgb(150,150,150)" opacity="0.81"/><rect x="619" y="839" width="3" height="1" transform="rotate(49 619 839)" fill="rgb(235,235,235)" opacity="0.63"/><rect x="654" y="884" width="3" height="1.4" transform="rotate(45 654 884)" fill="rgb(150,150,150)" opacity="0.58"/><rect x="635" y="849" width="2" height="2" transform="rotate(-38 635 849)" fill="rgb(170,170,170)" opacity="0.55"/><rect x="625" y="880" width="6" height="1.4" transform="rotate(49 625 880)" fill="rgb(190,190,190)" opacity="0.87"/><rect x="662" y="840" width="2" height="2" transform="rotate(52 662 840)" fill="rgb(150,150,150)" opacity="0.66"/><rect x="688" y="881" width="4" height="2" transform="rotate(-35 688 881)" fill="rgb(215,215,215)" opacity="0.70"/><rect x="653" y="845" width="3" height="1.4" transform="rotate(-35 653 845)" fill="rgb(215,215,215)" opacity="0.80"/><rect x="681" y="818" width="6" height="1" transform="rotate(-44 681 818)" fill="rgb(150,150,150)" opacity="0.53"/><rect x="577" y="832" width="4" height="1" transform="rotate(51 577 832)" fill="rgb(215,215,215)" opacity="0.85"/><rect x="645" y="879" width="2" height="1" transform="rotate(53 645 879)" fill="rgb(150,150,150)" opacity="0.58"/><rect x="639" y="801" width="2" height="2" transform="rotate(-35 639 801)" fill="rgb(235,235,235)" opacity="0.60"/><rect x="654" y="811" width="2" height="1" transform="rotate(-38 654 811)" fill="rgb(150,150,150)" opacity="0.68"/><rect x="647" y="889" width="4" height="1.4" transform="rotate(48 647 889)" fill="rgb(170,170,170)" opacity="0.87"/><rect x="680" y="870" width="6" height="2" transform="rotate(-46 680 870)" fill="rgb(150,150,150)" opacity="0.47"/><rect x="576" y="767" width="6" height="1" transform="rotate(-41 576 767)" fill="rgb(150,150,150)" opacity="0.56"/><rect x="622" y="818" width="3" height="1" transform="rotate(46 622 818)" fill="rgb(235,235,235)" opacity="0.85"/><rect x="622" y="785" width="5" height="1" transform="rotate(-37 622 785)" fill="rgb(190,190,190)" opacity="0.75"/><rect x="673" y="878" width="6" height="1.4" transform="rotate(52 673 878)" fill="rgb(190,190,190)" opacity="0.58"/><rect x="634" y="831" width="3" height="1" transform="rotate(55 634 831)" fill="rgb(235,235,235)" opacity="0.57"/><rect x="658" y="865" width="4" height="2" transform="rotate(52 658 865)" fill="rgb(215,215,215)" opacity="0.49"/><rect x="607" y="868" width="3" height="1" transform="rotate(55 607 868)" fill="rgb(215,215,215)" opacity="0.86"/><rect x="628" y="908" width="5" height="1.4" transform="rotate(44 628 908)" fill="rgb(235,235,235)" opacity="0.52"/><rect x="686" y="858" width="4" height="2" transform="rotate(-44 686 858)" fill="rgb(170,170,170)" opacity="0.48"/><rect x="651" y="836" width="2" height="1.4" transform="rotate(-39 651 836)" fill="rgb(235,235,235)" opacity="0.67"/><rect x="670" y="794" width="5" height="1.4" transform="rotate(-43 670 794)" fill="rgb(150,150,150)" opacity="0.55"/><rect x="571" y="823" width="5" height="1.4" transform="rotate(55 571 823)" fill="rgb(215,215,215)" opacity="0.63"/><rect x="960" y="559" width="3" height="1" transform="rotate(-43 960 559)" fill="rgb(170,170,170)" opacity="0.65"/><rect x="948" y="550" width="6" height="1" transform="rotate(-45 948 550)" fill="rgb(190,190,190)" opacity="0.49"/><rect x="910" y="536" width="3" height="1.4" transform="rotate(56 910 536)" fill="rgb(215,215,215)" opacity="0.77"/><rect x="983" y="536" width="6" height="1" transform="rotate(50 983 536)" fill="rgb(170,170,170)" opacity="0.85"/><rect x="958" y="555" width="5" height="1.4" transform="rotate(50 958 555)" fill="rgb(150,150,150)" opacity="0.78"/><rect x="927" y="518" width="3" height="1" transform="rotate(-43 927 518)" fill="rgb(235,235,235)" opacity="0.78"/><rect x="933" y="570" width="5" height="1.4" transform="rotate(-36 933 570)" fill="rgb(235,235,235)" opacity="0.88"/><rect x="921" y="562" width="5" height="1.4" transform="rotate(-45 921 562)" fill="rgb(170,170,170)" opacity="0.73"/><rect x="860" y="539" width="5" height="1.4" transform="rotate(-43 860 539)" fill="rgb(150,150,150)" opacity="0.51"/><rect x="963" y="543" width="3" height="2" transform="rotate(52 963 543)" fill="rgb(235,235,235)" opacity="0.66"/><rect x="858" y="544" width="5" height="1.4" transform="rotate(-43 858 544)" fill="rgb(215,215,215)" opacity="0.77"/><rect x="906" y="568" width="6" height="1" transform="rotate(55 906 568)" fill="rgb(170,170,170)" opacity="0.56"/><rect x="930" y="576" width="6" height="1" transform="rotate(54 930 576)" fill="rgb(235,235,235)" opacity="0.74"/><rect x="853" y="578" width="5" height="2" transform="rotate(52 853 578)" fill="rgb(190,190,190)" opacity="0.80"/><rect x="955" y="632" width="2" height="1.4" transform="rotate(53 955 632)" fill="rgb(235,235,235)" opacity="0.45"/><rect x="916" y="541" width="3" height="1.4" transform="rotate(55 916 541)" fill="rgb(170,170,170)" opacity="0.70"/><rect x="902" y="542" width="2" height="1" transform="rotate(52 902 542)" fill="rgb(170,170,170)" opacity="0.50"/><rect x="981" y="576" width="3" height="1" transform="rotate(56 981 576)" fill="rgb(170,170,170)" opacity="0.48"/><rect x="931" y="575" width="3" height="2" transform="rotate(52 931 575)" fill="rgb(170,170,170)" opacity="0.59"/><rect x="961" y="578" width="3" height="1.4" transform="rotate(-37 961 578)" fill="rgb(215,215,215)" opacity="0.65"/><rect x="871" y="541" width="3" height="2" transform="rotate(48 871 541)" fill="rgb(235,235,235)" opacity="0.57"/><rect x="960" y="541" width="3" height="1.4" transform="rotate(-38 960 541)" fill="rgb(190,190,190)" opacity="0.66"/><rect x="986" y="586" width="3" height="1.4" transform="rotate(53 986 586)" fill="rgb(170,170,170)" opacity="0.86"/><rect x="927" y="519" width="5" height="1.4" transform="rotate(-44 927 519)" fill="rgb(190,190,190)" opacity="0.63"/><rect x="975" y="546" width="2" height="2" transform="rotate(54 975 546)" fill="rgb(150,150,150)" opacity="0.46"/><rect x="957" y="560" width="3" height="2" transform="rotate(56 957 560)" fill="rgb(190,190,190)" opacity="0.88"/><rect x="954" y="542" width="3" height="1.4" transform="rotate(-44 954 542)" fill="rgb(170,170,170)" opacity="0.57"/><rect x="969" y="534" width="5" height="2" transform="rotate(44 969 534)" fill="rgb(235,235,235)" opacity="0.86"/><rect x="893" y="562" width="2" height="1" transform="rotate(-41 893 562)" fill="rgb(235,235,235)" opacity="0.72"/><rect x="917" y="516" width="4" height="2" transform="rotate(-37 917 516)" fill="rgb(150,150,150)" opacity="0.82"/><rect x="954" y="554" width="6" height="1" transform="rotate(46 954 554)" fill="rgb(215,215,215)" opacity="0.77"/><rect x="920" y="567" width="3" height="1" transform="rotate(-36 920 567)" fill="rgb(190,190,190)" opacity="0.56"/><rect x="1013" y="548" width="4" height="1" transform="rotate(-39 1013 548)" fill="rgb(215,215,215)" opacity="0.77"/><rect x="927" y="528" width="2" height="2" transform="rotate(-41 927 528)" fill="rgb(170,170,170)" opacity="0.69"/><rect x="883" y="601" width="4" height="1" transform="rotate(-35 883 601)" fill="rgb(190,190,190)" opacity="0.60"/><rect x="976" y="601" width="5" height="1" transform="rotate(55 976 601)" fill="rgb(215,215,215)" opacity="0.52"/><rect x="937" y="531" width="2" height="1" transform="rotate(-43 937 531)" fill="rgb(170,170,170)" opacity="0.90"/><rect x="959" y="525" width="4" height="1" transform="rotate(55 959 525)" fill="rgb(215,215,215)" opacity="0.67"/><rect x="991" y="577" width="3" height="2" transform="rotate(48 991 577)" fill="rgb(215,215,215)" opacity="0.57"/><rect x="936" y="560" width="4" height="2" transform="rotate(-46 936 560)" fill="rgb(170,170,170)" opacity="0.72"/><rect x="999" y="586" width="5" height="1" transform="rotate(44 999 586)" fill="rgb(235,235,235)" opacity="0.78"/><rect x="956" y="573" width="3" height="1" transform="rotate(46 956 573)" fill="rgb(215,215,215)" opacity="0.70"/><rect x="942" y="518" width="3" height="2" transform="rotate(-36 942 518)" fill="rgb(215,215,215)" opacity="0.69"/><rect x="919" y="624" width="6" height="1" transform="rotate(-34 919 624)" fill="rgb(170,170,170)" opacity="0.76"/><rect x="929" y="582" width="3" height="1.4" transform="rotate(-36 929 582)" fill="rgb(170,170,170)" opacity="0.78"/><rect x="921" y="589" width="5" height="2" transform="rotate(47 921 589)" fill="rgb(215,215,215)" opacity="0.80"/><rect x="932" y="563" width="6" height="2" transform="rotate(-42 932 563)" fill="rgb(170,170,170)" opacity="0.52"/><rect x="999" y="587" width="5" height="1" transform="rotate(-40 999 587)" fill="rgb(170,170,170)" opacity="0.80"/><rect x="935" y="581" width="3" height="2" transform="rotate(-44 935 581)" fill="rgb(150,150,150)" opacity="0.76"/><rect x="936" y="530" width="5" height="2" transform="rotate(55 936 530)" fill="rgb(235,235,235)" opacity="0.75"/><rect x="1009" y="615" width="3" height="1" transform="rotate(51 1009 615)" fill="rgb(215,215,215)" opacity="0.73"/><rect x="831" y="582" width="6" height="1" transform="rotate(49 831 582)" fill="rgb(215,215,215)" opacity="0.62"/><rect x="911" y="551" width="5" height="1" transform="rotate(55 911 551)" fill="rgb(235,235,235)" opacity="0.48"/><rect x="955" y="562" width="5" height="2" transform="rotate(53 955 562)" fill="rgb(235,235,235)" opacity="0.60"/><rect x="923" y="550" width="3" height="2" transform="rotate(-37 923 550)" fill="rgb(215,215,215)" opacity="0.85"/><rect x="904" y="526" width="6" height="1.4" transform="rotate(-44 904 526)" fill="rgb(215,215,215)" opacity="0.82"/><rect x="973" y="607" width="6" height="2" transform="rotate(45 973 607)" fill="rgb(215,215,215)" opacity="0.81"/><rect x="888" y="586" width="3" height="1.4" transform="rotate(-41 888 586)" fill="rgb(235,235,235)" opacity="0.56"/><rect x="927" y="578" width="2" height="1.4" transform="rotate(-35 927 578)" fill="rgb(235,235,235)" opacity="0.81"/><rect x="943" y="556" width="6" height="1.4" transform="rotate(48 943 556)" fill="rgb(150,150,150)" opacity="0.54"/><rect x="1154" y="681" width="3" height="2" transform="rotate(90 1154 681)" fill="rgb(170,170,170)" opacity="0.58"/><rect x="1151" y="692" width="4" height="1" transform="rotate(90 1151 692)" fill="rgb(150,150,150)" opacity="0.61"/><rect x="1128" y="702" width="4" height="1.4" transform="rotate(89 1128 702)" fill="rgb(235,235,235)" opacity="0.81"/><rect x="1173" y="671" width="3" height="1.4" transform="rotate(-4 1173 671)" fill="rgb(150,150,150)" opacity="0.62"/><rect x="1140" y="689" width="5" height="1.4" transform="rotate(91 1140 689)" fill="rgb(190,190,190)" opacity="0.78"/><rect x="1129" y="720" width="6" height="1.4" transform="rotate(85 1129 720)" fill="rgb(150,150,150)" opacity="0.67"/><rect x="1144" y="707" width="2" height="2" transform="rotate(5 1144 707)" fill="rgb(235,235,235)" opacity="0.59"/><rect x="1125" y="700" width="4" height="1" transform="rotate(4 1125 700)" fill="rgb(190,190,190)" opacity="0.65"/><rect x="1156" y="728" width="2" height="1" transform="rotate(4 1156 728)" fill="rgb(170,170,170)" opacity="0.75"/><rect x="1175" y="651" width="6" height="1.4" transform="rotate(-5 1175 651)" fill="rgb(150,150,150)" opacity="0.65"/><rect x="1118" y="697" width="3" height="1" transform="rotate(86 1118 697)" fill="rgb(190,190,190)" opacity="0.46"/><rect x="1160" y="668" width="2" height="2" transform="rotate(95 1160 668)" fill="rgb(235,235,235)" opacity="0.85"/><rect x="1153" y="680" width="5" height="2" transform="rotate(84 1153 680)" fill="rgb(150,150,150)" opacity="0.67"/><rect x="1155" y="671" width="3" height="2" transform="rotate(5 1155 671)" fill="rgb(235,235,235)" opacity="0.58"/><rect x="1153" y="671" width="3" height="1" transform="rotate(86 1153 671)" fill="rgb(150,150,150)" opacity="0.80"/><rect x="1187" y="659" width="6" height="1" transform="rotate(6 1187 659)" fill="rgb(150,150,150)" opacity="0.47"/><rect x="1163" y="687" width="2" height="2" transform="rotate(1 1163 687)" fill="rgb(170,170,170)" opacity="0.49"/><rect x="1139" y="689" width="3" height="1" transform="rotate(-5 1139 689)" fill="rgb(150,150,150)" opacity="0.60"/><rect x="1136" y="700" width="5" height="1" transform="rotate(85 1136 700)" fill="rgb(170,170,170)" opacity="0.51"/><rect x="1145" y="705" width="2" height="1" transform="rotate(-3 1145 705)" fill="rgb(170,170,170)" opacity="0.75"/><rect x="1156" y="684" width="5" height="1.4" transform="rotate(5 1156 684)" fill="rgb(190,190,190)" opacity="0.50"/><rect x="1176" y="687" width="3" height="2" transform="rotate(84 1176 687)" fill="rgb(150,150,150)" opacity="0.82"/><rect x="1154" y="724" width="6" height="2" transform="rotate(6 1154 724)" fill="rgb(170,170,170)" opacity="0.80"/><rect x="1123" y="694" width="2" height="1" transform="rotate(4 1123 694)" fill="rgb(150,150,150)" opacity="0.72"/><rect x="1148" y="688" width="3" height="1.4" transform="rotate(87 1148 688)" fill="rgb(170,170,170)" opacity="0.81"/><rect x="1152" y="680" width="3" height="1.4" transform="rotate(-1 1152 680)" fill="rgb(235,235,235)" opacity="0.75"/><rect x="1159" y="685" width="6" height="1" transform="rotate(91 1159 685)" fill="rgb(150,150,150)" opacity="0.65"/><rect x="1156" y="677" width="2" height="2" transform="rotate(0 1156 677)" fill="rgb(215,215,215)" opacity="0.65"/><rect x="1123" y="694" width="6" height="1" transform="rotate(84 1123 694)" fill="rgb(215,215,215)" opacity="0.80"/><rect x="1124" y="682" width="3" height="1.4" transform="rotate(96 1124 682)" fill="rgb(190,190,190)" opacity="0.59"/><rect x="838" y="593" width="2" height="1" transform="rotate(50 838 593)" fill="rgb(190,190,190)" opacity="0.57"/><rect x="812" y="587" width="5" height="1" transform="rotate(-38 812 587)" fill="rgb(235,235,235)" opacity="0.78"/><rect x="793" y="599" width="2" height="2" transform="rotate(-37 793 599)" fill="rgb(170,170,170)" opacity="0.86"/><rect x="850" y="599" width="3" height="2" transform="rotate(56 850 599)" fill="rgb(215,215,215)" opacity="0.90"/><rect x="796" y="653" width="2" height="1.4" transform="rotate(-46 796 653)" fill="rgb(190,190,190)" opacity="0.55"/><rect x="875" y="585" width="5" height="1.4" transform="rotate(-40 875 585)" fill="rgb(235,235,235)" opacity="0.55"/><rect x="847" y="581" width="4" height="2" transform="rotate(-39 847 581)" fill="rgb(150,150,150)" opacity="0.63"/><rect x="861" y="616" width="5" height="2" transform="rotate(49 861 616)" fill="rgb(170,170,170)" opacity="0.85"/><rect x="777" y="606" width="3" height="1.4" transform="rotate(-40 777 606)" fill="rgb(235,235,235)" opacity="0.75"/><rect x="841" y="610" width="3" height="1.4" transform="rotate(50 841 610)" fill="rgb(190,190,190)" opacity="0.79"/><rect x="799" y="558" width="5" height="1" transform="rotate(-39 799 558)" fill="rgb(190,190,190)" opacity="0.51"/><rect x="837" y="614" width="3" height="1.4" transform="rotate(49 837 614)" fill="rgb(190,190,190)" opacity="0.79"/><rect x="797" y="590" width="6" height="1" transform="rotate(-42 797 590)" fill="rgb(235,235,235)" opacity="0.73"/><rect x="850" y="596" width="3" height="1.4" transform="rotate(-41 850 596)" fill="rgb(150,150,150)" opacity="0.88"/><rect x="819" y="616" width="6" height="1.4" transform="rotate(-45 819 616)" fill="rgb(190,190,190)" opacity="0.80"/><rect x="787" y="594" width="3" height="1" transform="rotate(-43 787 594)" fill="rgb(215,215,215)" opacity="0.90"/><rect x="784" y="593" width="3" height="1.4" transform="rotate(49 784 593)" fill="rgb(235,235,235)" opacity="0.72"/><rect x="837" y="601" width="4" height="1" transform="rotate(45 837 601)" fill="rgb(190,190,190)" opacity="0.45"/><rect x="845" y="611" width="6" height="2" transform="rotate(-39 845 611)" fill="rgb(190,190,190)" opacity="0.52"/><rect x="815" y="632" width="4" height="2" transform="rotate(52 815 632)" fill="rgb(170,170,170)" opacity="0.87"/><rect x="800" y="587" width="4" height="1" transform="rotate(-46 800 587)" fill="rgb(215,215,215)" opacity="0.63"/><rect x="900" y="594" width="5" height="1" transform="rotate(-37 900 594)" fill="rgb(190,190,190)" opacity="0.77"/><rect x="824" y="597" width="5" height="1" transform="rotate(47 824 597)" fill="rgb(190,190,190)" opacity="0.48"/><rect x="796" y="600" width="3" height="1" transform="rotate(-39 796 600)" fill="rgb(215,215,215)" opacity="0.61"/><rect x="855" y="630" width="3" height="2" transform="rotate(-36 855 630)" fill="rgb(235,235,235)" opacity="0.84"/><rect x="849" y="624" width="6" height="1" transform="rotate(-38 849 624)" fill="rgb(150,150,150)" opacity="0.49"/><rect x="802" y="620" width="2" height="1.4" transform="rotate(-37 802 620)" fill="rgb(215,215,215)" opacity="0.77"/><rect x="799" y="610" width="3" height="1.4" transform="rotate(53 799 610)" fill="rgb(170,170,170)" opacity="0.60"/><rect x="769" y="575" width="3" height="1.4" transform="rotate(52 769 575)" fill="rgb(190,190,190)" opacity="0.74"/><rect x="840" y="619" width="5" height="1.4" transform="rotate(50 840 619)" fill="rgb(215,215,215)" opacity="0.52"/><rect x="1084" y="389" width="3" height="1.4" transform="rotate(58 1084 389)" fill="rgb(190,190,190)" opacity="0.57"/><rect x="1124" y="460" width="3" height="1" transform="rotate(59 1124 460)" fill="rgb(190,190,190)" opacity="0.67"/><rect x="1138" y="404" width="5" height="1" transform="rotate(52 1138 404)" fill="rgb(215,215,215)" opacity="0.74"/><rect x="1159" y="445" width="6" height="1.4" transform="rotate(56 1159 445)" fill="rgb(215,215,215)" opacity="0.58"/><rect x="1099" y="401" width="2" height="1.4" transform="rotate(-34 1099 401)" fill="rgb(235,235,235)" opacity="0.55"/><rect x="1074" y="384" width="5" height="1.4" transform="rotate(-33 1074 384)" fill="rgb(190,190,190)" opacity="0.56"/><rect x="1116" y="476" width="6" height="1.4" transform="rotate(55 1116 476)" fill="rgb(190,190,190)" opacity="0.74"/><rect x="1161" y="430" width="3" height="1" transform="rotate(-31 1161 430)" fill="rgb(235,235,235)" opacity="0.48"/><rect x="1137" y="418" width="4" height="1" transform="rotate(-32 1137 418)" fill="rgb(170,170,170)" opacity="0.76"/><rect x="1127" y="347" width="6" height="2" transform="rotate(-39 1127 347)" fill="rgb(235,235,235)" opacity="0.81"/><rect x="1124" y="373" width="4" height="1.4" transform="rotate(52 1124 373)" fill="rgb(190,190,190)" opacity="0.59"/><rect x="1103" y="469" width="3" height="2" transform="rotate(-34 1103 469)" fill="rgb(170,170,170)" opacity="0.85"/><rect x="1147" y="398" width="3" height="1.4" transform="rotate(51 1147 398)" fill="rgb(215,215,215)" opacity="0.49"/><rect x="1088" y="376" width="4" height="1.4" transform="rotate(54 1088 376)" fill="rgb(235,235,235)" opacity="0.67"/><rect x="1125" y="379" width="6" height="1" transform="rotate(-39 1125 379)" fill="rgb(170,170,170)" opacity="0.88"/><rect x="1100" y="396" width="5" height="1.4" transform="rotate(-36 1100 396)" fill="rgb(215,215,215)" opacity="0.86"/><rect x="1141" y="426" width="3" height="2" transform="rotate(-29 1141 426)" fill="rgb(235,235,235)" opacity="0.85"/><rect x="1114" y="444" width="2" height="2" transform="rotate(-29 1114 444)" fill="rgb(235,235,235)" opacity="0.89"/><rect x="1148" y="452" width="3" height="2" transform="rotate(-35 1148 452)" fill="rgb(170,170,170)" opacity="0.84"/><rect x="1126" y="443" width="3" height="2" transform="rotate(-38 1126 443)" fill="rgb(170,170,170)" opacity="0.64"/><rect x="1129" y="379" width="2" height="2" transform="rotate(-38 1129 379)" fill="rgb(235,235,235)" opacity="0.58"/><rect x="1125" y="367" width="4" height="2" transform="rotate(-38 1125 367)" fill="rgb(215,215,215)" opacity="0.76"/><rect x="1093" y="419" width="4" height="2" transform="rotate(-36 1093 419)" fill="rgb(150,150,150)" opacity="0.57"/><rect x="1104" y="414" width="3" height="1.4" transform="rotate(-41 1104 414)" fill="rgb(235,235,235)" opacity="0.62"/><rect x="1113" y="415" width="4" height="2" transform="rotate(-32 1113 415)" fill="rgb(150,150,150)" opacity="0.53"/><rect x="832" y="901" width="4" height="1.4" transform="rotate(44 832 901)" fill="rgb(170,170,170)" opacity="0.84"/><rect x="878" y="934" width="3" height="1" transform="rotate(50 878 934)" fill="rgb(215,215,215)" opacity="0.72"/><rect x="824" y="958" width="2" height="1.4" transform="rotate(-47 824 958)" fill="rgb(215,215,215)" opacity="0.74"/><rect x="851" y="901" width="6" height="1" transform="rotate(-48 851 901)" fill="rgb(150,150,150)" opacity="0.61"/><rect x="940" y="942" width="3" height="1" transform="rotate(-48 940 942)" fill="rgb(170,170,170)" opacity="0.81"/><rect x="887" y="866" width="3" height="2" transform="rotate(54 887 866)" fill="rgb(215,215,215)" opacity="0.61"/><rect x="801" y="943" width="3" height="1" transform="rotate(52 801 943)" fill="rgb(235,235,235)" opacity="0.61"/><rect x="918" y="891" width="2" height="2" transform="rotate(-47 918 891)" fill="rgb(190,190,190)" opacity="0.80"/><rect x="887" y="854" width="5" height="1.4" transform="rotate(-43 887 854)" fill="rgb(215,215,215)" opacity="0.60"/><rect x="998" y="863" width="2" height="1" transform="rotate(-41 998 863)" fill="rgb(190,190,190)" opacity="0.62"/><rect x="940" y="987" width="4" height="2" transform="rotate(46 940 987)" fill="rgb(170,170,170)" opacity="0.65"/><rect x="1024" y="861" width="3" height="1.4" transform="rotate(45 1024 861)" fill="rgb(190,190,190)" opacity="0.60"/><rect x="929" y="891" width="2" height="1" transform="rotate(47 929 891)" fill="rgb(170,170,170)" opacity="0.63"/><rect x="1007" y="939" width="2" height="1" transform="rotate(-44 1007 939)" fill="rgb(190,190,190)" opacity="0.69"/><rect x="949" y="941" width="6" height="2" transform="rotate(-47 949 941)" fill="rgb(190,190,190)" opacity="0.83"/><rect x="904" y="902" width="3" height="1" transform="rotate(47 904 902)" fill="rgb(170,170,170)" opacity="0.85"/><rect x="830" y="962" width="5" height="2" transform="rotate(47 830 962)" fill="rgb(190,190,190)" opacity="0.86"/><rect x="927" y="997" width="4" height="2" transform="rotate(-44 927 997)" fill="rgb(150,150,150)" opacity="0.84"/><rect x="888" y="911" width="3" height="1" transform="rotate(43 888 911)" fill="rgb(170,170,170)" opacity="0.57"/><rect x="940" y="916" width="6" height="1.4" transform="rotate(46 940 916)" fill="rgb(190,190,190)" opacity="0.52"/><rect x="843" y="856" width="3" height="1" transform="rotate(43 843 856)" fill="rgb(150,150,150)" opacity="0.72"/><rect x="881" y="883" width="5" height="2" transform="rotate(-40 881 883)" fill="rgb(170,170,170)" opacity="0.57"/><rect x="963" y="925" width="3" height="1.4" transform="rotate(-36 963 925)" fill="rgb(150,150,150)" opacity="0.84"/><rect x="885" y="929" width="4" height="2" transform="rotate(45 885 929)" fill="rgb(215,215,215)" opacity="0.50"/><rect x="887" y="880" width="6" height="1.4" transform="rotate(52 887 880)" fill="rgb(170,170,170)" opacity="0.51"/><rect x="941" y="919" width="5" height="1.4" transform="rotate(-40 941 919)" fill="rgb(235,235,235)" opacity="0.74"/><rect x="922" y="963" width="5" height="1" transform="rotate(51 922 963)" fill="rgb(215,215,215)" opacity="0.89"/><rect x="955" y="845" width="4" height="2" transform="rotate(45 955 845)" fill="rgb(215,215,215)" opacity="0.62"/><rect x="927" y="870" width="3" height="2" transform="rotate(-44 927 870)" fill="rgb(150,150,150)" opacity="0.56"/><rect x="1009" y="914" width="5" height="1.4" transform="rotate(48 1009 914)" fill="rgb(235,235,235)" opacity="0.64"/><rect x="906" y="908" width="3" height="1" transform="rotate(49 906 908)" fill="rgb(190,190,190)" opacity="0.50"/><rect x="866" y="904" width="3" height="2" transform="rotate(48 866 904)" fill="rgb(170,170,170)" opacity="0.60"/><rect x="948" y="942" width="6" height="1" transform="rotate(-40 948 942)" fill="rgb(215,215,215)" opacity="0.68"/><rect x="894" y="892" width="3" height="2" transform="rotate(-41 894 892)" fill="rgb(170,170,170)" opacity="0.86"/><rect x="967" y="838" width="3" height="2" transform="rotate(-40 967 838)" fill="rgb(215,215,215)" opacity="0.81"/><rect x="883" y="909" width="6" height="2" transform="rotate(-42 883 909)" fill="rgb(215,215,215)" opacity="0.59"/><rect x="946" y="901" width="5" height="1.4" transform="rotate(-40 946 901)" fill="rgb(235,235,235)" opacity="0.79"/><rect x="803" y="866" width="4" height="1.4" transform="rotate(-39 803 866)" fill="rgb(170,170,170)" opacity="0.83"/><rect x="997" y="911" width="5" height="1.4" transform="rotate(-45 997 911)" fill="rgb(150,150,150)" opacity="0.64"/><rect x="954" y="877" width="2" height="1" transform="rotate(51 954 877)" fill="rgb(190,190,190)" opacity="0.61"/><rect x="898" y="915" width="6" height="2" transform="rotate(52 898 915)" fill="rgb(215,215,215)" opacity="0.77"/><rect x="832" y="935" width="3" height="2" transform="rotate(45 832 935)" fill="rgb(190,190,190)" opacity="0.47"/><rect x="966" y="829" width="2" height="2" transform="rotate(-37 966 829)" fill="rgb(170,170,170)" opacity="0.49"/><rect x="892" y="907" width="2" height="2" transform="rotate(-42 892 907)" fill="rgb(150,150,150)" opacity="0.50"/><rect x="922" y="942" width="2" height="1" transform="rotate(-47 922 942)" fill="rgb(215,215,215)" opacity="0.83"/><rect x="960" y="838" width="4" height="1" transform="rotate(49 960 838)" fill="rgb(170,170,170)" opacity="0.78"/><rect x="924" y="868" width="2" height="1" transform="rotate(-38 924 868)" fill="rgb(235,235,235)" opacity="0.51"/><rect x="825" y="869" width="3" height="1" transform="rotate(-41 825 869)" fill="rgb(215,215,215)" opacity="0.77"/><rect x="852" y="943" width="3" height="2" transform="rotate(48 852 943)" fill="rgb(150,150,150)" opacity="0.75"/><rect x="908" y="817" width="2" height="1.4" transform="rotate(-46 908 817)" fill="rgb(190,190,190)" opacity="0.64"/><rect x="1230" y="357" width="4" height="1" transform="rotate(-34 1230 357)" fill="rgb(235,235,235)" opacity="0.48"/><rect x="1259" y="383" width="2" height="1.4" transform="rotate(-27 1259 383)" fill="rgb(215,215,215)" opacity="0.57"/><rect x="1251" y="364" width="6" height="1" transform="rotate(-26 1251 364)" fill="rgb(170,170,170)" opacity="0.71"/><rect x="1254" y="394" width="4" height="2" transform="rotate(55 1254 394)" fill="rgb(170,170,170)" opacity="0.79"/><rect x="1204" y="338" width="3" height="2" transform="rotate(61 1204 338)" fill="rgb(190,190,190)" opacity="0.59"/><rect x="1222" y="386" width="6" height="2" transform="rotate(-26 1222 386)" fill="rgb(150,150,150)" opacity="0.86"/><rect x="1245" y="370" width="5" height="1" transform="rotate(-28 1245 370)" fill="rgb(190,190,190)" opacity="0.84"/><rect x="1247" y="352" width="3" height="1.4" transform="rotate(63 1247 352)" fill="rgb(190,190,190)" opacity="0.53"/><rect x="1249" y="365" width="4" height="1" transform="rotate(59 1249 365)" fill="rgb(235,235,235)" opacity="0.85"/><rect x="1208" y="431" width="4" height="1" transform="rotate(55 1208 431)" fill="rgb(215,215,215)" opacity="0.72"/><rect x="1249" y="413" width="5" height="1" transform="rotate(60 1249 413)" fill="rgb(215,215,215)" opacity="0.61"/><rect x="1229" y="423" width="6" height="1" transform="rotate(-30 1229 423)" fill="rgb(235,235,235)" opacity="0.85"/><rect x="1234" y="399" width="3" height="2" transform="rotate(65 1234 399)" fill="rgb(235,235,235)" opacity="0.54"/><rect x="1268" y="386" width="6" height="1.4" transform="rotate(-35 1268 386)" fill="rgb(170,170,170)" opacity="0.82"/><rect x="1204" y="412" width="6" height="1" transform="rotate(61 1204 412)" fill="rgb(235,235,235)" opacity="0.50"/></g>
</g>
<rect x="2" y="964" width="416" height="65" fill="#000"/><rect x="3" y="965" width="413" height="62" fill="#fffff0"/>
<path d="M33 982 H387 M34 973 V992 M78 973 V992 M122 973 V992 M166 973 V992 M210 973 V992 M254 973 V992 M298 973 V992 M342 973 V992 M386 973 V992" stroke="#000" stroke-width="2" fill="none"/>
<text x="34.5" y="1015.5" text-anchor="middle" font-family="Liberation Serif, serif" font-size="15.5" fill="#000">0.0 km</text>
<text x="122.5" y="1015.5" text-anchor="middle" font-family="Liberation Serif, serif" font-size="15.5" fill="#000">1.0 km</text>
<text x="210.5" y="1015.5" text-anchor="middle" font-family="Liberation Serif, serif" font-size="15.5" fill="#000">2.0 km</text>
<text x="298.5" y="1015.5" text-anchor="middle" font-family="Liberation Serif, serif" font-size="15.5" fill="#000">3.0 km</text>
<text x="386.5" y="1015.5" text-anchor="middle" font-family="Liberation Serif, serif" font-size="15.5" fill="#000">4.0 km</text>
</svg>
<!-- STATUS -->
<div id="status" class="abs">
  <span style="left:3px;letter-spacing:-.335px">RGB(133,133,133) - Pal Idx 133 - (Pal Idx 133) (Мытищи_14.tif)</span>
  <span style="left:1452.5px;letter-spacing:-.7px">1:42880</span>
  <span style="left:1500.5px;letter-spacing:-.49px">TM (WGS84) - ( 2205771.539, 489133.128 )</span>
  <span style="left:1725px;letter-spacing:-.39px">55° 00' 42.7608" N, 50° 29' 0.0271" E</span>
</div>
<svg class="abs" style="left:10px;top:1040px" width="36" height="10" viewBox="0 0 36 10"><ellipse cx="17" cy="17.5" rx="12.5" ry="11.5" fill="#b7c9d8" stroke="#2c5c8c" stroke-width="1.2"/></svg>
<div class="abs" style="left:1912px;top:43px;width:8px;height:74px;background:linear-gradient(90deg,rgba(255,255,255,0),rgba(255,255,255,.45))"></div>
<div class="pane" style="left:1450px;width:46px"></div>
<div class="pane" style="left:1498px;width:222px"></div>
<div class="pane" style="left:1722px;width:198px"></div>
</body>
</html>
